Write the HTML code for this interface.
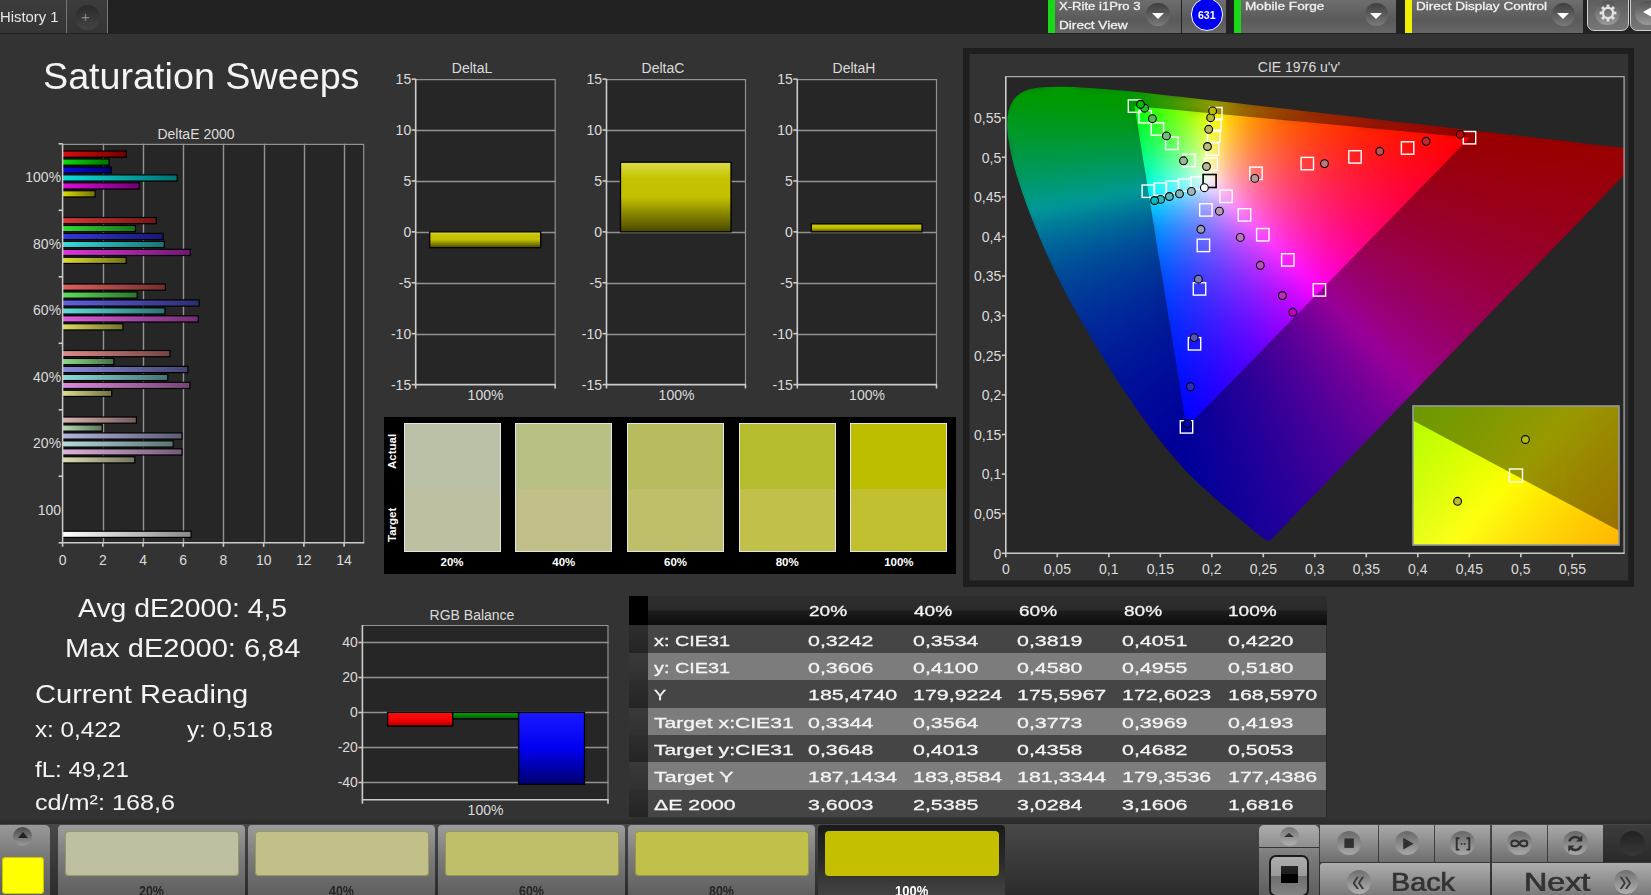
<!DOCTYPE html><html><head><meta charset="utf-8"><title>Saturation Sweeps</title><style>
html,body{margin:0;padding:0}
body{width:1651px;height:895px;overflow:hidden;position:relative;background:#333;font-family:"Liberation Sans",sans-serif;color:#eee}
.a{position:absolute}
svg text{font-family:"Liberation Sans",sans-serif}
.t{position:absolute;white-space:nowrap;line-height:1;transform-origin:0 0}
#topbar{left:0;top:0;width:1651px;height:34px;background:#222}
.tab{top:0;height:33px;background:linear-gradient(#3c3c3c,#353535);border-right:1px solid #777}
.dev{top:0;height:33px;background:linear-gradient(#6e6e6e,#5a5a5a 60%,#666)}
.dd{width:23.6px;height:23.6px;border-radius:50%;background:linear-gradient(#3e3e3e,#7a7a7a);top:2.7px}
.dd:after{content:"";position:absolute;left:5.8px;top:10.2px;border-left:6px solid transparent;border-right:6px solid transparent;border-top:6.4px solid #fff}
.sw{position:absolute;top:422.5px;width:95px;height:127.5px;border:1.2px solid #e4e4e4}
.sw i{position:absolute;left:0;top:0;width:100%;height:65px;display:block}
.swl{position:absolute;top:556px;width:97px;text-align:center;font-size:11.5px;font-weight:bold;color:#fff}
.row{position:absolute;left:648.1px;width:678.4px;height:27.5px}
.cell{position:absolute;font-size:14.5px;line-height:1;white-space:nowrap;transform:scaleX(1.475);transform-origin:0 0;color:#f4f4f4;-webkit-text-stroke:.3px #f4f4f4}
.card{position:absolute;top:824.5px;height:71px;width:187px;border-radius:4px 4px 0 0;background:linear-gradient(#9c9c9c,#7c7c7c 45%,#5e5e5e)}
.card b{position:absolute;left:6.5px;top:6.5px;width:174px;height:44.8px;border-radius:4px;display:block;box-shadow:inset 0 0 0 1px rgba(120,120,60,.55)}
.card span{position:absolute;left:0;width:100%;top:57px;text-align:center;font-size:13px;font-weight:bold;color:#262626}
.btn{position:absolute;top:824.5px;height:37.4px;width:55.3px;background:linear-gradient(#a9a9a9,#6e6e6e)}
.btn u{position:absolute;left:16.2px;top:6.6px;width:24.2px;height:24.2px;border-radius:50%;background:linear-gradient(#686868,#a8a8a8);display:block}
.nav{position:absolute;top:863.1px;height:32px;background:linear-gradient(#adadad,#7a7a7a)}
</style></head><body><svg class="a" style="left:0;top:0" width="1651" height="895"><defs><linearGradient id="g00"><stop offset="0" stop-color="rgb(221,12,12)"/><stop offset="1" stop-color="rgb(115,0,0)"/></linearGradient><linearGradient id="g01"><stop offset="0" stop-color="rgb(12,221,12)"/><stop offset="1" stop-color="rgb(0,115,0)"/></linearGradient><linearGradient id="g02"><stop offset="0" stop-color="rgb(12,12,221)"/><stop offset="1" stop-color="rgb(0,0,115)"/></linearGradient><linearGradient id="g03"><stop offset="0" stop-color="rgb(12,221,221)"/><stop offset="1" stop-color="rgb(0,115,115)"/></linearGradient><linearGradient id="g04"><stop offset="0" stop-color="rgb(221,12,221)"/><stop offset="1" stop-color="rgb(115,0,115)"/></linearGradient><linearGradient id="g05"><stop offset="0" stop-color="rgb(221,221,12)"/><stop offset="1" stop-color="rgb(115,115,0)"/></linearGradient><linearGradient id="g10"><stop offset="0" stop-color="rgb(221,54,54)"/><stop offset="1" stop-color="rgb(115,23,23)"/></linearGradient><linearGradient id="g11"><stop offset="0" stop-color="rgb(54,221,54)"/><stop offset="1" stop-color="rgb(23,115,23)"/></linearGradient><linearGradient id="g12"><stop offset="0" stop-color="rgb(54,54,221)"/><stop offset="1" stop-color="rgb(23,23,115)"/></linearGradient><linearGradient id="g13"><stop offset="0" stop-color="rgb(54,221,221)"/><stop offset="1" stop-color="rgb(23,115,115)"/></linearGradient><linearGradient id="g14"><stop offset="0" stop-color="rgb(221,54,221)"/><stop offset="1" stop-color="rgb(115,23,115)"/></linearGradient><linearGradient id="g15"><stop offset="0" stop-color="rgb(221,221,54)"/><stop offset="1" stop-color="rgb(115,115,23)"/></linearGradient><linearGradient id="g20"><stop offset="0" stop-color="rgb(221,96,96)"/><stop offset="1" stop-color="rgb(115,46,46)"/></linearGradient><linearGradient id="g21"><stop offset="0" stop-color="rgb(96,221,96)"/><stop offset="1" stop-color="rgb(46,115,46)"/></linearGradient><linearGradient id="g22"><stop offset="0" stop-color="rgb(96,96,221)"/><stop offset="1" stop-color="rgb(46,46,115)"/></linearGradient><linearGradient id="g23"><stop offset="0" stop-color="rgb(96,221,221)"/><stop offset="1" stop-color="rgb(46,115,115)"/></linearGradient><linearGradient id="g24"><stop offset="0" stop-color="rgb(221,96,221)"/><stop offset="1" stop-color="rgb(115,46,115)"/></linearGradient><linearGradient id="g25"><stop offset="0" stop-color="rgb(221,221,96)"/><stop offset="1" stop-color="rgb(115,115,46)"/></linearGradient><linearGradient id="g30"><stop offset="0" stop-color="rgb(221,138,138)"/><stop offset="1" stop-color="rgb(115,69,69)"/></linearGradient><linearGradient id="g31"><stop offset="0" stop-color="rgb(138,221,138)"/><stop offset="1" stop-color="rgb(69,115,69)"/></linearGradient><linearGradient id="g32"><stop offset="0" stop-color="rgb(138,138,221)"/><stop offset="1" stop-color="rgb(69,69,115)"/></linearGradient><linearGradient id="g33"><stop offset="0" stop-color="rgb(138,221,221)"/><stop offset="1" stop-color="rgb(69,115,115)"/></linearGradient><linearGradient id="g34"><stop offset="0" stop-color="rgb(221,138,221)"/><stop offset="1" stop-color="rgb(115,69,115)"/></linearGradient><linearGradient id="g35"><stop offset="0" stop-color="rgb(221,221,138)"/><stop offset="1" stop-color="rgb(115,115,69)"/></linearGradient><linearGradient id="g40"><stop offset="0" stop-color="rgb(221,180,180)"/><stop offset="1" stop-color="rgb(115,92,92)"/></linearGradient><linearGradient id="g41"><stop offset="0" stop-color="rgb(180,221,180)"/><stop offset="1" stop-color="rgb(92,115,92)"/></linearGradient><linearGradient id="g42"><stop offset="0" stop-color="rgb(180,180,221)"/><stop offset="1" stop-color="rgb(92,92,115)"/></linearGradient><linearGradient id="g43"><stop offset="0" stop-color="rgb(180,221,221)"/><stop offset="1" stop-color="rgb(92,115,115)"/></linearGradient><linearGradient id="g44"><stop offset="0" stop-color="rgb(221,180,221)"/><stop offset="1" stop-color="rgb(115,92,115)"/></linearGradient><linearGradient id="g45"><stop offset="0" stop-color="rgb(221,221,180)"/><stop offset="1" stop-color="rgb(115,115,92)"/></linearGradient><linearGradient id="gw"><stop offset="0" stop-color="#fff"/><stop offset="1" stop-color="#8a8a8a"/></linearGradient></defs><rect x="62.6" y="143.8" width="301.6" height="399" fill="#262626"/><path d="M103.5 143.8V542.8" stroke="#929292" stroke-width="1.4"/><path d="M143.5 143.8V542.8" stroke="#929292" stroke-width="1.4"/><path d="M183.5 143.8V542.8" stroke="#929292" stroke-width="1.4"/><path d="M223.5 143.8V542.8" stroke="#929292" stroke-width="1.4"/><path d="M264.5 143.8V542.8" stroke="#929292" stroke-width="1.4"/><path d="M304.5 143.8V542.8" stroke="#929292" stroke-width="1.4"/><path d="M344.5 143.8V542.8" stroke="#929292" stroke-width="1.4"/><path d="M62.6 144.3H363.7V542.8" stroke="#929292" fill="none" stroke-width="1.2"/><path d="M58.6 143.8H62.6" stroke="#cccccc" stroke-width="1.6"/><path d="M58.6 210.3H62.6" stroke="#cccccc" stroke-width="1.6"/><path d="M58.6 276.8H62.6" stroke="#cccccc" stroke-width="1.6"/><path d="M58.6 343.3H62.6" stroke="#cccccc" stroke-width="1.6"/><path d="M58.6 409.8H62.6" stroke="#cccccc" stroke-width="1.6"/><path d="M58.6 476.3H62.6" stroke="#cccccc" stroke-width="1.6"/><path d="M58.6 542.8H62.6" stroke="#cccccc" stroke-width="1.6"/><path d="M62.6 542.8V546.8" stroke="#cccccc" stroke-width="1.6"/><text x="62.6" y="564.8" font-size="14" text-anchor="middle" fill="#dcdcdc" font-weight="normal" >0</text><path d="M102.813 542.8V546.8" stroke="#cccccc" stroke-width="1.6"/><text x="102.813" y="564.8" font-size="14" text-anchor="middle" fill="#dcdcdc" font-weight="normal" >2</text><path d="M143.027 542.8V546.8" stroke="#cccccc" stroke-width="1.6"/><text x="143.027" y="564.8" font-size="14" text-anchor="middle" fill="#dcdcdc" font-weight="normal" >4</text><path d="M183.24 542.8V546.8" stroke="#cccccc" stroke-width="1.6"/><text x="183.24" y="564.8" font-size="14" text-anchor="middle" fill="#dcdcdc" font-weight="normal" >6</text><path d="M223.453 542.8V546.8" stroke="#cccccc" stroke-width="1.6"/><text x="223.453" y="564.8" font-size="14" text-anchor="middle" fill="#dcdcdc" font-weight="normal" >8</text><path d="M263.667 542.8V546.8" stroke="#cccccc" stroke-width="1.6"/><text x="263.667" y="564.8" font-size="14" text-anchor="middle" fill="#dcdcdc" font-weight="normal" >10</text><path d="M303.88 542.8V546.8" stroke="#cccccc" stroke-width="1.6"/><text x="303.88" y="564.8" font-size="14" text-anchor="middle" fill="#dcdcdc" font-weight="normal" >12</text><path d="M344.093 542.8V546.8" stroke="#cccccc" stroke-width="1.6"/><text x="344.093" y="564.8" font-size="14" text-anchor="middle" fill="#dcdcdc" font-weight="normal" >14</text><text x="61.1" y="182.25" font-size="14" text-anchor="end" fill="#dcdcdc" font-weight="normal" >100%</text><text x="61.1" y="248.75" font-size="14" text-anchor="end" fill="#dcdcdc" font-weight="normal" >80%</text><text x="61.1" y="315.25" font-size="14" text-anchor="end" fill="#dcdcdc" font-weight="normal" >60%</text><text x="61.1" y="381.75" font-size="14" text-anchor="end" fill="#dcdcdc" font-weight="normal" >40%</text><text x="61.1" y="448.25" font-size="14" text-anchor="end" fill="#dcdcdc" font-weight="normal" >20%</text><text x="61.1" y="514.75" font-size="14" text-anchor="end" fill="#dcdcdc" font-weight="normal" >100</text><text x="196" y="138.5" font-size="14" text-anchor="middle" fill="#dcdcdc" font-weight="normal" >DeltaE 2000</text><rect x="62.4" y="151" width="63.9371" height="6.2" fill="url(#g00)" stroke="#000" stroke-width="1.2"/><rect x="62.4" y="158.95" width="46.6453" height="6.2" fill="url(#g01)" stroke="#000" stroke-width="1.2"/><rect x="62.4" y="166.9" width="48.8571" height="6.2" fill="url(#g02)" stroke="#000" stroke-width="1.2"/><rect x="62.4" y="174.85" width="114.807" height="6.2" fill="url(#g03)" stroke="#000" stroke-width="1.2"/><rect x="62.4" y="182.8" width="76.8053" height="6.2" fill="url(#g04)" stroke="#000" stroke-width="1.2"/><rect x="62.4" y="190.75" width="32.7717" height="6.2" fill="url(#g05)" stroke="#000" stroke-width="1.2"/><rect x="62.4" y="217.5" width="93.896" height="6.2" fill="url(#g10)" stroke="#000" stroke-width="1.2"/><rect x="62.4" y="225.45" width="72.9851" height="6.2" fill="url(#g11)" stroke="#000" stroke-width="1.2"/><rect x="62.4" y="233.4" width="100.732" height="6.2" fill="url(#g12)" stroke="#000" stroke-width="1.2"/><rect x="62.4" y="241.35" width="101.939" height="6.2" fill="url(#g13)" stroke="#000" stroke-width="1.2"/><rect x="62.4" y="249.3" width="127.876" height="6.2" fill="url(#g14)" stroke="#000" stroke-width="1.2"/><rect x="62.4" y="257.25" width="63.736" height="6.2" fill="url(#g15)" stroke="#000" stroke-width="1.2"/><rect x="62.4" y="284" width="102.944" height="6.2" fill="url(#g20)" stroke="#000" stroke-width="1.2"/><rect x="62.4" y="291.95" width="74.7947" height="6.2" fill="url(#g21)" stroke="#000" stroke-width="1.2"/><rect x="62.4" y="299.9" width="136.723" height="6.2" fill="url(#g22)" stroke="#000" stroke-width="1.2"/><rect x="62.4" y="307.85" width="102.542" height="6.2" fill="url(#g23)" stroke="#000" stroke-width="1.2"/><rect x="62.4" y="315.8" width="135.919" height="6.2" fill="url(#g24)" stroke="#000" stroke-width="1.2"/><rect x="62.4" y="323.75" width="60.5189" height="6.2" fill="url(#g25)" stroke="#000" stroke-width="1.2"/><rect x="62.4" y="350.5" width="107.569" height="6.2" fill="url(#g30)" stroke="#000" stroke-width="1.2"/><rect x="62.4" y="358.45" width="51.4709" height="6.2" fill="url(#g31)" stroke="#000" stroke-width="1.2"/><rect x="62.4" y="366.4" width="125.463" height="6.2" fill="url(#g32)" stroke="#000" stroke-width="1.2"/><rect x="62.4" y="374.35" width="105.357" height="6.2" fill="url(#g33)" stroke="#000" stroke-width="1.2"/><rect x="62.4" y="382.3" width="127.474" height="6.2" fill="url(#g34)" stroke="#000" stroke-width="1.2"/><rect x="62.4" y="390.25" width="49.2592" height="6.2" fill="url(#g35)" stroke="#000" stroke-width="1.2"/><rect x="62.4" y="417" width="73.9904" height="6.2" fill="url(#g40)" stroke="#000" stroke-width="1.2"/><rect x="62.4" y="424.95" width="39.8091" height="6.2" fill="url(#g41)" stroke="#000" stroke-width="1.2"/><rect x="62.4" y="432.9" width="119.633" height="6.2" fill="url(#g42)" stroke="#000" stroke-width="1.2"/><rect x="62.4" y="440.85" width="110.786" height="6.2" fill="url(#g43)" stroke="#000" stroke-width="1.2"/><rect x="62.4" y="448.8" width="119.633" height="6.2" fill="url(#g44)" stroke="#000" stroke-width="1.2"/><rect x="62.4" y="456.75" width="72.3819" height="6.2" fill="url(#g45)" stroke="#000" stroke-width="1.2"/><rect x="62.4" y="531.2" width="128.681" height="6.2" fill="url(#gw)" stroke="#000" stroke-width="1.2"/><path d="M62.6 143.8V542.8H364.2" stroke="#cccccc" fill="none" stroke-width="1.5"/><defs><linearGradient id="gy" x1="0" y1="0" x2="0" y2="1"><stop offset="0" stop-color="#dcdc50"/><stop offset=".22" stop-color="#c6c400"/><stop offset=".5" stop-color="#c2c000"/><stop offset="1" stop-color="#4a4800"/></linearGradient></defs><rect x="415.7" y="79.1" width="140" height="305.5" fill="#262626"/><path d="M415.7 130.5H555.7" stroke="#929292" stroke-width="1.3"/><path d="M415.7 181.5H555.7" stroke="#929292" stroke-width="1.3"/><path d="M415.7 232.5H555.7" stroke="#929292" stroke-width="1.3"/><path d="M415.7 283.5H555.7" stroke="#929292" stroke-width="1.3"/><path d="M415.7 334.5H555.7" stroke="#929292" stroke-width="1.3"/><path d="M415.7 79.6H555.2V384.6" stroke="#929292" fill="none" stroke-width="1.2"/><path d="M415.7 79.1V384.6H555.7" stroke="#cccccc" fill="none" stroke-width="1.6"/><path d="M411.7 79.1H415.7" stroke="#cccccc" stroke-width="1.6"/><text x="411.2" y="84.3" font-size="14" text-anchor="end" fill="#dcdcdc" font-weight="normal" >15</text><path d="M411.7 130.017H415.7" stroke="#cccccc" stroke-width="1.6"/><text x="411.2" y="135.217" font-size="14" text-anchor="end" fill="#dcdcdc" font-weight="normal" >10</text><path d="M411.7 180.933H415.7" stroke="#cccccc" stroke-width="1.6"/><text x="411.2" y="186.133" font-size="14" text-anchor="end" fill="#dcdcdc" font-weight="normal" >5</text><path d="M411.7 231.85H415.7" stroke="#cccccc" stroke-width="1.6"/><text x="411.2" y="237.05" font-size="14" text-anchor="end" fill="#dcdcdc" font-weight="normal" >0</text><path d="M411.7 282.767H415.7" stroke="#cccccc" stroke-width="1.6"/><text x="411.2" y="287.967" font-size="14" text-anchor="end" fill="#dcdcdc" font-weight="normal" >-5</text><path d="M411.7 333.683H415.7" stroke="#cccccc" stroke-width="1.6"/><text x="411.2" y="338.883" font-size="14" text-anchor="end" fill="#dcdcdc" font-weight="normal" >-10</text><path d="M411.7 384.6H415.7" stroke="#cccccc" stroke-width="1.6"/><text x="411.2" y="389.8" font-size="14" text-anchor="end" fill="#dcdcdc" font-weight="normal" >-15</text><path d="M415.7 384.6V388.6M555.2 384.6V388.6" stroke="#cccccc" stroke-width="1.6"/><text x="472" y="73" font-size="14" text-anchor="middle" fill="#dcdcdc" font-weight="normal" >DeltaL</text><text x="485.5" y="400" font-size="14" text-anchor="middle" fill="#dcdcdc" font-weight="normal" >100%</text><rect x="429.7" y="231.85" width="111" height="15.7842" fill="url(#gy)" stroke="#000" stroke-width="1.3"/><rect x="606.5" y="79.1" width="139.5" height="305.5" fill="#262626"/><path d="M606.5 130.5H746" stroke="#929292" stroke-width="1.3"/><path d="M606.5 181.5H746" stroke="#929292" stroke-width="1.3"/><path d="M606.5 232.5H746" stroke="#929292" stroke-width="1.3"/><path d="M606.5 283.5H746" stroke="#929292" stroke-width="1.3"/><path d="M606.5 334.5H746" stroke="#929292" stroke-width="1.3"/><path d="M606.5 79.6H745.5V384.6" stroke="#929292" fill="none" stroke-width="1.2"/><path d="M606.5 79.1V384.6H746" stroke="#cccccc" fill="none" stroke-width="1.6"/><path d="M602.5 79.1H606.5" stroke="#cccccc" stroke-width="1.6"/><text x="602" y="84.3" font-size="14" text-anchor="end" fill="#dcdcdc" font-weight="normal" >15</text><path d="M602.5 130.017H606.5" stroke="#cccccc" stroke-width="1.6"/><text x="602" y="135.217" font-size="14" text-anchor="end" fill="#dcdcdc" font-weight="normal" >10</text><path d="M602.5 180.933H606.5" stroke="#cccccc" stroke-width="1.6"/><text x="602" y="186.133" font-size="14" text-anchor="end" fill="#dcdcdc" font-weight="normal" >5</text><path d="M602.5 231.85H606.5" stroke="#cccccc" stroke-width="1.6"/><text x="602" y="237.05" font-size="14" text-anchor="end" fill="#dcdcdc" font-weight="normal" >0</text><path d="M602.5 282.767H606.5" stroke="#cccccc" stroke-width="1.6"/><text x="602" y="287.967" font-size="14" text-anchor="end" fill="#dcdcdc" font-weight="normal" >-5</text><path d="M602.5 333.683H606.5" stroke="#cccccc" stroke-width="1.6"/><text x="602" y="338.883" font-size="14" text-anchor="end" fill="#dcdcdc" font-weight="normal" >-10</text><path d="M602.5 384.6H606.5" stroke="#cccccc" stroke-width="1.6"/><text x="602" y="389.8" font-size="14" text-anchor="end" fill="#dcdcdc" font-weight="normal" >-15</text><path d="M606.5 384.6V388.6M745.5 384.6V388.6" stroke="#cccccc" stroke-width="1.6"/><text x="663" y="73" font-size="14" text-anchor="middle" fill="#dcdcdc" font-weight="normal" >DeltaC</text><text x="676.5" y="400" font-size="14" text-anchor="middle" fill="#dcdcdc" font-weight="normal" >100%</text><rect x="620.5" y="162.196" width="110.5" height="69.654" fill="url(#gy)" stroke="#000" stroke-width="1.3"/><rect x="797.3" y="79.1" width="139.7" height="305.5" fill="#262626"/><path d="M797.3 130.5H937" stroke="#929292" stroke-width="1.3"/><path d="M797.3 181.5H937" stroke="#929292" stroke-width="1.3"/><path d="M797.3 232.5H937" stroke="#929292" stroke-width="1.3"/><path d="M797.3 283.5H937" stroke="#929292" stroke-width="1.3"/><path d="M797.3 334.5H937" stroke="#929292" stroke-width="1.3"/><path d="M797.3 79.6H936.5V384.6" stroke="#929292" fill="none" stroke-width="1.2"/><path d="M797.3 79.1V384.6H937" stroke="#cccccc" fill="none" stroke-width="1.6"/><path d="M793.3 79.1H797.3" stroke="#cccccc" stroke-width="1.6"/><text x="792.8" y="84.3" font-size="14" text-anchor="end" fill="#dcdcdc" font-weight="normal" >15</text><path d="M793.3 130.017H797.3" stroke="#cccccc" stroke-width="1.6"/><text x="792.8" y="135.217" font-size="14" text-anchor="end" fill="#dcdcdc" font-weight="normal" >10</text><path d="M793.3 180.933H797.3" stroke="#cccccc" stroke-width="1.6"/><text x="792.8" y="186.133" font-size="14" text-anchor="end" fill="#dcdcdc" font-weight="normal" >5</text><path d="M793.3 231.85H797.3" stroke="#cccccc" stroke-width="1.6"/><text x="792.8" y="237.05" font-size="14" text-anchor="end" fill="#dcdcdc" font-weight="normal" >0</text><path d="M793.3 282.767H797.3" stroke="#cccccc" stroke-width="1.6"/><text x="792.8" y="287.967" font-size="14" text-anchor="end" fill="#dcdcdc" font-weight="normal" >-5</text><path d="M793.3 333.683H797.3" stroke="#cccccc" stroke-width="1.6"/><text x="792.8" y="338.883" font-size="14" text-anchor="end" fill="#dcdcdc" font-weight="normal" >-10</text><path d="M793.3 384.6H797.3" stroke="#cccccc" stroke-width="1.6"/><text x="792.8" y="389.8" font-size="14" text-anchor="end" fill="#dcdcdc" font-weight="normal" >-15</text><path d="M797.3 384.6V388.6M936.5 384.6V388.6" stroke="#cccccc" stroke-width="1.6"/><text x="854" y="73" font-size="14" text-anchor="middle" fill="#dcdcdc" font-weight="normal" >DeltaH</text><text x="867" y="400" font-size="14" text-anchor="middle" fill="#dcdcdc" font-weight="normal" >100%</text><rect x="811.3" y="223.907" width="110.7" height="7.943" fill="url(#gy)" stroke="#000" stroke-width="1.3"/><rect x="362.4" y="625" width="246.1" height="174.8" fill="#262626"/><path d="M362.4 642.5H608.5" stroke="#929292" stroke-width="1.3"/><path d="M358.4 642.5H362.4" stroke="#cccccc" stroke-width="1.6"/><text x="357.9" y="647.3" font-size="14" text-anchor="end" fill="#dcdcdc" font-weight="normal" >40</text><path d="M362.4 677.5H608.5" stroke="#929292" stroke-width="1.3"/><path d="M358.4 677.5H362.4" stroke="#cccccc" stroke-width="1.6"/><text x="357.9" y="682.3" font-size="14" text-anchor="end" fill="#dcdcdc" font-weight="normal" >20</text><path d="M362.4 712.5H608.5" stroke="#929292" stroke-width="1.3"/><path d="M358.4 712.5H362.4" stroke="#cccccc" stroke-width="1.6"/><text x="357.9" y="717.3" font-size="14" text-anchor="end" fill="#dcdcdc" font-weight="normal" >0</text><path d="M362.4 747.5H608.5" stroke="#929292" stroke-width="1.3"/><path d="M358.4 747.5H362.4" stroke="#cccccc" stroke-width="1.6"/><text x="357.9" y="752.3" font-size="14" text-anchor="end" fill="#dcdcdc" font-weight="normal" >-20</text><path d="M362.4 782.5H608.5" stroke="#929292" stroke-width="1.3"/><path d="M358.4 782.5H362.4" stroke="#cccccc" stroke-width="1.6"/><text x="357.9" y="787.3" font-size="14" text-anchor="end" fill="#dcdcdc" font-weight="normal" >-40</text><path d="M362.4 625.5H608V799.8" stroke="#929292" fill="none" stroke-width="1.2"/><path d="M362.4 625V799.8H608.5" stroke="#cccccc" fill="none" stroke-width="1.6"/><path d="M362.4 799.8V803.8M608 799.8V803.8" stroke="#cccccc" stroke-width="1.6"/><text x="472" y="620" font-size="14" text-anchor="middle" fill="#dcdcdc" font-weight="normal" >RGB Balance</text><text x="485.5" y="815" font-size="14" text-anchor="middle" fill="#dcdcdc" font-weight="normal" >100%</text><defs><linearGradient id="br" x1="0" y1="0" x2="0" y2="1"><stop offset="0" stop-color="#ff1010"/><stop offset=".6" stop-color="#f00000"/><stop offset="1" stop-color="#a00000"/></linearGradient><linearGradient id="bg" x1="0" y1="0" x2="0" y2="1"><stop offset="0" stop-color="#10a010"/><stop offset="1" stop-color="#006000"/></linearGradient><linearGradient id="bb" x1="0" y1="0" x2="0" y2="1"><stop offset="0" stop-color="#1a1aff"/><stop offset=".5" stop-color="#0000f0"/><stop offset="1" stop-color="#000070"/></linearGradient></defs><rect x="387.6" y="712.4" width="65.1" height="13.7" fill="url(#br)" stroke="#000" stroke-width="1.3"/><rect x="452.7" y="712.4" width="65.9" height="6.4" fill="url(#bg)" stroke="#000" stroke-width="1.3"/><rect x="518.6" y="712.4" width="65.9" height="71.9" fill="url(#bb)" stroke="#000" stroke-width="1.3"/><rect x="963" y="48" width="671" height="539" fill="#1e1e1e"/><rect x="969.5" y="54" width="658.7" height="526.5" fill="#333"/><rect x="1005.8" y="76.2" width="618.8" height="477.1" fill="#262626"/><defs><filter id="bl" color-interpolation-filters="sRGB" x="-5%" y="-5%" width="110%" height="110%"><feGaussianBlur stdDeviation="5"/></filter><clipPath id="cpf"><rect x="1005.8" y="76.2" width="618.8" height="477.1"/></clipPath><clipPath id="cpl" clip-path="url(#cpf)"><path d="M1270.4 540.2L1270.3 540.2L1270.2 540.1L1270.1 540.2L1270.0 540.3L1269.9 540.3L1269.7 540.3L1269.5 540.3L1269.4 540.4L1269.3 540.5L1269.2 540.6L1269.1 540.7L1268.9 540.7L1268.6 540.7L1268.2 540.6L1267.9 540.6L1267.6 540.7L1267.3 540.6L1266.9 540.5L1266.3 540.3L1265.6 539.9L1264.6 539.3L1263.5 538.5L1262.3 537.7L1260.9 536.6L1259.3 535.3L1257.4 533.8L1255.3 532.1L1252.9 530.2L1250.4 528.0L1247.6 525.6L1244.5 523.0L1241.1 520.1L1237.3 517.0L1233.0 513.4L1228.4 509.6L1223.4 505.5L1218.0 501.0L1212.2 495.9L1205.9 490.3L1199.1 484.0L1191.9 477.1L1184.1 469.0L1175.3 459.2L1165.3 447.2L1154.2 433.3L1142.5 417.6L1130.3 400.2L1117.4 380.9L1104.3 360.0L1091.1 338.0L1078.0 315.4L1065.4 292.4L1053.9 269.4L1043.7 247.2L1034.8 226.0L1027.1 206.2L1020.7 188.1L1015.7 172.0L1011.9 157.8L1009.4 145.4L1007.8 134.7L1007.2 125.6L1007.5 117.7L1008.6 110.9L1010.6 105.0L1013.2 100.2L1016.6 96.2L1020.5 93.2L1024.8 90.9L1029.6 89.3L1034.7 88.2L1040.1 87.5L1045.7 87.1L1051.5 86.9L1057.4 86.8L1063.2 86.8L1069.1 86.9L1075.1 87.1L1081.2 87.4L1087.4 87.7L1093.9 88.2L1100.5 88.7L1107.4 89.2L1114.5 89.9L1121.9 90.6L1129.6 91.3L1137.5 92.1L1145.8 93.0L1154.5 93.9L1163.5 94.9L1172.9 96.0L1182.7 97.0L1192.8 98.2L1203.4 99.4L1214.5 100.7L1225.9 102.0L1237.8 103.3L1250.1 104.8L1262.9 106.2L1276.0 107.8L1289.6 109.3L1303.5 110.9L1317.8 112.6L1332.4 114.2L1347.2 116.0L1362.3 117.7L1377.4 119.5L1392.3 121.2L1406.9 122.9L1421.4 124.5L1435.8 126.2L1450.0 127.8L1463.6 129.4L1476.6 130.9L1489.0 132.3L1500.8 133.7L1512.0 135.0L1522.6 136.2L1532.4 137.3L1541.6 138.4L1550.2 139.4L1558.1 140.3L1565.6 141.1L1572.5 141.9L1579.0 142.7L1585.2 143.4L1591.0 144.1L1596.5 144.7L1601.6 145.3L1606.3 145.8L1610.7 146.3L1614.7 146.8L1618.3 147.2L1621.5 147.6L1624.3 147.9L1626.9 148.2L1629.3 148.5L1631.4 148.7L1633.3 148.9L1634.9 149.1L1636.3 149.3L1637.4 149.4L1638.5 149.5L1639.5 149.7L1640.4 149.8L1641.3 149.9L1642.0 150.0L1642.8 150.1L1643.6 150.1L1644.3 150.2L1645.1 150.3L1645.8 150.4L1646.3 150.5L1646.7 150.5L1647.0 150.5L1647.3 150.6L1647.5 150.6L1647.7 150.6L1647.8 150.6L1647.9 150.6Z"/></clipPath><clipPath id="cpt"><path d="M1470.0 137.6L1134.5 106.1L1186.5 427.8Z"/></clipPath></defs><g clip-path="url(#cpl)"><g filter="url(#bl)" stroke-width="8.6" fill="none"><g transform="translate(0,80.2)"><path d="M1045.5 0h32.6" stroke="#090"/></g><g transform="translate(0,88.2)"><path d="M1013.5 0h120.6" stroke="#090"/><path d="M1133.5 0h8.6" stroke="#099900"/><path d="M1141.5 0h8.6" stroke="#149900"/><path d="M1149.5 0h8.6" stroke="#209900"/><path d="M1157.5 0h8.6" stroke="#2d9900"/></g><g transform="translate(0,96.2)"><path d="M1005.5 0h8.6" stroke="#009902"/><path d="M1013.5 0h8.6" stroke="#009901"/><path d="M1021.5 0h112.6" stroke="#090"/><path d="M1133.5 0h8.6" stroke="#079900"/><path d="M1141.5 0h8.6" stroke="#139900"/><path d="M1149.5 0h8.6" stroke="#1f9900"/><path d="M1157.5 0h8.6" stroke="#2c9900"/><path d="M1165.5 0h8.6" stroke="#399900"/><path d="M1173.5 0h8.6" stroke="#479900"/><path d="M1181.5 0h8.6" stroke="#569900"/><path d="M1189.5 0h8.6" stroke="#690"/><path d="M1197.5 0h8.6" stroke="#769900"/><path d="M1205.5 0h8.6" stroke="#890"/><path d="M1213.5 0h8.6" stroke="#999800"/><path d="M1221.5 0h8.6" stroke="#998700"/><path d="M1229.5 0h8.6" stroke="#997900"/></g><g transform="translate(0,104.2)"><path d="M1005.5 0h8.6" stroke="#00990a"/><path d="M1013.5 0h16.6" stroke="#009909"/><path d="M1029.5 0h8.6" stroke="#009908"/><path d="M1037.5 0h16.6" stroke="#009907"/><path d="M1053.5 0h8.6" stroke="#009906"/><path d="M1061.5 0h8.6" stroke="#009905"/><path d="M1069.5 0h16.6" stroke="#009904"/><path d="M1085.5 0h8.6" stroke="#009903"/><path d="M1093.5 0h8.6" stroke="#009902"/><path d="M1101.5 0h8.6" stroke="#009901"/><path d="M1109.5 0h24.6" stroke="#090"/><path d="M1133.5 0h8.6" stroke="#059900"/><path d="M1141.5 0h8.6" stroke="#190"/><path d="M1149.5 0h8.6" stroke="#1e9900"/><path d="M1157.5 0h8.6" stroke="#2b9900"/><path d="M1165.5 0h8.6" stroke="#399900"/><path d="M1173.5 0h8.6" stroke="#479900"/><path d="M1181.5 0h8.6" stroke="#569900"/><path d="M1189.5 0h8.6" stroke="#690"/><path d="M1197.5 0h8.6" stroke="#790"/><path d="M1205.5 0h8.6" stroke="#899900"/><path d="M1213.5 0h8.6" stroke="#999700"/><path d="M1221.5 0h8.6" stroke="#998600"/><path d="M1229.5 0h8.6" stroke="#970"/><path d="M1237.5 0h8.6" stroke="#996b00"/><path d="M1245.5 0h8.6" stroke="#996100"/><path d="M1253.5 0h8.6" stroke="#995800"/><path d="M1261.5 0h8.6" stroke="#994f00"/><path d="M1269.5 0h8.6" stroke="#994800"/><path d="M1277.5 0h8.6" stroke="#994200"/><path d="M1285.5 0h8.6" stroke="#993c00"/><path d="M1293.5 0h8.6" stroke="#993700"/><path d="M1301.5 0h8.6" stroke="#930"/></g><g transform="translate(0,112.2)"><path d="M997.5 0h8.6" stroke="#009913"/><path d="M1005.5 0h16.6" stroke="#009912"/><path d="M1021.5 0h16.6" stroke="#091"/><path d="M1037.5 0h16.6" stroke="#009910"/><path d="M1053.5 0h8.6" stroke="#00990f"/><path d="M1061.5 0h16.6" stroke="#00990e"/><path d="M1077.5 0h8.6" stroke="#00990d"/><path d="M1085.5 0h16.6" stroke="#00990c"/><path d="M1101.5 0h8.6" stroke="#00990b"/><path d="M1109.5 0h16.6" stroke="#00990a"/><path d="M1125.5 0h8.6" stroke="#009909"/><path d="M1133.5 0h8.6" stroke="#039908"/><path d="M1141.5 0h8.6" stroke="#109907"/><path d="M1149.5 0h8.6" stroke="#1c9906"/><path d="M1157.5 0h8.6" stroke="#2a9905"/><path d="M1165.5 0h8.6" stroke="#389904"/><path d="M1173.5 0h8.6" stroke="#479903"/><path d="M1181.5 0h8.6" stroke="#569902"/><path d="M1189.5 0h8.6" stroke="#679901"/><path d="M1197.5 0h8.6" stroke="#789900"/><path d="M1205.5 0h8.6" stroke="#8a9900"/><path d="M1213.5 0h8.6" stroke="#999500"/><path d="M1221.5 0h8.6" stroke="#998400"/><path d="M1229.5 0h8.6" stroke="#997500"/><path d="M1237.5 0h8.6" stroke="#996900"/><path d="M1245.5 0h8.6" stroke="#995f00"/><path d="M1253.5 0h8.6" stroke="#995600"/><path d="M1261.5 0h8.6" stroke="#994e00"/><path d="M1269.5 0h8.6" stroke="#994700"/><path d="M1277.5 0h8.6" stroke="#994000"/><path d="M1285.5 0h8.6" stroke="#993b00"/><path d="M1293.5 0h8.6" stroke="#993600"/><path d="M1301.5 0h8.6" stroke="#993100"/><path d="M1309.5 0h8.6" stroke="#992d00"/><path d="M1317.5 0h8.6" stroke="#992900"/><path d="M1325.5 0h8.6" stroke="#992600"/><path d="M1333.5 0h8.6" stroke="#920"/><path d="M1341.5 0h8.6" stroke="#991f00"/><path d="M1349.5 0h8.6" stroke="#991d00"/><path d="M1357.5 0h8.6" stroke="#991a00"/><path d="M1365.5 0h8.6" stroke="#991800"/></g><g transform="translate(0,120.2)"><path d="M997.5 0h16.6" stroke="#00991b"/><path d="M1013.5 0h24.6" stroke="#00991a"/><path d="M1037.5 0h16.6" stroke="#009919"/><path d="M1053.5 0h24.6" stroke="#009918"/><path d="M1077.5 0h16.6" stroke="#009917"/><path d="M1093.5 0h16.6" stroke="#009916"/><path d="M1109.5 0h16.6" stroke="#009915"/><path d="M1125.5 0h8.6" stroke="#009914"/><path d="M1133.5 0h8.6" stroke="#019913"/><path d="M1205.5 0h8.6" stroke="#8c990c"/><path d="M1213.5 0h8.6" stroke="#99930b"/><path d="M1221.5 0h8.6" stroke="#998209"/><path d="M1229.5 0h8.6" stroke="#997307"/><path d="M1237.5 0h8.6" stroke="#996705"/><path d="M1245.5 0h8.6" stroke="#995d04"/><path d="M1253.5 0h8.6" stroke="#995403"/><path d="M1261.5 0h8.6" stroke="#994c02"/><path d="M1269.5 0h8.6" stroke="#994501"/><path d="M1277.5 0h8.6" stroke="#993f00"/><path d="M1285.5 0h8.6" stroke="#993900"/><path d="M1293.5 0h8.6" stroke="#993400"/><path d="M1301.5 0h8.6" stroke="#992f00"/><path d="M1309.5 0h8.6" stroke="#992b00"/><path d="M1317.5 0h8.6" stroke="#992700"/><path d="M1325.5 0h8.6" stroke="#992400"/><path d="M1333.5 0h8.6" stroke="#992100"/><path d="M1341.5 0h8.6" stroke="#991e00"/><path d="M1349.5 0h8.6" stroke="#991b00"/><path d="M1357.5 0h8.6" stroke="#991900"/><path d="M1365.5 0h8.6" stroke="#991600"/><path d="M1373.5 0h8.6" stroke="#991400"/><path d="M1381.5 0h8.6" stroke="#991200"/><path d="M1389.5 0h8.6" stroke="#991000"/><path d="M1397.5 0h8.6" stroke="#990e00"/><path d="M1405.5 0h8.6" stroke="#990c00"/><path d="M1413.5 0h8.6" stroke="#990b00"/><path d="M1421.5 0h8.6" stroke="#990900"/><path d="M1429.5 0h8.6" stroke="#990800"/><path d="M1437.5 0h8.6" stroke="#990700"/></g><g transform="translate(0,128.2)"><path d="M997.5 0h8.6" stroke="#009924"/><path d="M1005.5 0h40.6" stroke="#009923"/><path d="M1045.5 0h32.6" stroke="#092"/><path d="M1077.5 0h32.6" stroke="#009921"/><path d="M1109.5 0h24.6" stroke="#009920"/><path d="M1133.5 0h8.6" stroke="#00991f"/><path d="M1293.5 0h8.6" stroke="#993206"/><path d="M1301.5 0h8.6" stroke="#992e05"/><path d="M1309.5 0h8.6" stroke="#992a04"/><path d="M1317.5 0h8.6" stroke="#992603"/><path d="M1325.5 0h8.6" stroke="#992203"/><path d="M1333.5 0h8.6" stroke="#991f02"/><path d="M1341.5 0h8.6" stroke="#991c02"/><path d="M1349.5 0h8.6" stroke="#991a01"/><path d="M1357.5 0h8.6" stroke="#991700"/><path d="M1365.5 0h8.6" stroke="#991500"/><path d="M1373.5 0h8.6" stroke="#991300"/><path d="M1381.5 0h8.6" stroke="#910"/><path d="M1389.5 0h8.6" stroke="#990f00"/><path d="M1397.5 0h8.6" stroke="#990d00"/><path d="M1405.5 0h8.6" stroke="#990b00"/><path d="M1413.5 0h8.6" stroke="#990a00"/><path d="M1421.5 0h8.6" stroke="#990800"/><path d="M1429.5 0h8.6" stroke="#990700"/><path d="M1437.5 0h8.6" stroke="#990500"/><path d="M1445.5 0h8.6" stroke="#990400"/><path d="M1453.5 0h8.6" stroke="#990300"/><path d="M1461.5 0h8.6" stroke="#990200"/><path d="M1469.5 0h8.6" stroke="#990100"/><path d="M1477.5 0h40.6" stroke="#900"/></g><g transform="translate(0,136.2)"><path d="M997.5 0h24.6" stroke="#00992d"/><path d="M1021.5 0h120.6" stroke="#00992c"/><path d="M1141.5 0h8.6" stroke="#0a992c"/><path d="M1381.5 0h8.6" stroke="#990f04"/><path d="M1389.5 0h8.6" stroke="#990d03"/><path d="M1397.5 0h8.6" stroke="#990c03"/><path d="M1405.5 0h8.6" stroke="#990a02"/><path d="M1413.5 0h8.6" stroke="#990902"/><path d="M1421.5 0h8.6" stroke="#990701"/><path d="M1429.5 0h8.6" stroke="#990601"/><path d="M1437.5 0h8.6" stroke="#990401"/><path d="M1445.5 0h8.6" stroke="#990300"/><path d="M1453.5 0h8.6" stroke="#990200"/><path d="M1461.5 0h8.6" stroke="#990100"/><path d="M1469.5 0h112.6" stroke="#900"/></g><g transform="translate(0,144.2)"><path d="M1005.5 0h32.6" stroke="#009936"/><path d="M1037.5 0h48.6" stroke="#009937"/><path d="M1085.5 0h32.6" stroke="#009938"/><path d="M1117.5 0h24.6" stroke="#009939"/><path d="M1141.5 0h8.6" stroke="#099939"/><path d="M1453.5 0h8.6" stroke="#990103"/><path d="M1461.5 0h16.6" stroke="#990003"/><path d="M1477.5 0h24.6" stroke="#990002"/><path d="M1501.5 0h24.6" stroke="#990001"/><path d="M1525.5 0h112.6" stroke="#900"/></g><g transform="translate(0,152.2)"><path d="M1005.5 0h24.6" stroke="#009940"/><path d="M1029.5 0h24.6" stroke="#009941"/><path d="M1053.5 0h16.6" stroke="#009942"/><path d="M1069.5 0h16.6" stroke="#009943"/><path d="M1085.5 0h16.6" stroke="#094"/><path d="M1101.5 0h16.6" stroke="#009945"/><path d="M1117.5 0h16.6" stroke="#009946"/><path d="M1133.5 0h8.6" stroke="#009947"/><path d="M1141.5 0h8.6" stroke="#079947"/><path d="M1445.5 0h8.6" stroke="#990108"/><path d="M1453.5 0h16.6" stroke="#990007"/><path d="M1469.5 0h16.6" stroke="#990006"/><path d="M1485.5 0h16.6" stroke="#990005"/><path d="M1501.5 0h24.6" stroke="#990004"/><path d="M1525.5 0h24.6" stroke="#990003"/><path d="M1549.5 0h24.6" stroke="#990002"/><path d="M1573.5 0h32.6" stroke="#990001"/><path d="M1605.5 0h32.6" stroke="#900"/></g><g transform="translate(0,160.2)"><path d="M1005.5 0h16.6" stroke="#00994a"/><path d="M1021.5 0h16.6" stroke="#00994b"/><path d="M1037.5 0h8.6" stroke="#00994c"/><path d="M1045.5 0h16.6" stroke="#00994d"/><path d="M1061.5 0h8.6" stroke="#00994e"/><path d="M1069.5 0h16.6" stroke="#00994f"/><path d="M1085.5 0h8.6" stroke="#009950"/><path d="M1093.5 0h8.6" stroke="#009951"/><path d="M1101.5 0h8.6" stroke="#009952"/><path d="M1109.5 0h16.6" stroke="#009953"/><path d="M1125.5 0h8.6" stroke="#009954"/><path d="M1133.5 0h8.6" stroke="#095"/><path d="M1141.5 0h8.6" stroke="#049956"/><path d="M1437.5 0h8.6" stroke="#99010c"/><path d="M1445.5 0h16.6" stroke="#99000b"/><path d="M1461.5 0h16.6" stroke="#99000a"/><path d="M1477.5 0h8.6" stroke="#990009"/><path d="M1485.5 0h24.6" stroke="#990008"/><path d="M1509.5 0h16.6" stroke="#990007"/><path d="M1525.5 0h16.6" stroke="#990006"/><path d="M1541.5 0h24.6" stroke="#990005"/><path d="M1565.5 0h24.6" stroke="#990004"/><path d="M1589.5 0h32.6" stroke="#990003"/><path d="M1621.5 0h16.6" stroke="#990002"/></g><g transform="translate(0,168.2)"><path d="M1005.5 0h8.6" stroke="#009954"/><path d="M1013.5 0h8.6" stroke="#095"/><path d="M1021.5 0h8.6" stroke="#009956"/><path d="M1029.5 0h16.6" stroke="#009957"/><path d="M1045.5 0h8.6" stroke="#009958"/><path d="M1053.5 0h8.6" stroke="#009959"/><path d="M1061.5 0h8.6" stroke="#00995a"/><path d="M1069.5 0h8.6" stroke="#00995b"/><path d="M1077.5 0h8.6" stroke="#00995c"/><path d="M1085.5 0h8.6" stroke="#00995d"/><path d="M1093.5 0h8.6" stroke="#00995e"/><path d="M1101.5 0h8.6" stroke="#00995f"/><path d="M1109.5 0h8.6" stroke="#009961"/><path d="M1117.5 0h8.6" stroke="#009962"/><path d="M1125.5 0h8.6" stroke="#009963"/><path d="M1133.5 0h8.6" stroke="#009965"/><path d="M1141.5 0h8.6" stroke="#029966"/><path d="M1429.5 0h8.6" stroke="#990111"/><path d="M1437.5 0h8.6" stroke="#990010"/><path d="M1445.5 0h8.6" stroke="#99000f"/><path d="M1453.5 0h16.6" stroke="#99000e"/><path d="M1469.5 0h8.6" stroke="#99000d"/><path d="M1477.5 0h16.6" stroke="#99000c"/><path d="M1493.5 0h16.6" stroke="#99000b"/><path d="M1509.5 0h16.6" stroke="#99000a"/><path d="M1525.5 0h16.6" stroke="#990009"/><path d="M1541.5 0h16.6" stroke="#990008"/><path d="M1557.5 0h24.6" stroke="#990007"/><path d="M1581.5 0h24.6" stroke="#990006"/><path d="M1605.5 0h24.6" stroke="#990005"/><path d="M1629.5 0h8.6" stroke="#990004"/></g><g transform="translate(0,176.2)"><path d="M1005.5 0h8.6" stroke="#00995f"/><path d="M1013.5 0h8.6" stroke="#009960"/><path d="M1021.5 0h8.6" stroke="#009961"/><path d="M1029.5 0h8.6" stroke="#009962"/><path d="M1037.5 0h8.6" stroke="#009963"/><path d="M1045.5 0h8.6" stroke="#009964"/><path d="M1053.5 0h8.6" stroke="#096"/><path d="M1061.5 0h8.6" stroke="#009967"/><path d="M1069.5 0h8.6" stroke="#009968"/><path d="M1077.5 0h8.6" stroke="#009969"/><path d="M1085.5 0h8.6" stroke="#00996b"/><path d="M1093.5 0h8.6" stroke="#00996c"/><path d="M1101.5 0h8.6" stroke="#00996e"/><path d="M1109.5 0h8.6" stroke="#00996f"/><path d="M1117.5 0h8.6" stroke="#009971"/><path d="M1125.5 0h8.6" stroke="#009973"/><path d="M1133.5 0h8.6" stroke="#009975"/><path d="M1141.5 0h8.6" stroke="#097"/><path d="M1421.5 0h8.6" stroke="#990116"/><path d="M1429.5 0h8.6" stroke="#990015"/><path d="M1437.5 0h8.6" stroke="#990014"/><path d="M1445.5 0h8.6" stroke="#990013"/><path d="M1453.5 0h8.6" stroke="#990012"/><path d="M1461.5 0h16.6" stroke="#901"/><path d="M1477.5 0h8.6" stroke="#990010"/><path d="M1485.5 0h16.6" stroke="#99000f"/><path d="M1501.5 0h8.6" stroke="#99000e"/><path d="M1509.5 0h16.6" stroke="#99000d"/><path d="M1525.5 0h16.6" stroke="#99000c"/><path d="M1541.5 0h16.6" stroke="#99000b"/><path d="M1557.5 0h16.6" stroke="#99000a"/><path d="M1573.5 0h24.6" stroke="#990009"/><path d="M1597.5 0h16.6" stroke="#990008"/><path d="M1613.5 0h16.6" stroke="#990007"/></g><g transform="translate(0,184.2)"><path d="M1013.5 0h8.6" stroke="#00996c"/><path d="M1021.5 0h8.6" stroke="#00996d"/><path d="M1029.5 0h8.6" stroke="#00996e"/><path d="M1037.5 0h8.6" stroke="#009970"/><path d="M1045.5 0h8.6" stroke="#009971"/><path d="M1053.5 0h8.6" stroke="#009972"/><path d="M1061.5 0h8.6" stroke="#009974"/><path d="M1069.5 0h8.6" stroke="#009976"/><path d="M1077.5 0h8.6" stroke="#097"/><path d="M1085.5 0h8.6" stroke="#009979"/><path d="M1093.5 0h8.6" stroke="#00997b"/><path d="M1101.5 0h8.6" stroke="#00997d"/><path d="M1109.5 0h8.6" stroke="#00997f"/><path d="M1117.5 0h8.6" stroke="#009981"/><path d="M1125.5 0h8.6" stroke="#009983"/><path d="M1133.5 0h8.6" stroke="#009985"/><path d="M1141.5 0h8.6" stroke="#098"/><path d="M1149.5 0h8.6" stroke="#0d998b"/><path d="M1413.5 0h8.6" stroke="#99011b"/><path d="M1421.5 0h8.6" stroke="#99001a"/><path d="M1429.5 0h8.6" stroke="#990019"/><path d="M1437.5 0h8.6" stroke="#990018"/><path d="M1445.5 0h8.6" stroke="#990017"/><path d="M1453.5 0h8.6" stroke="#990016"/><path d="M1461.5 0h8.6" stroke="#990015"/><path d="M1469.5 0h8.6" stroke="#990014"/><path d="M1477.5 0h16.6" stroke="#990013"/><path d="M1493.5 0h8.6" stroke="#990012"/><path d="M1501.5 0h8.6" stroke="#901"/><path d="M1509.5 0h16.6" stroke="#990010"/><path d="M1525.5 0h16.6" stroke="#99000f"/><path d="M1541.5 0h16.6" stroke="#99000e"/><path d="M1557.5 0h16.6" stroke="#99000d"/><path d="M1573.5 0h16.6" stroke="#99000c"/><path d="M1589.5 0h16.6" stroke="#99000b"/><path d="M1605.5 0h16.6" stroke="#99000a"/></g><g transform="translate(0,192.2)"><path d="M1013.5 0h8.6" stroke="#009978"/><path d="M1021.5 0h8.6" stroke="#009979"/><path d="M1029.5 0h8.6" stroke="#00997b"/><path d="M1037.5 0h8.6" stroke="#00997c"/><path d="M1045.5 0h8.6" stroke="#00997e"/><path d="M1053.5 0h8.6" stroke="#009980"/><path d="M1061.5 0h8.6" stroke="#009982"/><path d="M1069.5 0h8.6" stroke="#009984"/><path d="M1077.5 0h8.6" stroke="#009986"/><path d="M1085.5 0h8.6" stroke="#098"/><path d="M1093.5 0h8.6" stroke="#00998a"/><path d="M1101.5 0h8.6" stroke="#00998d"/><path d="M1109.5 0h8.6" stroke="#00998f"/><path d="M1117.5 0h8.6" stroke="#009992"/><path d="M1125.5 0h8.6" stroke="#009994"/><path d="M1133.5 0h8.6" stroke="#009997"/><path d="M1141.5 0h8.6" stroke="#009899"/><path d="M1149.5 0h8.6" stroke="#0a9499"/><path d="M1405.5 0h8.6" stroke="#990121"/><path d="M1413.5 0h8.6" stroke="#99001f"/><path d="M1421.5 0h8.6" stroke="#99001e"/><path d="M1429.5 0h8.6" stroke="#99001d"/><path d="M1437.5 0h8.6" stroke="#99001c"/><path d="M1445.5 0h8.6" stroke="#99001b"/><path d="M1453.5 0h8.6" stroke="#99001a"/><path d="M1461.5 0h8.6" stroke="#990019"/><path d="M1469.5 0h8.6" stroke="#990018"/><path d="M1477.5 0h8.6" stroke="#990017"/><path d="M1485.5 0h8.6" stroke="#990016"/><path d="M1493.5 0h8.6" stroke="#990015"/><path d="M1501.5 0h16.6" stroke="#990014"/><path d="M1517.5 0h8.6" stroke="#990013"/><path d="M1525.5 0h16.6" stroke="#990012"/><path d="M1541.5 0h8.6" stroke="#901"/><path d="M1549.5 0h16.6" stroke="#990010"/><path d="M1565.5 0h16.6" stroke="#99000f"/><path d="M1581.5 0h16.6" stroke="#99000e"/><path d="M1597.5 0h16.6" stroke="#99000d"/></g><g transform="translate(0,200.2)"><path d="M1013.5 0h8.6" stroke="#009984"/><path d="M1021.5 0h8.6" stroke="#009986"/><path d="M1029.5 0h8.6" stroke="#098"/><path d="M1037.5 0h8.6" stroke="#00998a"/><path d="M1045.5 0h8.6" stroke="#00998c"/><path d="M1053.5 0h8.6" stroke="#00998e"/><path d="M1061.5 0h8.6" stroke="#009990"/><path d="M1069.5 0h8.6" stroke="#009993"/><path d="M1077.5 0h8.6" stroke="#009995"/><path d="M1085.5 0h8.6" stroke="#009998"/><path d="M1093.5 0h8.6" stroke="#009899"/><path d="M1101.5 0h8.6" stroke="#009599"/><path d="M1109.5 0h8.6" stroke="#009299"/><path d="M1117.5 0h8.6" stroke="#008f99"/><path d="M1125.5 0h8.6" stroke="#008c99"/><path d="M1133.5 0h8.6" stroke="#008a99"/><path d="M1141.5 0h8.6" stroke="#008799"/><path d="M1149.5 0h8.6" stroke="#078499"/><path d="M1397.5 0h8.6" stroke="#990127"/><path d="M1405.5 0h8.6" stroke="#990025"/><path d="M1413.5 0h8.6" stroke="#990024"/><path d="M1421.5 0h8.6" stroke="#902"/><path d="M1429.5 0h8.6" stroke="#990021"/><path d="M1437.5 0h8.6" stroke="#990020"/><path d="M1445.5 0h8.6" stroke="#99001f"/><path d="M1453.5 0h8.6" stroke="#99001d"/><path d="M1461.5 0h8.6" stroke="#99001c"/><path d="M1469.5 0h8.6" stroke="#99001b"/><path d="M1477.5 0h8.6" stroke="#99001a"/><path d="M1485.5 0h8.6" stroke="#990019"/><path d="M1493.5 0h16.6" stroke="#990018"/><path d="M1509.5 0h8.6" stroke="#990017"/><path d="M1517.5 0h8.6" stroke="#990016"/><path d="M1525.5 0h16.6" stroke="#990015"/><path d="M1541.5 0h8.6" stroke="#990014"/><path d="M1549.5 0h16.6" stroke="#990013"/><path d="M1565.5 0h8.6" stroke="#990012"/><path d="M1573.5 0h16.6" stroke="#901"/><path d="M1589.5 0h16.6" stroke="#990010"/></g><g transform="translate(0,208.2)"><path d="M1021.5 0h8.6" stroke="#009993"/><path d="M1029.5 0h8.6" stroke="#009995"/><path d="M1037.5 0h8.6" stroke="#009998"/><path d="M1045.5 0h8.6" stroke="#009899"/><path d="M1053.5 0h8.6" stroke="#009599"/><path d="M1061.5 0h8.6" stroke="#009399"/><path d="M1069.5 0h8.6" stroke="#009099"/><path d="M1077.5 0h8.6" stroke="#008e99"/><path d="M1085.5 0h8.6" stroke="#008b99"/><path d="M1093.5 0h8.6" stroke="#008999"/><path d="M1101.5 0h8.6" stroke="#008699"/><path d="M1109.5 0h8.6" stroke="#008399"/><path d="M1117.5 0h8.6" stroke="#008199"/><path d="M1125.5 0h8.6" stroke="#007e99"/><path d="M1133.5 0h8.6" stroke="#007b99"/><path d="M1141.5 0h8.6" stroke="#007899"/><path d="M1149.5 0h8.6" stroke="#057599"/><path d="M1389.5 0h8.6" stroke="#99012d"/><path d="M1397.5 0h8.6" stroke="#99002c"/><path d="M1405.5 0h8.6" stroke="#99002a"/><path d="M1413.5 0h8.6" stroke="#990028"/><path d="M1421.5 0h8.6" stroke="#990027"/><path d="M1429.5 0h8.6" stroke="#990025"/><path d="M1437.5 0h8.6" stroke="#990024"/><path d="M1445.5 0h8.6" stroke="#902"/><path d="M1453.5 0h8.6" stroke="#990021"/><path d="M1461.5 0h8.6" stroke="#990020"/><path d="M1469.5 0h8.6" stroke="#99001f"/><path d="M1477.5 0h8.6" stroke="#99001e"/><path d="M1485.5 0h8.6" stroke="#99001d"/><path d="M1493.5 0h8.6" stroke="#99001c"/><path d="M1501.5 0h8.6" stroke="#99001b"/><path d="M1509.5 0h8.6" stroke="#99001a"/><path d="M1517.5 0h8.6" stroke="#990019"/><path d="M1525.5 0h16.6" stroke="#990018"/><path d="M1541.5 0h8.6" stroke="#990017"/><path d="M1549.5 0h8.6" stroke="#990016"/><path d="M1557.5 0h16.6" stroke="#990015"/><path d="M1573.5 0h16.6" stroke="#990014"/><path d="M1589.5 0h8.6" stroke="#990013"/><path d="M1597.5 0h8.6" stroke="#990012"/></g><g transform="translate(0,216.2)"><path d="M1021.5 0h8.6" stroke="#009199"/><path d="M1029.5 0h8.6" stroke="#008f99"/><path d="M1037.5 0h8.6" stroke="#008d99"/><path d="M1045.5 0h8.6" stroke="#008a99"/><path d="M1053.5 0h8.6" stroke="#089"/><path d="M1061.5 0h8.6" stroke="#008699"/><path d="M1069.5 0h8.6" stroke="#008399"/><path d="M1077.5 0h8.6" stroke="#008199"/><path d="M1085.5 0h8.6" stroke="#007e99"/><path d="M1093.5 0h8.6" stroke="#007c99"/><path d="M1101.5 0h8.6" stroke="#007999"/><path d="M1109.5 0h8.6" stroke="#079"/><path d="M1117.5 0h8.6" stroke="#007499"/><path d="M1125.5 0h8.6" stroke="#007199"/><path d="M1133.5 0h8.6" stroke="#006f99"/><path d="M1141.5 0h8.6" stroke="#006c99"/><path d="M1149.5 0h8.6" stroke="#026999"/><path d="M1381.5 0h8.6" stroke="#990135"/><path d="M1389.5 0h8.6" stroke="#990032"/><path d="M1397.5 0h8.6" stroke="#990030"/><path d="M1405.5 0h8.6" stroke="#99002e"/><path d="M1413.5 0h8.6" stroke="#99002d"/><path d="M1421.5 0h8.6" stroke="#99002b"/><path d="M1429.5 0h8.6" stroke="#990029"/><path d="M1437.5 0h8.6" stroke="#990028"/><path d="M1445.5 0h8.6" stroke="#990026"/><path d="M1453.5 0h8.6" stroke="#990025"/><path d="M1461.5 0h8.6" stroke="#990024"/><path d="M1469.5 0h8.6" stroke="#990023"/><path d="M1477.5 0h8.6" stroke="#990021"/><path d="M1485.5 0h8.6" stroke="#990020"/><path d="M1493.5 0h8.6" stroke="#99001f"/><path d="M1501.5 0h8.6" stroke="#99001e"/><path d="M1509.5 0h8.6" stroke="#99001d"/><path d="M1517.5 0h8.6" stroke="#99001c"/><path d="M1525.5 0h16.6" stroke="#99001b"/><path d="M1541.5 0h8.6" stroke="#99001a"/><path d="M1549.5 0h8.6" stroke="#990019"/><path d="M1557.5 0h16.6" stroke="#990018"/><path d="M1573.5 0h8.6" stroke="#990017"/><path d="M1581.5 0h16.6" stroke="#990016"/></g><g transform="translate(0,224.2)"><path d="M1029.5 0h8.6" stroke="#008399"/><path d="M1037.5 0h8.6" stroke="#008199"/><path d="M1045.5 0h8.6" stroke="#007f99"/><path d="M1053.5 0h8.6" stroke="#007c99"/><path d="M1061.5 0h8.6" stroke="#007a99"/><path d="M1069.5 0h8.6" stroke="#007899"/><path d="M1077.5 0h8.6" stroke="#007599"/><path d="M1085.5 0h8.6" stroke="#007399"/><path d="M1093.5 0h8.6" stroke="#007199"/><path d="M1101.5 0h8.6" stroke="#006e99"/><path d="M1109.5 0h8.6" stroke="#006c99"/><path d="M1117.5 0h8.6" stroke="#006999"/><path d="M1125.5 0h8.6" stroke="#006799"/><path d="M1133.5 0h8.6" stroke="#006499"/><path d="M1141.5 0h8.6" stroke="#006199"/><path d="M1149.5 0h8.6" stroke="#005f99"/><path d="M1373.5 0h8.6" stroke="#99013c"/><path d="M1381.5 0h8.6" stroke="#99003a"/><path d="M1389.5 0h8.6" stroke="#990037"/><path d="M1397.5 0h8.6" stroke="#990035"/><path d="M1405.5 0h8.6" stroke="#903"/><path d="M1413.5 0h8.6" stroke="#990031"/><path d="M1421.5 0h8.6" stroke="#99002f"/><path d="M1429.5 0h8.6" stroke="#99002e"/><path d="M1437.5 0h8.6" stroke="#99002c"/><path d="M1445.5 0h8.6" stroke="#99002a"/><path d="M1453.5 0h8.6" stroke="#990029"/><path d="M1461.5 0h8.6" stroke="#990028"/><path d="M1469.5 0h8.6" stroke="#990026"/><path d="M1477.5 0h8.6" stroke="#990025"/><path d="M1485.5 0h8.6" stroke="#990024"/><path d="M1493.5 0h8.6" stroke="#990023"/><path d="M1501.5 0h8.6" stroke="#902"/><path d="M1509.5 0h8.6" stroke="#990021"/><path d="M1517.5 0h8.6" stroke="#990020"/><path d="M1525.5 0h8.6" stroke="#99001f"/><path d="M1533.5 0h8.6" stroke="#99001e"/><path d="M1541.5 0h8.6" stroke="#99001d"/><path d="M1549.5 0h8.6" stroke="#99001c"/><path d="M1557.5 0h8.6" stroke="#99001b"/><path d="M1565.5 0h16.6" stroke="#99001a"/><path d="M1581.5 0h8.6" stroke="#990019"/></g><g transform="translate(0,232.2)"><path d="M1029.5 0h8.6" stroke="#007999"/><path d="M1037.5 0h8.6" stroke="#079"/><path d="M1045.5 0h8.6" stroke="#007499"/><path d="M1053.5 0h8.6" stroke="#007299"/><path d="M1061.5 0h8.6" stroke="#007099"/><path d="M1069.5 0h8.6" stroke="#006e99"/><path d="M1077.5 0h8.6" stroke="#006b99"/><path d="M1085.5 0h8.6" stroke="#006999"/><path d="M1093.5 0h8.6" stroke="#006799"/><path d="M1101.5 0h8.6" stroke="#006499"/><path d="M1109.5 0h8.6" stroke="#006299"/><path d="M1117.5 0h8.6" stroke="#006099"/><path d="M1125.5 0h8.6" stroke="#005d99"/><path d="M1133.5 0h8.6" stroke="#005b99"/><path d="M1141.5 0h8.6" stroke="#005899"/><path d="M1149.5 0h8.6" stroke="#005699"/><path d="M1157.5 0h8.6" stroke="#095399"/><path d="M1365.5 0h8.6" stroke="#990245"/><path d="M1373.5 0h8.6" stroke="#990042"/><path d="M1381.5 0h8.6" stroke="#99003f"/><path d="M1389.5 0h8.6" stroke="#99003c"/><path d="M1397.5 0h8.6" stroke="#99003a"/><path d="M1405.5 0h8.6" stroke="#990038"/><path d="M1413.5 0h8.6" stroke="#990036"/><path d="M1421.5 0h8.6" stroke="#990034"/><path d="M1429.5 0h8.6" stroke="#990032"/><path d="M1437.5 0h8.6" stroke="#990030"/><path d="M1445.5 0h8.6" stroke="#99002e"/><path d="M1453.5 0h8.6" stroke="#99002d"/><path d="M1461.5 0h8.6" stroke="#99002b"/><path d="M1469.5 0h8.6" stroke="#99002a"/><path d="M1477.5 0h8.6" stroke="#990029"/><path d="M1485.5 0h8.6" stroke="#990027"/><path d="M1493.5 0h8.6" stroke="#990026"/><path d="M1501.5 0h8.6" stroke="#990025"/><path d="M1509.5 0h8.6" stroke="#990024"/><path d="M1517.5 0h8.6" stroke="#990023"/><path d="M1525.5 0h8.6" stroke="#902"/><path d="M1533.5 0h8.6" stroke="#990021"/><path d="M1541.5 0h8.6" stroke="#990020"/><path d="M1549.5 0h8.6" stroke="#99001f"/><path d="M1557.5 0h8.6" stroke="#99001e"/><path d="M1565.5 0h8.6" stroke="#99001d"/><path d="M1573.5 0h8.6" stroke="#99001c"/></g><g transform="translate(0,240.2)"><path d="M1029.5 0h8.6" stroke="#006f99"/><path d="M1037.5 0h8.6" stroke="#006d99"/><path d="M1045.5 0h8.6" stroke="#006b99"/><path d="M1053.5 0h8.6" stroke="#006999"/><path d="M1061.5 0h8.6" stroke="#006799"/><path d="M1069.5 0h8.6" stroke="#006599"/><path d="M1077.5 0h8.6" stroke="#006399"/><path d="M1085.5 0h8.6" stroke="#006099"/><path d="M1093.5 0h8.6" stroke="#005e99"/><path d="M1101.5 0h8.6" stroke="#005c99"/><path d="M1109.5 0h8.6" stroke="#005a99"/><path d="M1117.5 0h8.6" stroke="#005799"/><path d="M1125.5 0h8.6" stroke="#059"/><path d="M1133.5 0h8.6" stroke="#005399"/><path d="M1141.5 0h8.6" stroke="#005099"/><path d="M1149.5 0h8.6" stroke="#004e99"/><path d="M1157.5 0h8.6" stroke="#074b99"/><path d="M1357.5 0h8.6" stroke="#99024e"/><path d="M1365.5 0h8.6" stroke="#99004a"/><path d="M1373.5 0h8.6" stroke="#990047"/><path d="M1381.5 0h8.6" stroke="#904"/><path d="M1389.5 0h8.6" stroke="#990042"/><path d="M1397.5 0h8.6" stroke="#99003f"/><path d="M1405.5 0h8.6" stroke="#99003d"/><path d="M1413.5 0h8.6" stroke="#99003a"/><path d="M1421.5 0h8.6" stroke="#990038"/><path d="M1429.5 0h8.6" stroke="#990036"/><path d="M1437.5 0h8.6" stroke="#990034"/><path d="M1445.5 0h8.6" stroke="#903"/><path d="M1453.5 0h8.6" stroke="#990031"/><path d="M1461.5 0h8.6" stroke="#99002f"/><path d="M1469.5 0h8.6" stroke="#99002e"/><path d="M1477.5 0h8.6" stroke="#99002c"/><path d="M1485.5 0h8.6" stroke="#99002b"/><path d="M1493.5 0h8.6" stroke="#99002a"/><path d="M1501.5 0h8.6" stroke="#990028"/><path d="M1509.5 0h8.6" stroke="#990027"/><path d="M1517.5 0h8.6" stroke="#990026"/><path d="M1525.5 0h8.6" stroke="#990025"/><path d="M1533.5 0h8.6" stroke="#990024"/><path d="M1541.5 0h8.6" stroke="#990023"/><path d="M1549.5 0h8.6" stroke="#902"/><path d="M1557.5 0h8.6" stroke="#990021"/><path d="M1565.5 0h8.6" stroke="#990020"/></g><g transform="translate(0,248.2)"><path d="M1037.5 0h8.6" stroke="#006599"/><path d="M1045.5 0h8.6" stroke="#006399"/><path d="M1053.5 0h8.6" stroke="#006199"/><path d="M1061.5 0h8.6" stroke="#005f99"/><path d="M1069.5 0h8.6" stroke="#005d99"/><path d="M1077.5 0h8.6" stroke="#005b99"/><path d="M1085.5 0h8.6" stroke="#005999"/><path d="M1093.5 0h8.6" stroke="#005699"/><path d="M1101.5 0h8.6" stroke="#005499"/><path d="M1109.5 0h8.6" stroke="#005299"/><path d="M1117.5 0h8.6" stroke="#005099"/><path d="M1125.5 0h8.6" stroke="#004d99"/><path d="M1133.5 0h8.6" stroke="#004b99"/><path d="M1141.5 0h8.6" stroke="#004999"/><path d="M1149.5 0h8.6" stroke="#004799"/><path d="M1157.5 0h8.6" stroke="#054499"/><path d="M1349.5 0h8.6" stroke="#990258"/><path d="M1357.5 0h8.6" stroke="#990054"/><path d="M1365.5 0h8.6" stroke="#990050"/><path d="M1373.5 0h8.6" stroke="#99004d"/><path d="M1381.5 0h8.6" stroke="#99004a"/><path d="M1389.5 0h8.6" stroke="#990047"/><path d="M1397.5 0h8.6" stroke="#904"/><path d="M1405.5 0h8.6" stroke="#990041"/><path d="M1413.5 0h8.6" stroke="#99003f"/><path d="M1421.5 0h8.6" stroke="#99003d"/><path d="M1429.5 0h8.6" stroke="#99003b"/><path d="M1437.5 0h8.6" stroke="#990039"/><path d="M1445.5 0h8.6" stroke="#990037"/><path d="M1453.5 0h8.6" stroke="#990035"/><path d="M1461.5 0h8.6" stroke="#903"/><path d="M1469.5 0h8.6" stroke="#990031"/><path d="M1477.5 0h8.6" stroke="#990030"/><path d="M1485.5 0h8.6" stroke="#99002e"/><path d="M1493.5 0h8.6" stroke="#99002d"/><path d="M1501.5 0h8.6" stroke="#99002c"/><path d="M1509.5 0h8.6" stroke="#99002a"/><path d="M1517.5 0h8.6" stroke="#990029"/><path d="M1525.5 0h8.6" stroke="#990028"/><path d="M1533.5 0h8.6" stroke="#990027"/><path d="M1541.5 0h8.6" stroke="#990026"/><path d="M1549.5 0h8.6" stroke="#990025"/><path d="M1557.5 0h8.6" stroke="#990024"/></g><g transform="translate(0,256.2)"><path d="M1037.5 0h8.6" stroke="#005e99"/><path d="M1045.5 0h8.6" stroke="#005c99"/><path d="M1053.5 0h8.6" stroke="#005a99"/><path d="M1061.5 0h8.6" stroke="#005899"/><path d="M1069.5 0h8.6" stroke="#005699"/><path d="M1077.5 0h8.6" stroke="#005499"/><path d="M1085.5 0h8.6" stroke="#005299"/><path d="M1093.5 0h8.6" stroke="#004f99"/><path d="M1101.5 0h8.6" stroke="#004d99"/><path d="M1109.5 0h8.6" stroke="#004b99"/><path d="M1117.5 0h8.6" stroke="#004999"/><path d="M1125.5 0h8.6" stroke="#004799"/><path d="M1133.5 0h8.6" stroke="#004599"/><path d="M1141.5 0h8.6" stroke="#004399"/><path d="M1149.5 0h8.6" stroke="#004099"/><path d="M1157.5 0h8.6" stroke="#033e99"/><path d="M1341.5 0h8.6" stroke="#990263"/><path d="M1349.5 0h8.6" stroke="#99005e"/><path d="M1357.5 0h8.6" stroke="#99005a"/><path d="M1365.5 0h8.6" stroke="#990056"/><path d="M1373.5 0h8.6" stroke="#990052"/><path d="M1381.5 0h8.6" stroke="#99004f"/><path d="M1389.5 0h8.6" stroke="#99004c"/><path d="M1397.5 0h8.6" stroke="#990049"/><path d="M1405.5 0h8.6" stroke="#990046"/><path d="M1413.5 0h8.6" stroke="#904"/><path d="M1421.5 0h8.6" stroke="#990041"/><path d="M1429.5 0h8.6" stroke="#99003f"/><path d="M1437.5 0h8.6" stroke="#99003d"/><path d="M1445.5 0h8.6" stroke="#99003b"/><path d="M1453.5 0h8.6" stroke="#990039"/><path d="M1461.5 0h8.6" stroke="#990037"/><path d="M1469.5 0h8.6" stroke="#990035"/><path d="M1477.5 0h8.6" stroke="#990034"/><path d="M1485.5 0h8.6" stroke="#990032"/><path d="M1493.5 0h8.6" stroke="#990031"/><path d="M1501.5 0h8.6" stroke="#99002f"/><path d="M1509.5 0h8.6" stroke="#99002e"/><path d="M1517.5 0h8.6" stroke="#99002c"/><path d="M1525.5 0h8.6" stroke="#99002b"/><path d="M1533.5 0h8.6" stroke="#99002a"/><path d="M1541.5 0h8.6" stroke="#990029"/><path d="M1549.5 0h8.6" stroke="#990028"/></g><g transform="translate(0,264.2)"><path d="M1045.5 0h8.6" stroke="#059"/><path d="M1053.5 0h8.6" stroke="#005399"/><path d="M1061.5 0h8.6" stroke="#005199"/><path d="M1069.5 0h8.6" stroke="#004f99"/><path d="M1077.5 0h8.6" stroke="#004d99"/><path d="M1085.5 0h8.6" stroke="#004b99"/><path d="M1093.5 0h8.6" stroke="#004999"/><path d="M1101.5 0h8.6" stroke="#004799"/><path d="M1109.5 0h8.6" stroke="#004599"/><path d="M1117.5 0h8.6" stroke="#004399"/><path d="M1125.5 0h8.6" stroke="#004199"/><path d="M1133.5 0h8.6" stroke="#003f99"/><path d="M1141.5 0h8.6" stroke="#003d99"/><path d="M1149.5 0h8.6" stroke="#003b99"/><path d="M1157.5 0h8.6" stroke="#023899"/><path d="M1333.5 0h8.6" stroke="#99026f"/><path d="M1341.5 0h8.6" stroke="#99006a"/><path d="M1349.5 0h8.6" stroke="#990065"/><path d="M1357.5 0h8.6" stroke="#990060"/><path d="M1365.5 0h8.6" stroke="#99005c"/><path d="M1373.5 0h8.6" stroke="#990058"/><path d="M1381.5 0h8.6" stroke="#905"/><path d="M1389.5 0h8.6" stroke="#990051"/><path d="M1397.5 0h8.6" stroke="#99004e"/><path d="M1405.5 0h8.6" stroke="#99004b"/><path d="M1413.5 0h8.6" stroke="#990048"/><path d="M1421.5 0h8.6" stroke="#990046"/><path d="M1429.5 0h8.6" stroke="#990043"/><path d="M1437.5 0h8.6" stroke="#990041"/><path d="M1445.5 0h8.6" stroke="#99003f"/><path d="M1453.5 0h8.6" stroke="#99003d"/><path d="M1461.5 0h8.6" stroke="#99003b"/><path d="M1469.5 0h8.6" stroke="#990039"/><path d="M1477.5 0h8.6" stroke="#990037"/><path d="M1485.5 0h8.6" stroke="#990036"/><path d="M1493.5 0h8.6" stroke="#990034"/><path d="M1501.5 0h8.6" stroke="#903"/><path d="M1509.5 0h8.6" stroke="#990031"/><path d="M1517.5 0h8.6" stroke="#990030"/><path d="M1525.5 0h8.6" stroke="#99002e"/><path d="M1533.5 0h8.6" stroke="#99002d"/><path d="M1541.5 0h8.6" stroke="#99002c"/></g><g transform="translate(0,272.2)"><path d="M1045.5 0h8.6" stroke="#004f99"/><path d="M1053.5 0h8.6" stroke="#004d99"/><path d="M1061.5 0h8.6" stroke="#004b99"/><path d="M1069.5 0h8.6" stroke="#004999"/><path d="M1077.5 0h8.6" stroke="#004799"/><path d="M1085.5 0h8.6" stroke="#004599"/><path d="M1093.5 0h8.6" stroke="#049"/><path d="M1101.5 0h8.6" stroke="#004299"/><path d="M1109.5 0h8.6" stroke="#004099"/><path d="M1117.5 0h8.6" stroke="#003e99"/><path d="M1125.5 0h8.6" stroke="#003c99"/><path d="M1133.5 0h8.6" stroke="#003a99"/><path d="M1141.5 0h8.6" stroke="#003899"/><path d="M1149.5 0h8.6" stroke="#003599"/><path d="M1157.5 0h8.6" stroke="#039"/><path d="M1325.5 0h8.6" stroke="#99027d"/><path d="M1333.5 0h8.6" stroke="#990076"/><path d="M1341.5 0h8.6" stroke="#990071"/><path d="M1349.5 0h8.6" stroke="#99006b"/><path d="M1357.5 0h8.6" stroke="#990067"/><path d="M1365.5 0h8.6" stroke="#990062"/><path d="M1373.5 0h8.6" stroke="#99005e"/><path d="M1381.5 0h8.6" stroke="#99005a"/><path d="M1389.5 0h8.6" stroke="#990057"/><path d="M1397.5 0h8.6" stroke="#990053"/><path d="M1405.5 0h8.6" stroke="#990050"/><path d="M1413.5 0h8.6" stroke="#99004d"/><path d="M1421.5 0h8.6" stroke="#99004b"/><path d="M1429.5 0h8.6" stroke="#990048"/><path d="M1437.5 0h8.6" stroke="#990045"/><path d="M1445.5 0h8.6" stroke="#990043"/><path d="M1453.5 0h8.6" stroke="#990041"/><path d="M1461.5 0h8.6" stroke="#99003f"/><path d="M1469.5 0h8.6" stroke="#99003d"/><path d="M1477.5 0h8.6" stroke="#99003b"/><path d="M1485.5 0h8.6" stroke="#990039"/><path d="M1493.5 0h8.6" stroke="#990038"/><path d="M1501.5 0h8.6" stroke="#990036"/><path d="M1509.5 0h8.6" stroke="#990035"/><path d="M1517.5 0h8.6" stroke="#903"/><path d="M1525.5 0h8.6" stroke="#990032"/><path d="M1533.5 0h8.6" stroke="#990030"/></g><g transform="translate(0,280.2)"><path d="M1053.5 0h8.6" stroke="#004899"/><path d="M1061.5 0h8.6" stroke="#004699"/><path d="M1069.5 0h8.6" stroke="#049"/><path d="M1077.5 0h8.6" stroke="#004299"/><path d="M1085.5 0h8.6" stroke="#004099"/><path d="M1093.5 0h8.6" stroke="#003e99"/><path d="M1101.5 0h8.6" stroke="#003d99"/><path d="M1109.5 0h8.6" stroke="#003b99"/><path d="M1117.5 0h8.6" stroke="#003999"/><path d="M1125.5 0h8.6" stroke="#003799"/><path d="M1133.5 0h8.6" stroke="#003599"/><path d="M1141.5 0h8.6" stroke="#039"/><path d="M1149.5 0h8.6" stroke="#003199"/><path d="M1157.5 0h8.6" stroke="#002f99"/><path d="M1317.5 0h8.6" stroke="#99028c"/><path d="M1325.5 0h8.6" stroke="#990084"/><path d="M1333.5 0h8.6" stroke="#99007e"/><path d="M1341.5 0h8.6" stroke="#990078"/><path d="M1349.5 0h8.6" stroke="#990072"/><path d="M1357.5 0h8.6" stroke="#99006d"/><path d="M1365.5 0h8.6" stroke="#990068"/><path d="M1373.5 0h8.6" stroke="#990064"/><path d="M1381.5 0h8.6" stroke="#990060"/><path d="M1389.5 0h8.6" stroke="#99005c"/><path d="M1397.5 0h8.6" stroke="#990058"/><path d="M1405.5 0h8.6" stroke="#905"/><path d="M1413.5 0h8.6" stroke="#990052"/><path d="M1421.5 0h8.6" stroke="#99004f"/><path d="M1429.5 0h8.6" stroke="#99004c"/><path d="M1437.5 0h8.6" stroke="#99004a"/><path d="M1445.5 0h8.6" stroke="#990047"/><path d="M1453.5 0h8.6" stroke="#990045"/><path d="M1461.5 0h8.6" stroke="#990043"/><path d="M1469.5 0h8.6" stroke="#990041"/><path d="M1477.5 0h8.6" stroke="#99003f"/><path d="M1485.5 0h8.6" stroke="#99003d"/><path d="M1493.5 0h8.6" stroke="#99003b"/><path d="M1501.5 0h8.6" stroke="#99003a"/><path d="M1509.5 0h8.6" stroke="#990038"/><path d="M1517.5 0h8.6" stroke="#990036"/><path d="M1525.5 0h8.6" stroke="#990035"/></g><g transform="translate(0,288.2)"><path d="M1053.5 0h8.6" stroke="#004399"/><path d="M1061.5 0h8.6" stroke="#004199"/><path d="M1069.5 0h8.6" stroke="#003f99"/><path d="M1077.5 0h8.6" stroke="#003d99"/><path d="M1085.5 0h8.6" stroke="#003c99"/><path d="M1093.5 0h8.6" stroke="#003a99"/><path d="M1101.5 0h8.6" stroke="#003899"/><path d="M1109.5 0h8.6" stroke="#003699"/><path d="M1117.5 0h8.6" stroke="#003499"/><path d="M1125.5 0h8.6" stroke="#003299"/><path d="M1133.5 0h8.6" stroke="#003099"/><path d="M1141.5 0h8.6" stroke="#002f99"/><path d="M1149.5 0h8.6" stroke="#002d99"/><path d="M1157.5 0h8.6" stroke="#002b99"/><path d="M1165.5 0h8.6" stroke="#052999"/><path d="M1309.5 0h8.6" stroke="#950399"/><path d="M1317.5 0h8.6" stroke="#990094"/><path d="M1325.5 0h8.6" stroke="#99008c"/><path d="M1333.5 0h8.6" stroke="#990085"/><path d="M1341.5 0h8.6" stroke="#99007f"/><path d="M1349.5 0h8.6" stroke="#990079"/><path d="M1357.5 0h8.6" stroke="#990073"/><path d="M1365.5 0h8.6" stroke="#99006e"/><path d="M1373.5 0h8.6" stroke="#99006a"/><path d="M1381.5 0h8.6" stroke="#990065"/><path d="M1389.5 0h8.6" stroke="#990061"/><path d="M1397.5 0h8.6" stroke="#99005e"/><path d="M1405.5 0h8.6" stroke="#99005a"/><path d="M1413.5 0h8.6" stroke="#990057"/><path d="M1421.5 0h8.6" stroke="#990054"/><path d="M1429.5 0h8.6" stroke="#990051"/><path d="M1437.5 0h8.6" stroke="#99004e"/><path d="M1445.5 0h8.6" stroke="#99004c"/><path d="M1453.5 0h8.6" stroke="#990049"/><path d="M1461.5 0h8.6" stroke="#990047"/><path d="M1469.5 0h8.6" stroke="#990045"/><path d="M1477.5 0h8.6" stroke="#990043"/><path d="M1485.5 0h8.6" stroke="#990041"/><path d="M1493.5 0h8.6" stroke="#99003f"/><path d="M1501.5 0h8.6" stroke="#99003d"/><path d="M1509.5 0h8.6" stroke="#99003b"/><path d="M1517.5 0h8.6" stroke="#99003a"/></g><g transform="translate(0,296.2)"><path d="M1061.5 0h8.6" stroke="#003c99"/><path d="M1069.5 0h8.6" stroke="#003b99"/><path d="M1077.5 0h8.6" stroke="#003999"/><path d="M1085.5 0h8.6" stroke="#003799"/><path d="M1093.5 0h8.6" stroke="#003599"/><path d="M1101.5 0h8.6" stroke="#003499"/><path d="M1109.5 0h8.6" stroke="#003299"/><path d="M1117.5 0h8.6" stroke="#003099"/><path d="M1125.5 0h8.6" stroke="#002e99"/><path d="M1133.5 0h8.6" stroke="#002c99"/><path d="M1141.5 0h8.6" stroke="#002b99"/><path d="M1149.5 0h8.6" stroke="#002999"/><path d="M1157.5 0h8.6" stroke="#002799"/><path d="M1165.5 0h8.6" stroke="#042599"/><path d="M1301.5 0h8.6" stroke="#850399"/><path d="M1309.5 0h8.6" stroke="#8d0099"/><path d="M1317.5 0h8.6" stroke="#960099"/><path d="M1325.5 0h8.6" stroke="#990094"/><path d="M1333.5 0h8.6" stroke="#99008d"/><path d="M1341.5 0h8.6" stroke="#990086"/><path d="M1349.5 0h8.6" stroke="#990080"/><path d="M1357.5 0h8.6" stroke="#99007a"/><path d="M1365.5 0h8.6" stroke="#990075"/><path d="M1373.5 0h8.6" stroke="#990070"/><path d="M1381.5 0h8.6" stroke="#99006b"/><path d="M1389.5 0h8.6" stroke="#990067"/><path d="M1397.5 0h8.6" stroke="#990063"/><path d="M1405.5 0h8.6" stroke="#99005f"/><path d="M1413.5 0h8.6" stroke="#99005c"/><path d="M1421.5 0h8.6" stroke="#990059"/><path d="M1429.5 0h8.6" stroke="#990056"/><path d="M1437.5 0h8.6" stroke="#990053"/><path d="M1445.5 0h8.6" stroke="#990050"/><path d="M1453.5 0h8.6" stroke="#99004e"/><path d="M1461.5 0h8.6" stroke="#99004b"/><path d="M1469.5 0h8.6" stroke="#990049"/><path d="M1477.5 0h8.6" stroke="#990047"/><path d="M1485.5 0h8.6" stroke="#990045"/><path d="M1493.5 0h8.6" stroke="#990043"/><path d="M1501.5 0h8.6" stroke="#990041"/><path d="M1509.5 0h8.6" stroke="#99003f"/></g><g transform="translate(0,304.2)"><path d="M1061.5 0h8.6" stroke="#003899"/><path d="M1069.5 0h8.6" stroke="#003799"/><path d="M1077.5 0h8.6" stroke="#003599"/><path d="M1085.5 0h8.6" stroke="#039"/><path d="M1093.5 0h8.6" stroke="#003199"/><path d="M1101.5 0h8.6" stroke="#003099"/><path d="M1109.5 0h8.6" stroke="#002e99"/><path d="M1117.5 0h8.6" stroke="#002c99"/><path d="M1125.5 0h8.6" stroke="#002b99"/><path d="M1133.5 0h8.6" stroke="#002999"/><path d="M1141.5 0h8.6" stroke="#002799"/><path d="M1149.5 0h8.6" stroke="#002599"/><path d="M1157.5 0h8.6" stroke="#002399"/><path d="M1165.5 0h8.6" stroke="#032299"/><path d="M1293.5 0h8.6" stroke="#760299"/><path d="M1301.5 0h8.6" stroke="#7e0099"/><path d="M1309.5 0h8.6" stroke="#860099"/><path d="M1317.5 0h8.6" stroke="#8e0099"/><path d="M1325.5 0h8.6" stroke="#960099"/><path d="M1333.5 0h8.6" stroke="#990094"/><path d="M1341.5 0h8.6" stroke="#99008d"/><path d="M1349.5 0h8.6" stroke="#990087"/><path d="M1357.5 0h8.6" stroke="#990081"/><path d="M1365.5 0h8.6" stroke="#99007b"/><path d="M1373.5 0h8.6" stroke="#990076"/><path d="M1381.5 0h8.6" stroke="#990071"/><path d="M1389.5 0h8.6" stroke="#99006d"/><path d="M1397.5 0h8.6" stroke="#990068"/><path d="M1405.5 0h8.6" stroke="#990065"/><path d="M1413.5 0h8.6" stroke="#990061"/><path d="M1421.5 0h8.6" stroke="#99005e"/><path d="M1429.5 0h8.6" stroke="#99005a"/><path d="M1437.5 0h8.6" stroke="#990057"/><path d="M1445.5 0h8.6" stroke="#990054"/><path d="M1453.5 0h8.6" stroke="#990052"/><path d="M1461.5 0h8.6" stroke="#99004f"/><path d="M1469.5 0h8.6" stroke="#99004d"/><path d="M1477.5 0h8.6" stroke="#99004b"/><path d="M1485.5 0h8.6" stroke="#990048"/><path d="M1493.5 0h8.6" stroke="#990046"/><path d="M1501.5 0h8.6" stroke="#904"/></g><g transform="translate(0,312.2)"><path d="M1069.5 0h8.6" stroke="#039"/><path d="M1077.5 0h8.6" stroke="#003199"/><path d="M1085.5 0h8.6" stroke="#002f99"/><path d="M1093.5 0h8.6" stroke="#002e99"/><path d="M1101.5 0h8.6" stroke="#002c99"/><path d="M1109.5 0h8.6" stroke="#002a99"/><path d="M1117.5 0h8.6" stroke="#002999"/><path d="M1125.5 0h8.6" stroke="#002799"/><path d="M1133.5 0h8.6" stroke="#002599"/><path d="M1141.5 0h8.6" stroke="#002499"/><path d="M1149.5 0h8.6" stroke="#029"/><path d="M1157.5 0h8.6" stroke="#002099"/><path d="M1165.5 0h8.6" stroke="#021e99"/><path d="M1285.5 0h8.6" stroke="#690299"/><path d="M1293.5 0h8.6" stroke="#700099"/><path d="M1301.5 0h8.6" stroke="#780099"/><path d="M1309.5 0h8.6" stroke="#7f0099"/><path d="M1317.5 0h8.6" stroke="#870099"/><path d="M1325.5 0h8.6" stroke="#8e0099"/><path d="M1333.5 0h8.6" stroke="#960099"/><path d="M1341.5 0h8.6" stroke="#990095"/><path d="M1349.5 0h8.6" stroke="#99008e"/><path d="M1357.5 0h8.6" stroke="#990087"/><path d="M1365.5 0h8.6" stroke="#990081"/><path d="M1373.5 0h8.6" stroke="#99007c"/><path d="M1381.5 0h8.6" stroke="#907"/><path d="M1389.5 0h8.6" stroke="#990072"/><path d="M1397.5 0h8.6" stroke="#99006e"/><path d="M1405.5 0h8.6" stroke="#99006a"/><path d="M1413.5 0h8.6" stroke="#906"/><path d="M1421.5 0h8.6" stroke="#990062"/><path d="M1429.5 0h8.6" stroke="#99005f"/><path d="M1437.5 0h8.6" stroke="#99005c"/><path d="M1445.5 0h8.6" stroke="#990059"/><path d="M1453.5 0h8.6" stroke="#990056"/><path d="M1461.5 0h8.6" stroke="#990053"/><path d="M1469.5 0h8.6" stroke="#990051"/><path d="M1477.5 0h8.6" stroke="#99004e"/><path d="M1485.5 0h8.6" stroke="#99004c"/><path d="M1493.5 0h8.6" stroke="#99004a"/></g><g transform="translate(0,320.2)"><path d="M1069.5 0h8.6" stroke="#002f99"/><path d="M1077.5 0h8.6" stroke="#002e99"/><path d="M1085.5 0h8.6" stroke="#002c99"/><path d="M1093.5 0h8.6" stroke="#002a99"/><path d="M1101.5 0h8.6" stroke="#002999"/><path d="M1109.5 0h8.6" stroke="#002799"/><path d="M1117.5 0h8.6" stroke="#002699"/><path d="M1125.5 0h8.6" stroke="#002499"/><path d="M1133.5 0h8.6" stroke="#029"/><path d="M1141.5 0h8.6" stroke="#002199"/><path d="M1149.5 0h8.6" stroke="#001f99"/><path d="M1157.5 0h8.6" stroke="#001d99"/><path d="M1165.5 0h8.6" stroke="#011b99"/><path d="M1285.5 0h8.6" stroke="#640099"/><path d="M1293.5 0h8.6" stroke="#6b0099"/><path d="M1301.5 0h8.6" stroke="#720099"/><path d="M1309.5 0h8.6" stroke="#790099"/><path d="M1317.5 0h8.6" stroke="#800099"/><path d="M1325.5 0h8.6" stroke="#870099"/><path d="M1333.5 0h8.6" stroke="#8f0099"/><path d="M1341.5 0h8.6" stroke="#960099"/><path d="M1349.5 0h8.6" stroke="#990095"/><path d="M1357.5 0h8.6" stroke="#99008e"/><path d="M1365.5 0h8.6" stroke="#908"/><path d="M1373.5 0h8.6" stroke="#990082"/><path d="M1381.5 0h8.6" stroke="#99007d"/><path d="M1389.5 0h8.6" stroke="#990078"/><path d="M1397.5 0h8.6" stroke="#990073"/><path d="M1405.5 0h8.6" stroke="#99006f"/><path d="M1413.5 0h8.6" stroke="#99006b"/><path d="M1421.5 0h8.6" stroke="#990067"/><path d="M1429.5 0h8.6" stroke="#990064"/><path d="M1437.5 0h8.6" stroke="#990060"/><path d="M1445.5 0h8.6" stroke="#99005d"/><path d="M1453.5 0h8.6" stroke="#99005a"/><path d="M1461.5 0h8.6" stroke="#990058"/><path d="M1469.5 0h8.6" stroke="#905"/><path d="M1477.5 0h8.6" stroke="#990052"/><path d="M1485.5 0h8.6" stroke="#990050"/></g><g transform="translate(0,328.2)"><path d="M1077.5 0h8.6" stroke="#002a99"/><path d="M1085.5 0h8.6" stroke="#002999"/><path d="M1093.5 0h8.6" stroke="#002799"/><path d="M1101.5 0h8.6" stroke="#002699"/><path d="M1109.5 0h8.6" stroke="#002499"/><path d="M1117.5 0h8.6" stroke="#002399"/><path d="M1125.5 0h8.6" stroke="#002199"/><path d="M1133.5 0h8.6" stroke="#001f99"/><path d="M1141.5 0h8.6" stroke="#001e99"/><path d="M1149.5 0h8.6" stroke="#001c99"/><path d="M1157.5 0h8.6" stroke="#001a99"/><path d="M1165.5 0h8.6" stroke="#001999"/><path d="M1277.5 0h8.6" stroke="#580099"/><path d="M1285.5 0h8.6" stroke="#5f0099"/><path d="M1293.5 0h8.6" stroke="#609"/><path d="M1301.5 0h8.6" stroke="#6c0099"/><path d="M1309.5 0h8.6" stroke="#730099"/><path d="M1317.5 0h8.6" stroke="#7a0099"/><path d="M1325.5 0h8.6" stroke="#810099"/><path d="M1333.5 0h8.6" stroke="#809"/><path d="M1341.5 0h8.6" stroke="#8f0099"/><path d="M1349.5 0h8.6" stroke="#960099"/><path d="M1357.5 0h8.6" stroke="#990095"/><path d="M1365.5 0h8.6" stroke="#99008e"/><path d="M1373.5 0h8.6" stroke="#908"/><path d="M1381.5 0h8.6" stroke="#990083"/><path d="M1389.5 0h8.6" stroke="#99007e"/><path d="M1397.5 0h8.6" stroke="#990079"/><path d="M1405.5 0h8.6" stroke="#990074"/><path d="M1413.5 0h8.6" stroke="#990070"/><path d="M1421.5 0h8.6" stroke="#99006c"/><path d="M1429.5 0h8.6" stroke="#990069"/><path d="M1437.5 0h8.6" stroke="#990065"/><path d="M1445.5 0h8.6" stroke="#990062"/><path d="M1453.5 0h8.6" stroke="#99005f"/><path d="M1461.5 0h8.6" stroke="#99005c"/><path d="M1469.5 0h8.6" stroke="#990059"/><path d="M1477.5 0h8.6" stroke="#990056"/></g><g transform="translate(0,336.2)"><path d="M1085.5 0h8.6" stroke="#002699"/><path d="M1093.5 0h8.6" stroke="#002499"/><path d="M1101.5 0h8.6" stroke="#002399"/><path d="M1109.5 0h8.6" stroke="#002199"/><path d="M1117.5 0h8.6" stroke="#002099"/><path d="M1125.5 0h8.6" stroke="#001e99"/><path d="M1133.5 0h8.6" stroke="#001d99"/><path d="M1141.5 0h8.6" stroke="#001b99"/><path d="M1149.5 0h8.6" stroke="#001999"/><path d="M1157.5 0h8.6" stroke="#001899"/><path d="M1165.5 0h8.6" stroke="#001699"/><path d="M1173.5 0h8.6" stroke="#041599"/><path d="M1269.5 0h8.6" stroke="#4e0099"/><path d="M1277.5 0h8.6" stroke="#540099"/><path d="M1285.5 0h8.6" stroke="#5a0099"/><path d="M1293.5 0h8.6" stroke="#610099"/><path d="M1301.5 0h8.6" stroke="#670099"/><path d="M1309.5 0h8.6" stroke="#6e0099"/><path d="M1317.5 0h8.6" stroke="#740099"/><path d="M1325.5 0h8.6" stroke="#7b0099"/><path d="M1333.5 0h8.6" stroke="#820099"/><path d="M1341.5 0h8.6" stroke="#890099"/><path d="M1349.5 0h8.6" stroke="#8f0099"/><path d="M1357.5 0h8.6" stroke="#960099"/><path d="M1365.5 0h8.6" stroke="#990095"/><path d="M1373.5 0h8.6" stroke="#99008f"/><path d="M1381.5 0h8.6" stroke="#990089"/><path d="M1389.5 0h8.6" stroke="#990084"/><path d="M1397.5 0h8.6" stroke="#99007f"/><path d="M1405.5 0h8.6" stroke="#99007a"/><path d="M1413.5 0h8.6" stroke="#990075"/><path d="M1421.5 0h8.6" stroke="#990071"/><path d="M1429.5 0h8.6" stroke="#99006d"/><path d="M1437.5 0h8.6" stroke="#99006a"/><path d="M1445.5 0h8.6" stroke="#906"/><path d="M1453.5 0h8.6" stroke="#990063"/><path d="M1461.5 0h8.6" stroke="#990060"/><path d="M1469.5 0h8.6" stroke="#99005d"/></g><g transform="translate(0,344.2)"><path d="M1085.5 0h8.6" stroke="#002399"/><path d="M1093.5 0h8.6" stroke="#029"/><path d="M1101.5 0h8.6" stroke="#002099"/><path d="M1109.5 0h8.6" stroke="#001f99"/><path d="M1117.5 0h8.6" stroke="#001d99"/><path d="M1125.5 0h8.6" stroke="#001c99"/><path d="M1133.5 0h8.6" stroke="#001a99"/><path d="M1141.5 0h8.6" stroke="#001999"/><path d="M1149.5 0h8.6" stroke="#001799"/><path d="M1157.5 0h8.6" stroke="#001599"/><path d="M1165.5 0h8.6" stroke="#001499"/><path d="M1173.5 0h8.6" stroke="#031299"/><path d="M1261.5 0h8.6" stroke="#409"/><path d="M1269.5 0h8.6" stroke="#4a0099"/><path d="M1277.5 0h8.6" stroke="#500099"/><path d="M1285.5 0h8.6" stroke="#560099"/><path d="M1293.5 0h8.6" stroke="#5c0099"/><path d="M1301.5 0h8.6" stroke="#630099"/><path d="M1309.5 0h8.6" stroke="#690099"/><path d="M1317.5 0h8.6" stroke="#6f0099"/><path d="M1325.5 0h8.6" stroke="#760099"/><path d="M1333.5 0h8.6" stroke="#7c0099"/><path d="M1341.5 0h8.6" stroke="#830099"/><path d="M1349.5 0h8.6" stroke="#890099"/><path d="M1357.5 0h8.6" stroke="#900099"/><path d="M1365.5 0h8.6" stroke="#960099"/><path d="M1373.5 0h8.6" stroke="#990095"/><path d="M1381.5 0h8.6" stroke="#99008f"/><path d="M1389.5 0h8.6" stroke="#990089"/><path d="M1397.5 0h8.6" stroke="#990084"/><path d="M1405.5 0h8.6" stroke="#99007f"/><path d="M1413.5 0h8.6" stroke="#99007b"/><path d="M1421.5 0h8.6" stroke="#990076"/><path d="M1429.5 0h8.6" stroke="#990072"/><path d="M1437.5 0h8.6" stroke="#99006f"/><path d="M1445.5 0h8.6" stroke="#99006b"/><path d="M1453.5 0h8.6" stroke="#990068"/><path d="M1461.5 0h8.6" stroke="#990064"/></g><g transform="translate(0,352.2)"><path d="M1093.5 0h8.6" stroke="#001f99"/><path d="M1101.5 0h8.6" stroke="#001e99"/><path d="M1109.5 0h8.6" stroke="#001c99"/><path d="M1117.5 0h8.6" stroke="#001b99"/><path d="M1125.5 0h8.6" stroke="#001999"/><path d="M1133.5 0h8.6" stroke="#001899"/><path d="M1141.5 0h8.6" stroke="#001699"/><path d="M1149.5 0h8.6" stroke="#001599"/><path d="M1157.5 0h8.6" stroke="#001399"/><path d="M1165.5 0h8.6" stroke="#001299"/><path d="M1173.5 0h8.6" stroke="#021099"/><path d="M1253.5 0h8.6" stroke="#3b0199"/><path d="M1261.5 0h8.6" stroke="#410099"/><path d="M1269.5 0h8.6" stroke="#460099"/><path d="M1277.5 0h8.6" stroke="#4c0099"/><path d="M1285.5 0h8.6" stroke="#520099"/><path d="M1293.5 0h8.6" stroke="#580099"/><path d="M1301.5 0h8.6" stroke="#5e0099"/><path d="M1309.5 0h8.6" stroke="#640099"/><path d="M1317.5 0h8.6" stroke="#6a0099"/><path d="M1325.5 0h8.6" stroke="#710099"/><path d="M1333.5 0h8.6" stroke="#709"/><path d="M1341.5 0h8.6" stroke="#7d0099"/><path d="M1349.5 0h8.6" stroke="#830099"/><path d="M1357.5 0h8.6" stroke="#8a0099"/><path d="M1365.5 0h8.6" stroke="#900099"/><path d="M1373.5 0h8.6" stroke="#960099"/><path d="M1381.5 0h8.6" stroke="#990095"/><path d="M1389.5 0h8.6" stroke="#99008f"/><path d="M1397.5 0h8.6" stroke="#99008a"/><path d="M1405.5 0h8.6" stroke="#990085"/><path d="M1413.5 0h8.6" stroke="#990080"/><path d="M1421.5 0h8.6" stroke="#99007b"/><path d="M1429.5 0h8.6" stroke="#907"/><path d="M1437.5 0h8.6" stroke="#990073"/><path d="M1445.5 0h8.6" stroke="#990070"/><path d="M1453.5 0h8.6" stroke="#99006c"/></g><g transform="translate(0,360.2)"><path d="M1093.5 0h8.6" stroke="#001d99"/><path d="M1101.5 0h8.6" stroke="#001b99"/><path d="M1109.5 0h8.6" stroke="#001a99"/><path d="M1117.5 0h8.6" stroke="#001899"/><path d="M1125.5 0h8.6" stroke="#001799"/><path d="M1133.5 0h8.6" stroke="#001699"/><path d="M1141.5 0h8.6" stroke="#001499"/><path d="M1149.5 0h8.6" stroke="#001399"/><path d="M1157.5 0h8.6" stroke="#019"/><path d="M1165.5 0h8.6" stroke="#001099"/><path d="M1173.5 0h8.6" stroke="#010e99"/><path d="M1245.5 0h8.6" stroke="#320199"/><path d="M1253.5 0h8.6" stroke="#380099"/><path d="M1261.5 0h8.6" stroke="#3e0099"/><path d="M1269.5 0h8.6" stroke="#430099"/><path d="M1277.5 0h8.6" stroke="#490099"/><path d="M1285.5 0h8.6" stroke="#4f0099"/><path d="M1293.5 0h8.6" stroke="#540099"/><path d="M1301.5 0h8.6" stroke="#5a0099"/><path d="M1309.5 0h8.6" stroke="#600099"/><path d="M1317.5 0h8.6" stroke="#609"/><path d="M1325.5 0h8.6" stroke="#6c0099"/><path d="M1333.5 0h8.6" stroke="#720099"/><path d="M1341.5 0h8.6" stroke="#780099"/><path d="M1349.5 0h8.6" stroke="#7e0099"/><path d="M1357.5 0h8.6" stroke="#840099"/><path d="M1365.5 0h8.6" stroke="#8a0099"/><path d="M1373.5 0h8.6" stroke="#900099"/><path d="M1381.5 0h8.6" stroke="#960099"/><path d="M1389.5 0h8.6" stroke="#990095"/><path d="M1397.5 0h8.6" stroke="#990090"/><path d="M1405.5 0h8.6" stroke="#99008a"/><path d="M1413.5 0h8.6" stroke="#990085"/><path d="M1421.5 0h8.6" stroke="#990081"/><path d="M1429.5 0h8.6" stroke="#99007c"/><path d="M1437.5 0h8.6" stroke="#990078"/><path d="M1445.5 0h8.6" stroke="#990074"/></g><g transform="translate(0,368.2)"><path d="M1101.5 0h8.6" stroke="#001999"/><path d="M1109.5 0h8.6" stroke="#001899"/><path d="M1117.5 0h8.6" stroke="#001699"/><path d="M1125.5 0h8.6" stroke="#001599"/><path d="M1133.5 0h8.6" stroke="#001399"/><path d="M1141.5 0h8.6" stroke="#001299"/><path d="M1149.5 0h8.6" stroke="#019"/><path d="M1157.5 0h8.6" stroke="#000f99"/><path d="M1165.5 0h8.6" stroke="#000e99"/><path d="M1173.5 0h8.6" stroke="#010c99"/><path d="M1237.5 0h8.6" stroke="#2a0199"/><path d="M1245.5 0h8.6" stroke="#300099"/><path d="M1253.5 0h8.6" stroke="#350099"/><path d="M1261.5 0h8.6" stroke="#3b0099"/><path d="M1269.5 0h8.6" stroke="#400099"/><path d="M1277.5 0h8.6" stroke="#460099"/><path d="M1285.5 0h8.6" stroke="#4b0099"/><path d="M1293.5 0h8.6" stroke="#510099"/><path d="M1301.5 0h8.6" stroke="#560099"/><path d="M1309.5 0h8.6" stroke="#5c0099"/><path d="M1317.5 0h8.6" stroke="#620099"/><path d="M1325.5 0h8.6" stroke="#670099"/><path d="M1333.5 0h8.6" stroke="#6d0099"/><path d="M1341.5 0h8.6" stroke="#730099"/><path d="M1349.5 0h8.6" stroke="#790099"/><path d="M1357.5 0h8.6" stroke="#7f0099"/><path d="M1365.5 0h8.6" stroke="#850099"/><path d="M1373.5 0h8.6" stroke="#8a0099"/><path d="M1381.5 0h8.6" stroke="#900099"/><path d="M1389.5 0h8.6" stroke="#960099"/><path d="M1397.5 0h8.6" stroke="#990096"/><path d="M1405.5 0h8.6" stroke="#990090"/><path d="M1413.5 0h8.6" stroke="#99008b"/><path d="M1421.5 0h8.6" stroke="#990086"/><path d="M1429.5 0h8.6" stroke="#990081"/><path d="M1437.5 0h8.6" stroke="#99007d"/></g><g transform="translate(0,376.2)"><path d="M1109.5 0h8.6" stroke="#001699"/><path d="M1117.5 0h8.6" stroke="#001499"/><path d="M1125.5 0h8.6" stroke="#001399"/><path d="M1133.5 0h8.6" stroke="#019"/><path d="M1141.5 0h8.6" stroke="#001099"/><path d="M1149.5 0h8.6" stroke="#000f99"/><path d="M1157.5 0h8.6" stroke="#000d99"/><path d="M1165.5 0h8.6" stroke="#000c99"/><path d="M1173.5 0h8.6" stroke="#000b99"/><path d="M1229.5 0h8.6" stroke="#230199"/><path d="M1237.5 0h8.6" stroke="#280099"/><path d="M1245.5 0h8.6" stroke="#2e0099"/><path d="M1253.5 0h8.6" stroke="#309"/><path d="M1261.5 0h8.6" stroke="#380099"/><path d="M1269.5 0h8.6" stroke="#3d0099"/><path d="M1277.5 0h8.6" stroke="#430099"/><path d="M1285.5 0h8.6" stroke="#480099"/><path d="M1293.5 0h8.6" stroke="#4d0099"/><path d="M1301.5 0h8.6" stroke="#530099"/><path d="M1309.5 0h8.6" stroke="#580099"/><path d="M1317.5 0h8.6" stroke="#5e0099"/><path d="M1325.5 0h8.6" stroke="#630099"/><path d="M1333.5 0h8.6" stroke="#690099"/><path d="M1341.5 0h8.6" stroke="#6e0099"/><path d="M1349.5 0h8.6" stroke="#740099"/><path d="M1357.5 0h8.6" stroke="#7a0099"/><path d="M1365.5 0h8.6" stroke="#7f0099"/><path d="M1373.5 0h8.6" stroke="#850099"/><path d="M1381.5 0h8.6" stroke="#8b0099"/><path d="M1389.5 0h8.6" stroke="#910099"/><path d="M1397.5 0h8.6" stroke="#960099"/><path d="M1405.5 0h8.6" stroke="#990096"/><path d="M1413.5 0h8.6" stroke="#990090"/><path d="M1421.5 0h8.6" stroke="#99008b"/><path d="M1429.5 0h8.6" stroke="#990086"/></g><g transform="translate(0,384.2)"><path d="M1109.5 0h8.6" stroke="#001499"/><path d="M1117.5 0h8.6" stroke="#001299"/><path d="M1125.5 0h8.6" stroke="#019"/><path d="M1133.5 0h8.6" stroke="#001099"/><path d="M1141.5 0h8.6" stroke="#000e99"/><path d="M1149.5 0h8.6" stroke="#000d99"/><path d="M1157.5 0h8.6" stroke="#000c99"/><path d="M1165.5 0h8.6" stroke="#000a99"/><path d="M1173.5 0h8.6" stroke="#000999"/><path d="M1181.5 0h8.6" stroke="#040899"/><path d="M1221.5 0h8.6" stroke="#1c0199"/><path d="M1229.5 0h8.6" stroke="#210099"/><path d="M1237.5 0h8.6" stroke="#260099"/><path d="M1245.5 0h8.6" stroke="#2b0099"/><path d="M1253.5 0h8.6" stroke="#300099"/><path d="M1261.5 0h8.6" stroke="#360099"/><path d="M1269.5 0h8.6" stroke="#3b0099"/><path d="M1277.5 0h8.6" stroke="#400099"/><path d="M1285.5 0h8.6" stroke="#450099"/><path d="M1293.5 0h8.6" stroke="#4a0099"/><path d="M1301.5 0h8.6" stroke="#4f0099"/><path d="M1309.5 0h8.6" stroke="#509"/><path d="M1317.5 0h8.6" stroke="#5a0099"/><path d="M1325.5 0h8.6" stroke="#5f0099"/><path d="M1333.5 0h8.6" stroke="#650099"/><path d="M1341.5 0h8.6" stroke="#6a0099"/><path d="M1349.5 0h8.6" stroke="#700099"/><path d="M1357.5 0h8.6" stroke="#750099"/><path d="M1365.5 0h8.6" stroke="#7b0099"/><path d="M1373.5 0h8.6" stroke="#800099"/><path d="M1381.5 0h8.6" stroke="#860099"/><path d="M1389.5 0h8.6" stroke="#8b0099"/><path d="M1397.5 0h8.6" stroke="#910099"/><path d="M1405.5 0h8.6" stroke="#970099"/><path d="M1413.5 0h8.6" stroke="#990096"/><path d="M1421.5 0h8.6" stroke="#990091"/></g><g transform="translate(0,392.2)"><path d="M1117.5 0h8.6" stroke="#001099"/><path d="M1125.5 0h8.6" stroke="#000f99"/><path d="M1133.5 0h8.6" stroke="#000e99"/><path d="M1141.5 0h8.6" stroke="#000d99"/><path d="M1149.5 0h8.6" stroke="#000b99"/><path d="M1157.5 0h8.6" stroke="#000a99"/><path d="M1165.5 0h8.6" stroke="#000999"/><path d="M1173.5 0h8.6" stroke="#000799"/><path d="M1181.5 0h8.6" stroke="#030699"/><path d="M1213.5 0h8.6" stroke="#160199"/><path d="M1221.5 0h8.6" stroke="#1b0099"/><path d="M1229.5 0h8.6" stroke="#200099"/><path d="M1237.5 0h8.6" stroke="#240099"/><path d="M1245.5 0h8.6" stroke="#290099"/><path d="M1253.5 0h8.6" stroke="#2e0099"/><path d="M1261.5 0h8.6" stroke="#309"/><path d="M1269.5 0h8.6" stroke="#380099"/><path d="M1277.5 0h8.6" stroke="#3d0099"/><path d="M1285.5 0h8.6" stroke="#420099"/><path d="M1293.5 0h8.6" stroke="#470099"/><path d="M1301.5 0h8.6" stroke="#4c0099"/><path d="M1309.5 0h8.6" stroke="#510099"/><path d="M1317.5 0h8.6" stroke="#570099"/><path d="M1325.5 0h8.6" stroke="#5c0099"/><path d="M1333.5 0h8.6" stroke="#610099"/><path d="M1341.5 0h8.6" stroke="#609"/><path d="M1349.5 0h8.6" stroke="#6b0099"/><path d="M1357.5 0h8.6" stroke="#710099"/><path d="M1365.5 0h8.6" stroke="#760099"/><path d="M1373.5 0h8.6" stroke="#7b0099"/><path d="M1381.5 0h8.6" stroke="#810099"/><path d="M1389.5 0h8.6" stroke="#860099"/><path d="M1397.5 0h8.6" stroke="#8c0099"/><path d="M1405.5 0h8.6" stroke="#910099"/><path d="M1413.5 0h8.6" stroke="#970099"/></g><g transform="translate(0,400.2)"><path d="M1125.5 0h8.6" stroke="#000e99"/><path d="M1133.5 0h8.6" stroke="#000c99"/><path d="M1141.5 0h8.6" stroke="#000b99"/><path d="M1149.5 0h8.6" stroke="#000a99"/><path d="M1157.5 0h8.6" stroke="#000899"/><path d="M1165.5 0h8.6" stroke="#000799"/><path d="M1173.5 0h8.6" stroke="#000699"/><path d="M1181.5 0h8.6" stroke="#020599"/><path d="M1205.5 0h8.6" stroke="#100199"/><path d="M1213.5 0h8.6" stroke="#150099"/><path d="M1221.5 0h8.6" stroke="#190099"/><path d="M1229.5 0h8.6" stroke="#1e0099"/><path d="M1237.5 0h8.6" stroke="#230099"/><path d="M1245.5 0h8.6" stroke="#270099"/><path d="M1253.5 0h8.6" stroke="#2c0099"/><path d="M1261.5 0h8.6" stroke="#310099"/><path d="M1269.5 0h8.6" stroke="#360099"/><path d="M1277.5 0h8.6" stroke="#3b0099"/><path d="M1285.5 0h8.6" stroke="#400099"/><path d="M1293.5 0h8.6" stroke="#409"/><path d="M1301.5 0h8.6" stroke="#490099"/><path d="M1309.5 0h8.6" stroke="#4e0099"/><path d="M1317.5 0h8.6" stroke="#530099"/><path d="M1325.5 0h8.6" stroke="#580099"/><path d="M1333.5 0h8.6" stroke="#5d0099"/><path d="M1341.5 0h8.6" stroke="#620099"/><path d="M1349.5 0h8.6" stroke="#680099"/><path d="M1357.5 0h8.6" stroke="#6d0099"/><path d="M1365.5 0h8.6" stroke="#720099"/><path d="M1373.5 0h8.6" stroke="#709"/><path d="M1381.5 0h8.6" stroke="#7c0099"/><path d="M1389.5 0h8.6" stroke="#810099"/><path d="M1397.5 0h8.6" stroke="#870099"/><path d="M1405.5 0h8.6" stroke="#8c0099"/></g><g transform="translate(0,408.2)"><path d="M1125.5 0h8.6" stroke="#000c99"/><path d="M1133.5 0h8.6" stroke="#000b99"/><path d="M1141.5 0h8.6" stroke="#000999"/><path d="M1149.5 0h8.6" stroke="#000899"/><path d="M1157.5 0h8.6" stroke="#000799"/><path d="M1165.5 0h8.6" stroke="#000699"/><path d="M1173.5 0h8.6" stroke="#000499"/><path d="M1181.5 0h8.6" stroke="#010399"/><path d="M1197.5 0h8.6" stroke="#0a0199"/><path d="M1205.5 0h8.6" stroke="#0f0099"/><path d="M1213.5 0h8.6" stroke="#130099"/><path d="M1221.5 0h8.6" stroke="#180099"/><path d="M1229.5 0h8.6" stroke="#1c0099"/><path d="M1237.5 0h8.6" stroke="#210099"/><path d="M1245.5 0h8.6" stroke="#260099"/><path d="M1253.5 0h8.6" stroke="#2a0099"/><path d="M1261.5 0h8.6" stroke="#2f0099"/><path d="M1269.5 0h8.6" stroke="#340099"/><path d="M1277.5 0h8.6" stroke="#380099"/><path d="M1285.5 0h8.6" stroke="#3d0099"/><path d="M1293.5 0h8.6" stroke="#420099"/><path d="M1301.5 0h8.6" stroke="#470099"/><path d="M1309.5 0h8.6" stroke="#4b0099"/><path d="M1317.5 0h8.6" stroke="#500099"/><path d="M1325.5 0h8.6" stroke="#509"/><path d="M1333.5 0h8.6" stroke="#5a0099"/><path d="M1341.5 0h8.6" stroke="#5f0099"/><path d="M1349.5 0h8.6" stroke="#640099"/><path d="M1357.5 0h8.6" stroke="#690099"/><path d="M1365.5 0h8.6" stroke="#6e0099"/><path d="M1373.5 0h8.6" stroke="#730099"/><path d="M1381.5 0h8.6" stroke="#780099"/><path d="M1389.5 0h8.6" stroke="#7d0099"/><path d="M1397.5 0h8.6" stroke="#820099"/></g><g transform="translate(0,416.2)"><path d="M1133.5 0h8.6" stroke="#000999"/><path d="M1141.5 0h8.6" stroke="#000899"/><path d="M1149.5 0h8.6" stroke="#000799"/><path d="M1157.5 0h8.6" stroke="#000699"/><path d="M1165.5 0h8.6" stroke="#000499"/><path d="M1173.5 0h8.6" stroke="#000399"/><path d="M1181.5 0h8.6" stroke="#010299"/><path d="M1189.5 0h8.6" stroke="#050199"/><path d="M1197.5 0h8.6" stroke="#090099"/><path d="M1205.5 0h8.6" stroke="#0e0099"/><path d="M1213.5 0h8.6" stroke="#120099"/><path d="M1221.5 0h8.6" stroke="#170099"/><path d="M1229.5 0h8.6" stroke="#1b0099"/><path d="M1237.5 0h8.6" stroke="#1f0099"/><path d="M1245.5 0h8.6" stroke="#240099"/><path d="M1253.5 0h8.6" stroke="#280099"/><path d="M1261.5 0h8.6" stroke="#2d0099"/><path d="M1269.5 0h8.6" stroke="#310099"/><path d="M1277.5 0h8.6" stroke="#360099"/><path d="M1285.5 0h8.6" stroke="#3b0099"/><path d="M1293.5 0h8.6" stroke="#3f0099"/><path d="M1301.5 0h8.6" stroke="#409"/><path d="M1309.5 0h8.6" stroke="#490099"/><path d="M1317.5 0h8.6" stroke="#4d0099"/><path d="M1325.5 0h8.6" stroke="#520099"/><path d="M1333.5 0h8.6" stroke="#570099"/><path d="M1341.5 0h8.6" stroke="#5c0099"/><path d="M1349.5 0h8.6" stroke="#600099"/><path d="M1357.5 0h8.6" stroke="#650099"/><path d="M1365.5 0h8.6" stroke="#6a0099"/><path d="M1373.5 0h8.6" stroke="#6f0099"/><path d="M1381.5 0h8.6" stroke="#740099"/><path d="M1389.5 0h8.6" stroke="#790099"/></g><g transform="translate(0,424.2)"><path d="M1141.5 0h8.6" stroke="#000799"/><path d="M1149.5 0h8.6" stroke="#000599"/><path d="M1157.5 0h8.6" stroke="#000499"/><path d="M1165.5 0h8.6" stroke="#000399"/><path d="M1173.5 0h8.6" stroke="#000299"/><path d="M1181.5 0h8.6" stroke="#000199"/><path d="M1189.5 0h8.6" stroke="#040099"/><path d="M1197.5 0h8.6" stroke="#080099"/><path d="M1205.5 0h8.6" stroke="#0d0099"/><path d="M1213.5 0h8.6" stroke="#109"/><path d="M1221.5 0h8.6" stroke="#150099"/><path d="M1229.5 0h8.6" stroke="#1a0099"/><path d="M1237.5 0h8.6" stroke="#1e0099"/><path d="M1245.5 0h8.6" stroke="#209"/><path d="M1253.5 0h8.6" stroke="#270099"/><path d="M1261.5 0h8.6" stroke="#2b0099"/><path d="M1269.5 0h8.6" stroke="#2f0099"/><path d="M1277.5 0h8.6" stroke="#340099"/><path d="M1285.5 0h8.6" stroke="#380099"/><path d="M1293.5 0h8.6" stroke="#3d0099"/><path d="M1301.5 0h8.6" stroke="#410099"/><path d="M1309.5 0h8.6" stroke="#460099"/><path d="M1317.5 0h8.6" stroke="#4b0099"/><path d="M1325.5 0h8.6" stroke="#4f0099"/><path d="M1333.5 0h8.6" stroke="#540099"/><path d="M1341.5 0h8.6" stroke="#580099"/><path d="M1349.5 0h8.6" stroke="#5d0099"/><path d="M1357.5 0h8.6" stroke="#620099"/><path d="M1365.5 0h8.6" stroke="#609"/><path d="M1373.5 0h8.6" stroke="#6b0099"/><path d="M1381.5 0h8.6" stroke="#700099"/></g><g transform="translate(0,432.2)"><path d="M1141.5 0h8.6" stroke="#000599"/><path d="M1149.5 0h8.6" stroke="#000499"/><path d="M1157.5 0h8.6" stroke="#000399"/><path d="M1165.5 0h8.6" stroke="#000299"/><path d="M1173.5 0h8.6" stroke="#000199"/><path d="M1181.5 0h8.6" stroke="#009"/><path d="M1189.5 0h8.6" stroke="#030099"/><path d="M1197.5 0h8.6" stroke="#080099"/><path d="M1205.5 0h8.6" stroke="#0c0099"/><path d="M1213.5 0h8.6" stroke="#100099"/><path d="M1221.5 0h8.6" stroke="#140099"/><path d="M1229.5 0h8.6" stroke="#180099"/><path d="M1237.5 0h8.6" stroke="#1c0099"/><path d="M1245.5 0h8.6" stroke="#210099"/><path d="M1253.5 0h8.6" stroke="#250099"/><path d="M1261.5 0h8.6" stroke="#290099"/><path d="M1269.5 0h8.6" stroke="#2e0099"/><path d="M1277.5 0h8.6" stroke="#320099"/><path d="M1285.5 0h8.6" stroke="#360099"/><path d="M1293.5 0h8.6" stroke="#3b0099"/><path d="M1301.5 0h8.6" stroke="#3f0099"/><path d="M1309.5 0h8.6" stroke="#430099"/><path d="M1317.5 0h8.6" stroke="#480099"/><path d="M1325.5 0h8.6" stroke="#4c0099"/><path d="M1333.5 0h8.6" stroke="#510099"/><path d="M1341.5 0h8.6" stroke="#509"/><path d="M1349.5 0h8.6" stroke="#5a0099"/><path d="M1357.5 0h8.6" stroke="#5e0099"/><path d="M1365.5 0h8.6" stroke="#630099"/><path d="M1373.5 0h8.6" stroke="#680099"/></g><g transform="translate(0,440.2)"><path d="M1149.5 0h8.6" stroke="#000399"/><path d="M1157.5 0h8.6" stroke="#000299"/><path d="M1165.5 0h8.6" stroke="#000199"/><path d="M1173.5 0h16.6" stroke="#009"/><path d="M1189.5 0h8.6" stroke="#030099"/><path d="M1197.5 0h8.6" stroke="#070099"/><path d="M1205.5 0h8.6" stroke="#0b0099"/><path d="M1213.5 0h8.6" stroke="#0f0099"/><path d="M1221.5 0h8.6" stroke="#130099"/><path d="M1229.5 0h8.6" stroke="#170099"/><path d="M1237.5 0h8.6" stroke="#1b0099"/><path d="M1245.5 0h8.6" stroke="#1f0099"/><path d="M1253.5 0h8.6" stroke="#230099"/><path d="M1261.5 0h8.6" stroke="#280099"/><path d="M1269.5 0h8.6" stroke="#2c0099"/><path d="M1277.5 0h8.6" stroke="#300099"/><path d="M1285.5 0h8.6" stroke="#340099"/><path d="M1293.5 0h8.6" stroke="#390099"/><path d="M1301.5 0h8.6" stroke="#3d0099"/><path d="M1309.5 0h8.6" stroke="#410099"/><path d="M1317.5 0h8.6" stroke="#450099"/><path d="M1325.5 0h8.6" stroke="#4a0099"/><path d="M1333.5 0h8.6" stroke="#4e0099"/><path d="M1341.5 0h8.6" stroke="#530099"/><path d="M1349.5 0h8.6" stroke="#570099"/><path d="M1357.5 0h8.6" stroke="#5b0099"/><path d="M1365.5 0h8.6" stroke="#600099"/></g><g transform="translate(0,448.2)"><path d="M1157.5 0h8.6" stroke="#000199"/><path d="M1165.5 0h24.6" stroke="#009"/><path d="M1189.5 0h8.6" stroke="#020099"/><path d="M1197.5 0h8.6" stroke="#060099"/><path d="M1205.5 0h8.6" stroke="#0a0099"/><path d="M1213.5 0h8.6" stroke="#0e0099"/><path d="M1221.5 0h8.6" stroke="#120099"/><path d="M1229.5 0h8.6" stroke="#160099"/><path d="M1237.5 0h8.6" stroke="#1a0099"/><path d="M1245.5 0h8.6" stroke="#1e0099"/><path d="M1253.5 0h8.6" stroke="#209"/><path d="M1261.5 0h8.6" stroke="#260099"/><path d="M1269.5 0h8.6" stroke="#2a0099"/><path d="M1277.5 0h8.6" stroke="#2e0099"/><path d="M1285.5 0h8.6" stroke="#320099"/><path d="M1293.5 0h8.6" stroke="#360099"/><path d="M1301.5 0h8.6" stroke="#3b0099"/><path d="M1309.5 0h8.6" stroke="#3f0099"/><path d="M1317.5 0h8.6" stroke="#430099"/><path d="M1325.5 0h8.6" stroke="#470099"/><path d="M1333.5 0h8.6" stroke="#4c0099"/><path d="M1341.5 0h8.6" stroke="#500099"/><path d="M1349.5 0h8.6" stroke="#540099"/><path d="M1357.5 0h8.6" stroke="#580099"/></g><g transform="translate(0,456.2)"><path d="M1165.5 0h24.6" stroke="#009"/><path d="M1189.5 0h8.6" stroke="#010099"/><path d="M1197.5 0h8.6" stroke="#050099"/><path d="M1205.5 0h8.6" stroke="#090099"/><path d="M1213.5 0h8.6" stroke="#0d0099"/><path d="M1221.5 0h8.6" stroke="#109"/><path d="M1229.5 0h8.6" stroke="#150099"/><path d="M1237.5 0h8.6" stroke="#190099"/><path d="M1245.5 0h8.6" stroke="#1d0099"/><path d="M1253.5 0h8.6" stroke="#200099"/><path d="M1261.5 0h8.6" stroke="#240099"/><path d="M1269.5 0h8.6" stroke="#280099"/><path d="M1277.5 0h8.6" stroke="#2c0099"/><path d="M1285.5 0h8.6" stroke="#310099"/><path d="M1293.5 0h8.6" stroke="#350099"/><path d="M1301.5 0h8.6" stroke="#390099"/><path d="M1309.5 0h8.6" stroke="#3d0099"/><path d="M1317.5 0h8.6" stroke="#410099"/><path d="M1325.5 0h8.6" stroke="#450099"/><path d="M1333.5 0h8.6" stroke="#490099"/><path d="M1341.5 0h8.6" stroke="#4d0099"/><path d="M1349.5 0h8.6" stroke="#510099"/></g><g transform="translate(0,464.2)"><path d="M1173.5 0h16.6" stroke="#009"/><path d="M1189.5 0h8.6" stroke="#010099"/><path d="M1197.5 0h8.6" stroke="#040099"/><path d="M1205.5 0h8.6" stroke="#080099"/><path d="M1213.5 0h8.6" stroke="#0c0099"/><path d="M1221.5 0h8.6" stroke="#100099"/><path d="M1229.5 0h8.6" stroke="#140099"/><path d="M1237.5 0h8.6" stroke="#170099"/><path d="M1245.5 0h8.6" stroke="#1b0099"/><path d="M1253.5 0h8.6" stroke="#1f0099"/><path d="M1261.5 0h8.6" stroke="#230099"/><path d="M1269.5 0h8.6" stroke="#270099"/><path d="M1277.5 0h8.6" stroke="#2b0099"/><path d="M1285.5 0h8.6" stroke="#2f0099"/><path d="M1293.5 0h8.6" stroke="#309"/><path d="M1301.5 0h8.6" stroke="#370099"/><path d="M1309.5 0h8.6" stroke="#3b0099"/><path d="M1317.5 0h8.6" stroke="#3f0099"/><path d="M1325.5 0h8.6" stroke="#430099"/><path d="M1333.5 0h8.6" stroke="#470099"/><path d="M1341.5 0h8.6" stroke="#4b0099"/></g><g transform="translate(0,472.2)"><path d="M1173.5 0h24.6" stroke="#009"/><path d="M1197.5 0h8.6" stroke="#040099"/><path d="M1205.5 0h8.6" stroke="#070099"/><path d="M1213.5 0h8.6" stroke="#0b0099"/><path d="M1221.5 0h8.6" stroke="#0f0099"/><path d="M1229.5 0h8.6" stroke="#130099"/><path d="M1237.5 0h8.6" stroke="#160099"/><path d="M1245.5 0h8.6" stroke="#1a0099"/><path d="M1253.5 0h8.6" stroke="#1e0099"/><path d="M1261.5 0h8.6" stroke="#209"/><path d="M1269.5 0h8.6" stroke="#250099"/><path d="M1277.5 0h8.6" stroke="#290099"/><path d="M1285.5 0h8.6" stroke="#2d0099"/><path d="M1293.5 0h8.6" stroke="#310099"/><path d="M1301.5 0h8.6" stroke="#350099"/><path d="M1309.5 0h8.6" stroke="#390099"/><path d="M1317.5 0h8.6" stroke="#3d0099"/><path d="M1325.5 0h8.6" stroke="#410099"/><path d="M1333.5 0h8.6" stroke="#409"/><path d="M1341.5 0h8.6" stroke="#480099"/></g><g transform="translate(0,480.2)"><path d="M1181.5 0h16.6" stroke="#009"/><path d="M1197.5 0h8.6" stroke="#030099"/><path d="M1205.5 0h8.6" stroke="#070099"/><path d="M1213.5 0h8.6" stroke="#0a0099"/><path d="M1221.5 0h8.6" stroke="#0e0099"/><path d="M1229.5 0h8.6" stroke="#120099"/><path d="M1237.5 0h8.6" stroke="#150099"/><path d="M1245.5 0h8.6" stroke="#190099"/><path d="M1253.5 0h8.6" stroke="#1d0099"/><path d="M1261.5 0h8.6" stroke="#200099"/><path d="M1269.5 0h8.6" stroke="#240099"/><path d="M1277.5 0h8.6" stroke="#280099"/><path d="M1285.5 0h8.6" stroke="#2b0099"/><path d="M1293.5 0h8.6" stroke="#2f0099"/><path d="M1301.5 0h8.6" stroke="#309"/><path d="M1309.5 0h8.6" stroke="#370099"/><path d="M1317.5 0h8.6" stroke="#3b0099"/><path d="M1325.5 0h8.6" stroke="#3e0099"/><path d="M1333.5 0h8.6" stroke="#420099"/></g><g transform="translate(0,488.2)"><path d="M1189.5 0h8.6" stroke="#009"/><path d="M1197.5 0h8.6" stroke="#020099"/><path d="M1205.5 0h8.6" stroke="#060099"/><path d="M1213.5 0h8.6" stroke="#090099"/><path d="M1221.5 0h8.6" stroke="#0d0099"/><path d="M1229.5 0h8.6" stroke="#109"/><path d="M1237.5 0h8.6" stroke="#140099"/><path d="M1245.5 0h8.6" stroke="#180099"/><path d="M1253.5 0h8.6" stroke="#1b0099"/><path d="M1261.5 0h8.6" stroke="#1f0099"/><path d="M1269.5 0h8.6" stroke="#230099"/><path d="M1277.5 0h8.6" stroke="#260099"/><path d="M1285.5 0h8.6" stroke="#2a0099"/><path d="M1293.5 0h8.6" stroke="#2e0099"/><path d="M1301.5 0h8.6" stroke="#310099"/><path d="M1309.5 0h8.6" stroke="#350099"/><path d="M1317.5 0h8.6" stroke="#390099"/><path d="M1325.5 0h8.6" stroke="#3d0099"/></g><g transform="translate(0,496.2)"><path d="M1205.5 0h8.6" stroke="#050099"/><path d="M1213.5 0h8.6" stroke="#090099"/><path d="M1221.5 0h8.6" stroke="#0c0099"/><path d="M1229.5 0h8.6" stroke="#100099"/><path d="M1237.5 0h8.6" stroke="#130099"/><path d="M1245.5 0h8.6" stroke="#170099"/><path d="M1253.5 0h8.6" stroke="#1a0099"/><path d="M1261.5 0h8.6" stroke="#1e0099"/><path d="M1269.5 0h8.6" stroke="#210099"/><path d="M1277.5 0h8.6" stroke="#250099"/><path d="M1285.5 0h8.6" stroke="#290099"/><path d="M1293.5 0h8.6" stroke="#2c0099"/><path d="M1301.5 0h8.6" stroke="#300099"/><path d="M1309.5 0h8.6" stroke="#309"/><path d="M1317.5 0h8.6" stroke="#370099"/></g><g transform="translate(0,504.2)"><path d="M1213.5 0h8.6" stroke="#080099"/><path d="M1221.5 0h8.6" stroke="#0b0099"/><path d="M1229.5 0h8.6" stroke="#0f0099"/><path d="M1237.5 0h8.6" stroke="#120099"/><path d="M1245.5 0h8.6" stroke="#160099"/><path d="M1253.5 0h8.6" stroke="#190099"/><path d="M1261.5 0h8.6" stroke="#1d0099"/><path d="M1269.5 0h8.6" stroke="#200099"/><path d="M1277.5 0h8.6" stroke="#240099"/><path d="M1285.5 0h8.6" stroke="#270099"/><path d="M1293.5 0h8.6" stroke="#2b0099"/><path d="M1301.5 0h8.6" stroke="#2e0099"/><path d="M1309.5 0h8.6" stroke="#320099"/></g><g transform="translate(0,512.2)"><path d="M1221.5 0h8.6" stroke="#0b0099"/><path d="M1229.5 0h8.6" stroke="#0e0099"/><path d="M1237.5 0h8.6" stroke="#109"/><path d="M1245.5 0h8.6" stroke="#150099"/><path d="M1253.5 0h8.6" stroke="#180099"/><path d="M1261.5 0h8.6" stroke="#1b0099"/><path d="M1269.5 0h8.6" stroke="#1f0099"/><path d="M1277.5 0h8.6" stroke="#209"/><path d="M1285.5 0h8.6" stroke="#260099"/><path d="M1293.5 0h8.6" stroke="#290099"/><path d="M1301.5 0h8.6" stroke="#2d0099"/></g><g transform="translate(0,520.2)"><path d="M1229.5 0h8.6" stroke="#0d0099"/><path d="M1237.5 0h8.6" stroke="#100099"/><path d="M1245.5 0h8.6" stroke="#140099"/><path d="M1253.5 0h8.6" stroke="#170099"/><path d="M1261.5 0h8.6" stroke="#1a0099"/><path d="M1269.5 0h8.6" stroke="#1e0099"/><path d="M1277.5 0h8.6" stroke="#210099"/><path d="M1285.5 0h8.6" stroke="#240099"/><path d="M1293.5 0h8.6" stroke="#280099"/></g><g transform="translate(0,528.2)"><path d="M1237.5 0h8.6" stroke="#100099"/><path d="M1245.5 0h8.6" stroke="#130099"/><path d="M1253.5 0h8.6" stroke="#160099"/><path d="M1261.5 0h8.6" stroke="#190099"/><path d="M1269.5 0h8.6" stroke="#1d0099"/><path d="M1277.5 0h8.6" stroke="#200099"/><path d="M1285.5 0h8.6" stroke="#230099"/></g><g transform="translate(0,536.2)"><path d="M1245.5 0h8.6" stroke="#120099"/><path d="M1253.5 0h8.6" stroke="#150099"/><path d="M1261.5 0h8.6" stroke="#180099"/><path d="M1269.5 0h8.6" stroke="#1c0099"/><path d="M1277.5 0h8.6" stroke="#1f0099"/></g><g transform="translate(0,544.2)"><path d="M1261.5 0h8.6" stroke="#170099"/><path d="M1269.5 0h8.6" stroke="#1b0099"/></g></g></g><g clip-path="url(#cpt)"><g filter="url(#bl)" stroke-width="8.6" fill="none"><g transform="translate(0,104.2)"><path d="M1125.5 0h8.6" stroke="#0f0"/><path d="M1133.5 0h8.6" stroke="#09ff00"/><path d="M1141.5 0h8.6" stroke="#1dff00"/><path d="M1149.5 0h8.6" stroke="#32ff00"/><path d="M1157.5 0h8.6" stroke="#47ff00"/><path d="M1165.5 0h8.6" stroke="#5eff00"/><path d="M1173.5 0h8.6" stroke="#76ff00"/><path d="M1181.5 0h8.6" stroke="#90ff00"/></g><g transform="translate(0,112.2)"><path d="M1125.5 0h8.6" stroke="#00ff0f"/><path d="M1133.5 0h8.6" stroke="#06ff0d"/><path d="M1141.5 0h8.6" stroke="#1aff0c"/><path d="M1149.5 0h8.6" stroke="#2fff0a"/><path d="M1157.5 0h8.6" stroke="#46ff09"/><path d="M1165.5 0h8.6" stroke="#5dff07"/><path d="M1173.5 0h8.6" stroke="#76ff05"/><path d="M1181.5 0h8.6" stroke="#90ff03"/><path d="M1189.5 0h8.6" stroke="#abff01"/><path d="M1197.5 0h8.6" stroke="#c8ff00"/><path d="M1205.5 0h8.6" stroke="#e6ff00"/><path d="M1213.5 0h8.6" stroke="#fff800"/><path d="M1221.5 0h8.6" stroke="#ffdb00"/><path d="M1229.5 0h8.6" stroke="#ffc300"/><path d="M1237.5 0h8.6" stroke="#ffaf00"/><path d="M1245.5 0h8.6" stroke="#ff9e00"/><path d="M1253.5 0h8.6" stroke="#ff8f00"/><path d="M1261.5 0h8.6" stroke="#ff8100"/><path d="M1269.5 0h8.6" stroke="#ff7600"/></g><g transform="translate(0,120.2)"><path d="M1125.5 0h8.6" stroke="#00ff21"/><path d="M1133.5 0h8.6" stroke="#02ff20"/><path d="M1141.5 0h8.6" stroke="#17ff1f"/><path d="M1149.5 0h8.6" stroke="#2dff1e"/><path d="M1157.5 0h8.6" stroke="#44ff1d"/><path d="M1165.5 0h8.6" stroke="#5cff1c"/><path d="M1173.5 0h8.6" stroke="#75ff1b"/><path d="M1181.5 0h8.6" stroke="#90ff19"/><path d="M1189.5 0h8.6" stroke="#acff18"/><path d="M1197.5 0h8.6" stroke="#c9ff16"/><path d="M1205.5 0h8.6" stroke="#e9ff15"/><path d="M1213.5 0h8.6" stroke="#fff512"/><path d="M1221.5 0h8.6" stroke="#ffd80f"/><path d="M1229.5 0h8.6" stroke="#ffc00c"/><path d="M1237.5 0h8.6" stroke="#ffac09"/><path d="M1245.5 0h8.6" stroke="#ff9b07"/><path d="M1253.5 0h8.6" stroke="#ff8b05"/><path d="M1261.5 0h8.6" stroke="#ff7e03"/><path d="M1269.5 0h8.6" stroke="#ff7302"/><path d="M1277.5 0h8.6" stroke="#ff6800"/><path d="M1285.5 0h8.6" stroke="#ff5f00"/><path d="M1293.5 0h8.6" stroke="#ff5700"/><path d="M1301.5 0h8.6" stroke="#ff4f00"/><path d="M1309.5 0h8.6" stroke="#ff4800"/><path d="M1317.5 0h8.6" stroke="#ff4200"/><path d="M1325.5 0h8.6" stroke="#ff3c00"/><path d="M1333.5 0h8.6" stroke="#ff3700"/><path d="M1341.5 0h8.6" stroke="#ff3200"/><path d="M1349.5 0h8.6" stroke="#ff2d00"/></g><g transform="translate(0,128.2)"><path d="M1133.5 0h8.6" stroke="#00ff34"/><path d="M1141.5 0h8.6" stroke="#14ff34"/><path d="M1149.5 0h8.6" stroke="#2bff33"/><path d="M1157.5 0h8.6" stroke="#42ff32"/><path d="M1165.5 0h8.6" stroke="#5aff32"/><path d="M1173.5 0h8.6" stroke="#74ff31"/><path d="M1181.5 0h8.6" stroke="#90ff30"/><path d="M1189.5 0h8.6" stroke="#acff2f"/><path d="M1197.5 0h8.6" stroke="#cbff2f"/><path d="M1205.5 0h8.6" stroke="#ebff2e"/><path d="M1213.5 0h8.6" stroke="#fff12a"/><path d="M1221.5 0h8.6" stroke="#ffd524"/><path d="M1229.5 0h8.6" stroke="#ffbd20"/><path d="M1237.5 0h8.6" stroke="#ffa91b"/><path d="M1245.5 0h8.6" stroke="#ff9718"/><path d="M1253.5 0h8.6" stroke="#ff8815"/><path d="M1261.5 0h8.6" stroke="#ff7b12"/><path d="M1269.5 0h8.6" stroke="#ff6f10"/><path d="M1277.5 0h8.6" stroke="#ff650e"/><path d="M1285.5 0h8.6" stroke="#ff5c0c"/><path d="M1293.5 0h8.6" stroke="#ff540a"/><path d="M1301.5 0h8.6" stroke="#ff4c08"/><path d="M1309.5 0h8.6" stroke="#ff4507"/><path d="M1317.5 0h8.6" stroke="#ff3f06"/><path d="M1325.5 0h8.6" stroke="#ff3905"/><path d="M1333.5 0h8.6" stroke="#ff3404"/><path d="M1341.5 0h8.6" stroke="#ff2f03"/><path d="M1349.5 0h8.6" stroke="#ff2b02"/><path d="M1357.5 0h8.6" stroke="#ff2701"/><path d="M1365.5 0h8.6" stroke="#ff2300"/><path d="M1373.5 0h8.6" stroke="#ff1f00"/><path d="M1381.5 0h8.6" stroke="#ff1c00"/><path d="M1389.5 0h8.6" stroke="#ff1900"/><path d="M1397.5 0h8.6" stroke="#ff1600"/><path d="M1405.5 0h8.6" stroke="#ff1300"/><path d="M1413.5 0h8.6" stroke="#ff1000"/><path d="M1421.5 0h8.6" stroke="#ff0e00"/><path d="M1429.5 0h8.6" stroke="#ff0b00"/><path d="M1437.5 0h8.6" stroke="#ff0900"/></g><g transform="translate(0,136.2)"><path d="M1133.5 0h8.6" stroke="#00ff49"/><path d="M1141.5 0h8.6" stroke="#11ff49"/><path d="M1149.5 0h8.6" stroke="#28ff49"/><path d="M1157.5 0h8.6" stroke="#40ff49"/><path d="M1165.5 0h8.6" stroke="#59ff49"/><path d="M1173.5 0h8.6" stroke="#74ff49"/><path d="M1181.5 0h8.6" stroke="#90ff49"/><path d="M1189.5 0h8.6" stroke="#adff48"/><path d="M1197.5 0h8.6" stroke="#ccff48"/><path d="M1205.5 0h8.6" stroke="#eeff48"/><path d="M1213.5 0h8.6" stroke="#ffee43"/><path d="M1221.5 0h8.6" stroke="#ffd13b"/><path d="M1229.5 0h8.6" stroke="#ffb934"/><path d="M1237.5 0h8.6" stroke="#ffa52e"/><path d="M1245.5 0h8.6" stroke="#ff9429"/><path d="M1253.5 0h8.6" stroke="#ff8525"/><path d="M1261.5 0h8.6" stroke="#ff7821"/><path d="M1269.5 0h8.6" stroke="#ff6c1e"/><path d="M1277.5 0h8.6" stroke="#ff621b"/><path d="M1285.5 0h8.6" stroke="#ff5918"/><path d="M1293.5 0h8.6" stroke="#ff5116"/><path d="M1301.5 0h8.6" stroke="#ff4914"/><path d="M1309.5 0h8.6" stroke="#ff4312"/><path d="M1317.5 0h8.6" stroke="#ff3c10"/><path d="M1325.5 0h8.6" stroke="#ff370f"/><path d="M1333.5 0h8.6" stroke="#ff320d"/><path d="M1341.5 0h8.6" stroke="#ff2d0c"/><path d="M1349.5 0h8.6" stroke="#ff280a"/><path d="M1357.5 0h8.6" stroke="#ff2409"/><path d="M1365.5 0h8.6" stroke="#ff2008"/><path d="M1373.5 0h8.6" stroke="#ff1d07"/><path d="M1381.5 0h8.6" stroke="#ff1a06"/><path d="M1389.5 0h8.6" stroke="#ff1605"/><path d="M1397.5 0h8.6" stroke="#ff1405"/><path d="M1405.5 0h8.6" stroke="#ff1104"/><path d="M1413.5 0h8.6" stroke="#ff0e03"/><path d="M1421.5 0h8.6" stroke="#ff0c02"/><path d="M1429.5 0h8.6" stroke="#ff0902"/><path d="M1437.5 0h8.6" stroke="#ff0701"/><path d="M1445.5 0h8.6" stroke="#ff0500"/><path d="M1453.5 0h8.6" stroke="#ff0300"/><path d="M1461.5 0h8.6" stroke="#ff0100"/><path d="M1469.5 0h8.6" stroke="#f00"/></g><g transform="translate(0,144.2)"><path d="M1133.5 0h8.6" stroke="#00ff5f"/><path d="M1141.5 0h8.6" stroke="#0eff60"/><path d="M1149.5 0h8.6" stroke="#25ff60"/><path d="M1157.5 0h8.6" stroke="#3eff61"/><path d="M1165.5 0h8.6" stroke="#58ff61"/><path d="M1173.5 0h8.6" stroke="#73ff62"/><path d="M1181.5 0h8.6" stroke="#8fff62"/><path d="M1189.5 0h8.6" stroke="#aeff63"/><path d="M1197.5 0h8.6" stroke="#ceff64"/><path d="M1205.5 0h8.6" stroke="#f1ff64"/><path d="M1213.5 0h8.6" stroke="#ffeb5d"/><path d="M1221.5 0h8.6" stroke="#ffce52"/><path d="M1229.5 0h8.6" stroke="#ffb649"/><path d="M1237.5 0h8.6" stroke="#ffa142"/><path d="M1245.5 0h8.6" stroke="#ff903b"/><path d="M1253.5 0h8.6" stroke="#ff8136"/><path d="M1261.5 0h8.6" stroke="#ff7431"/><path d="M1269.5 0h8.6" stroke="#ff692c"/><path d="M1277.5 0h8.6" stroke="#ff5f29"/><path d="M1285.5 0h8.6" stroke="#ff5625"/><path d="M1293.5 0h8.6" stroke="#ff4e22"/><path d="M1301.5 0h8.6" stroke="#ff4620"/><path d="M1309.5 0h8.6" stroke="#ff401d"/><path d="M1317.5 0h8.6" stroke="#ff3a1b"/><path d="M1325.5 0h8.6" stroke="#ff3419"/><path d="M1333.5 0h8.6" stroke="#ff2f17"/><path d="M1341.5 0h8.6" stroke="#ff2a15"/><path d="M1349.5 0h8.6" stroke="#ff2613"/><path d="M1357.5 0h8.6" stroke="#ff2212"/><path d="M1365.5 0h8.6" stroke="#ff1e11"/><path d="M1373.5 0h8.6" stroke="#ff1b0f"/><path d="M1381.5 0h8.6" stroke="#ff170e"/><path d="M1389.5 0h8.6" stroke="#ff140d"/><path d="M1397.5 0h8.6" stroke="#ff110c"/><path d="M1405.5 0h8.6" stroke="#ff0f0b"/><path d="M1413.5 0h8.6" stroke="#ff0c0a"/><path d="M1421.5 0h8.6" stroke="#ff0a09"/><path d="M1429.5 0h8.6" stroke="#ff0708"/><path d="M1437.5 0h8.6" stroke="#ff0507"/><path d="M1445.5 0h8.6" stroke="#ff0307"/><path d="M1453.5 0h8.6" stroke="#ff0106"/><path d="M1461.5 0h8.6" stroke="#ff0005"/></g><g transform="translate(0,152.2)"><path d="M1133.5 0h8.6" stroke="#00ff76"/><path d="M1141.5 0h8.6" stroke="#0bff77"/><path d="M1149.5 0h8.6" stroke="#23ff78"/><path d="M1157.5 0h8.6" stroke="#3cff79"/><path d="M1165.5 0h8.6" stroke="#56ff7b"/><path d="M1173.5 0h8.6" stroke="#72ff7c"/><path d="M1181.5 0h8.6" stroke="#8fff7d"/><path d="M1189.5 0h8.6" stroke="#afff7f"/><path d="M1197.5 0h8.6" stroke="#d0ff80"/><path d="M1205.5 0h8.6" stroke="#f4ff82"/><path d="M1213.5 0h8.6" stroke="#ffe777"/><path d="M1221.5 0h8.6" stroke="#ffca6a"/><path d="M1229.5 0h8.6" stroke="#ffb25f"/><path d="M1237.5 0h8.6" stroke="#ff9e55"/><path d="M1245.5 0h8.6" stroke="#ff8d4d"/><path d="M1253.5 0h8.6" stroke="#ff7e47"/><path d="M1261.5 0h8.6" stroke="#ff7141"/><path d="M1269.5 0h8.6" stroke="#ff663b"/><path d="M1277.5 0h8.6" stroke="#ff5c37"/><path d="M1285.5 0h8.6" stroke="#ff5332"/><path d="M1293.5 0h8.6" stroke="#ff4b2f"/><path d="M1301.5 0h8.6" stroke="#ff432b"/><path d="M1309.5 0h8.6" stroke="#ff3d28"/><path d="M1317.5 0h8.6" stroke="#ff3726"/><path d="M1325.5 0h8.6" stroke="#ff3123"/><path d="M1333.5 0h8.6" stroke="#ff2c21"/><path d="M1341.5 0h8.6" stroke="#ff281e"/><path d="M1349.5 0h8.6" stroke="#ff231c"/><path d="M1357.5 0h8.6" stroke="#ff1f1b"/><path d="M1365.5 0h8.6" stroke="#ff1c19"/><path d="M1373.5 0h8.6" stroke="#ff1817"/><path d="M1381.5 0h8.6" stroke="#ff1516"/><path d="M1389.5 0h8.6" stroke="#ff1214"/><path d="M1397.5 0h8.6" stroke="#ff0f13"/><path d="M1405.5 0h8.6" stroke="#ff0d12"/><path d="M1413.5 0h8.6" stroke="#ff0a11"/><path d="M1421.5 0h8.6" stroke="#ff0810"/><path d="M1429.5 0h8.6" stroke="#ff060f"/><path d="M1437.5 0h8.6" stroke="#ff030e"/><path d="M1445.5 0h8.6" stroke="#ff010d"/><path d="M1453.5 0h8.6" stroke="#ff000c"/></g><g transform="translate(0,160.2)"><path d="M1133.5 0h8.6" stroke="#00ff8e"/><path d="M1141.5 0h8.6" stroke="#07ff90"/><path d="M1149.5 0h8.6" stroke="#20ff92"/><path d="M1157.5 0h8.6" stroke="#39ff94"/><path d="M1165.5 0h8.6" stroke="#54ff96"/><path d="M1173.5 0h8.6" stroke="#71ff98"/><path d="M1181.5 0h8.6" stroke="#8fff9a"/><path d="M1189.5 0h8.6" stroke="#b0ff9d"/><path d="M1197.5 0h8.6" stroke="#d2ff9f"/><path d="M1205.5 0h8.6" stroke="#f7ffa2"/><path d="M1213.5 0h8.6" stroke="#ffe393"/><path d="M1221.5 0h8.6" stroke="#ffc683"/><path d="M1229.5 0h8.6" stroke="#ffae75"/><path d="M1237.5 0h8.6" stroke="#ff9a6a"/><path d="M1245.5 0h8.6" stroke="#ff8960"/><path d="M1253.5 0h8.6" stroke="#ff7a58"/><path d="M1261.5 0h8.6" stroke="#ff6d51"/><path d="M1269.5 0h8.6" stroke="#ff624a"/><path d="M1277.5 0h8.6" stroke="#ff5845"/><path d="M1285.5 0h8.6" stroke="#ff4f40"/><path d="M1293.5 0h8.6" stroke="#ff483b"/><path d="M1301.5 0h8.6" stroke="#ff4037"/><path d="M1309.5 0h8.6" stroke="#ff3a34"/><path d="M1317.5 0h8.6" stroke="#ff3430"/><path d="M1325.5 0h8.6" stroke="#ff2f2d"/><path d="M1333.5 0h8.6" stroke="#ff2a2b"/><path d="M1341.5 0h8.6" stroke="#ff2528"/><path d="M1349.5 0h8.6" stroke="#ff2126"/><path d="M1357.5 0h8.6" stroke="#ff1d23"/><path d="M1365.5 0h8.6" stroke="#ff1921"/><path d="M1373.5 0h8.6" stroke="#ff1620"/><path d="M1381.5 0h8.6" stroke="#ff131e"/><path d="M1389.5 0h8.6" stroke="#ff101c"/><path d="M1397.5 0h8.6" stroke="#ff0d1b"/><path d="M1405.5 0h8.6" stroke="#ff0b19"/><path d="M1413.5 0h8.6" stroke="#ff0818"/><path d="M1421.5 0h8.6" stroke="#ff0616"/><path d="M1429.5 0h8.6" stroke="#ff0415"/><path d="M1437.5 0h8.6" stroke="#ff0214"/><path d="M1445.5 0h8.6" stroke="#ff0013"/></g><g transform="translate(0,168.2)"><path d="M1133.5 0h8.6" stroke="#00ffa8"/><path d="M1141.5 0h8.6" stroke="#04ffaa"/><path d="M1149.5 0h8.6" stroke="#1cffad"/><path d="M1157.5 0h8.6" stroke="#37ffaf"/><path d="M1165.5 0h8.6" stroke="#52ffb2"/><path d="M1173.5 0h8.6" stroke="#70ffb5"/><path d="M1181.5 0h8.6" stroke="#8fffb9"/><path d="M1189.5 0h8.6" stroke="#b1ffbc"/><path d="M1197.5 0h8.6" stroke="#d4ffc0"/><path d="M1205.5 0h8.6" stroke="#faffc4"/><path d="M1213.5 0h8.6" stroke="#ffdfaf"/><path d="M1221.5 0h8.6" stroke="#ffc29c"/><path d="M1229.5 0h8.6" stroke="#ffaa8c"/><path d="M1237.5 0h8.6" stroke="#ff967f"/><path d="M1245.5 0h8.6" stroke="#ff8573"/><path d="M1253.5 0h8.6" stroke="#ff776a"/><path d="M1261.5 0h8.6" stroke="#ff6a61"/><path d="M1269.5 0h8.6" stroke="#ff5f5a"/><path d="M1277.5 0h8.6" stroke="#ff5553"/><path d="M1285.5 0h8.6" stroke="#ff4c4d"/><path d="M1293.5 0h8.6" stroke="#ff4448"/><path d="M1301.5 0h8.6" stroke="#ff3d44"/><path d="M1309.5 0h8.6" stroke="#ff373f"/><path d="M1317.5 0h8.6" stroke="#ff313b"/><path d="M1325.5 0h8.6" stroke="#ff2c38"/><path d="M1333.5 0h8.6" stroke="#ff2735"/><path d="M1341.5 0h8.6" stroke="#ff2232"/><path d="M1349.5 0h8.6" stroke="#ff1e2f"/><path d="M1357.5 0h8.6" stroke="#ff1b2c"/><path d="M1365.5 0h8.6" stroke="#ff172a"/><path d="M1373.5 0h8.6" stroke="#ff1428"/><path d="M1381.5 0h8.6" stroke="#ff1126"/><path d="M1389.5 0h8.6" stroke="#ff0e24"/><path d="M1397.5 0h8.6" stroke="#ff0b22"/><path d="M1405.5 0h8.6" stroke="#ff0820"/><path d="M1413.5 0h8.6" stroke="#ff061f"/><path d="M1421.5 0h8.6" stroke="#ff041d"/><path d="M1429.5 0h8.6" stroke="#ff021c"/><path d="M1437.5 0h8.6" stroke="#ff001a"/><path d="M1445.5 0h8.6" stroke="#ff0019"/></g><g transform="translate(0,176.2)"><path d="M1141.5 0h8.6" stroke="#00ffc6"/><path d="M1149.5 0h8.6" stroke="#19ffc9"/><path d="M1157.5 0h8.6" stroke="#34ffcd"/><path d="M1165.5 0h8.6" stroke="#51ffd1"/><path d="M1173.5 0h8.6" stroke="#6fffd5"/><path d="M1181.5 0h8.6" stroke="#8fffd9"/><path d="M1189.5 0h8.6" stroke="#b2ffde"/><path d="M1197.5 0h8.6" stroke="#d6ffe3"/><path d="M1205.5 0h8.6" stroke="#feffe8"/><path d="M1213.5 0h8.6" stroke="#ffdbcd"/><path d="M1221.5 0h8.6" stroke="#ffbeb6"/><path d="M1229.5 0h8.6" stroke="#ffa6a4"/><path d="M1237.5 0h8.6" stroke="#ff9294"/><path d="M1245.5 0h8.6" stroke="#ff8187"/><path d="M1253.5 0h8.6" stroke="#ff737c"/><path d="M1261.5 0h8.6" stroke="#ff6672"/><path d="M1269.5 0h8.6" stroke="#ff5b69"/><path d="M1277.5 0h8.6" stroke="#ff5162"/><path d="M1285.5 0h8.6" stroke="#ff495b"/><path d="M1293.5 0h8.6" stroke="#ff4155"/><path d="M1301.5 0h8.6" stroke="#ff3a50"/><path d="M1309.5 0h8.6" stroke="#ff344b"/><path d="M1317.5 0h8.6" stroke="#ff2e47"/><path d="M1325.5 0h8.6" stroke="#ff2943"/><path d="M1333.5 0h8.6" stroke="#ff243f"/><path d="M1341.5 0h8.6" stroke="#ff203b"/><path d="M1349.5 0h8.6" stroke="#ff1c38"/><path d="M1357.5 0h8.6" stroke="#ff1835"/><path d="M1365.5 0h8.6" stroke="#ff1533"/><path d="M1373.5 0h8.6" stroke="#ff1130"/><path d="M1381.5 0h8.6" stroke="#ff0e2e"/><path d="M1389.5 0h8.6" stroke="#ff0b2c"/><path d="M1397.5 0h8.6" stroke="#ff092a"/><path d="M1405.5 0h8.6" stroke="#ff0628"/><path d="M1413.5 0h8.6" stroke="#ff0426"/><path d="M1421.5 0h8.6" stroke="#ff0224"/><path d="M1429.5 0h8.6" stroke="#ff0023"/><path d="M1437.5 0h8.6" stroke="#ff0021"/></g><g transform="translate(0,184.2)"><path d="M1141.5 0h8.6" stroke="#00ffe3"/><path d="M1149.5 0h8.6" stroke="#16ffe7"/><path d="M1157.5 0h8.6" stroke="#31ffec"/><path d="M1165.5 0h8.6" stroke="#4ffff1"/><path d="M1173.5 0h8.6" stroke="#6efff6"/><path d="M1181.5 0h8.6" stroke="#8ffffc"/><path d="M1189.5 0h8.6" stroke="#b1fcff"/><path d="M1197.5 0h8.6" stroke="#d1f6ff"/><path d="M1205.5 0h8.6" stroke="#f2f0ff"/><path d="M1213.5 0h8.6" stroke="#ffd7eb"/><path d="M1221.5 0h8.6" stroke="#ffbad1"/><path d="M1229.5 0h8.6" stroke="#ffa2bc"/><path d="M1237.5 0h8.6" stroke="#ff8eaa"/><path d="M1245.5 0h8.6" stroke="#ff7d9b"/><path d="M1253.5 0h8.6" stroke="#ff6f8e"/><path d="M1261.5 0h8.6" stroke="#ff6283"/><path d="M1269.5 0h8.6" stroke="#ff5879"/><path d="M1277.5 0h8.6" stroke="#ff4e71"/><path d="M1285.5 0h8.6" stroke="#ff4569"/><path d="M1293.5 0h8.6" stroke="#ff3e63"/><path d="M1301.5 0h8.6" stroke="#ff375d"/><path d="M1309.5 0h8.6" stroke="#ff3157"/><path d="M1317.5 0h8.6" stroke="#ff2b52"/><path d="M1325.5 0h8.6" stroke="#ff264d"/><path d="M1333.5 0h8.6" stroke="#ff2149"/><path d="M1341.5 0h8.6" stroke="#ff1d45"/><path d="M1349.5 0h8.6" stroke="#ff1942"/><path d="M1357.5 0h8.6" stroke="#ff153f"/><path d="M1365.5 0h8.6" stroke="#ff123c"/><path d="M1373.5 0h8.6" stroke="#ff0f39"/><path d="M1381.5 0h8.6" stroke="#ff0c36"/><path d="M1389.5 0h8.6" stroke="#ff0934"/><path d="M1397.5 0h8.6" stroke="#ff0731"/><path d="M1405.5 0h8.6" stroke="#ff042f"/><path d="M1413.5 0h8.6" stroke="#ff022d"/><path d="M1421.5 0h8.6" stroke="#ff002b"/><path d="M1429.5 0h8.6" stroke="#ff0029"/></g><g transform="translate(0,192.2)"><path d="M1141.5 0h8.6" stroke="#00fdff"/><path d="M1149.5 0h8.6" stroke="#11f7ff"/><path d="M1157.5 0h8.6" stroke="#2cf2ff"/><path d="M1165.5 0h8.6" stroke="#47edff"/><path d="M1173.5 0h8.6" stroke="#62e7ff"/><path d="M1181.5 0h8.6" stroke="#7ee1ff"/><path d="M1189.5 0h8.6" stroke="#9bdbff"/><path d="M1197.5 0h8.6" stroke="#b8d6ff"/><path d="M1205.5 0h8.6" stroke="#d5d0ff"/><path d="M1213.5 0h8.6" stroke="#f3c9ff"/><path d="M1221.5 0h8.6" stroke="#ffb6ed"/><path d="M1229.5 0h8.6" stroke="#ff9ed5"/><path d="M1237.5 0h8.6" stroke="#ff8ac1"/><path d="M1245.5 0h8.6" stroke="#ff79b0"/><path d="M1253.5 0h8.6" stroke="#ff6ba1"/><path d="M1261.5 0h8.6" stroke="#ff5f95"/><path d="M1269.5 0h8.6" stroke="#ff548a"/><path d="M1277.5 0h8.6" stroke="#ff4a80"/><path d="M1285.5 0h8.6" stroke="#ff4278"/><path d="M1293.5 0h8.6" stroke="#ff3b70"/><path d="M1301.5 0h8.6" stroke="#ff3469"/><path d="M1309.5 0h8.6" stroke="#ff2e63"/><path d="M1317.5 0h8.6" stroke="#ff285e"/><path d="M1325.5 0h8.6" stroke="#ff2358"/><path d="M1333.5 0h8.6" stroke="#ff1f54"/><path d="M1341.5 0h8.6" stroke="#ff1a4f"/><path d="M1349.5 0h8.6" stroke="#ff174b"/><path d="M1357.5 0h8.6" stroke="#ff1348"/><path d="M1365.5 0h8.6" stroke="#ff1044"/><path d="M1373.5 0h8.6" stroke="#ff0c41"/><path d="M1381.5 0h8.6" stroke="#ff0a3e"/><path d="M1389.5 0h8.6" stroke="#ff073c"/><path d="M1397.5 0h8.6" stroke="#ff0439"/><path d="M1405.5 0h8.6" stroke="#ff0237"/><path d="M1413.5 0h8.6" stroke="#ff0034"/><path d="M1421.5 0h8.6" stroke="#ff0032"/></g><g transform="translate(0,200.2)"><path d="M1141.5 0h8.6" stroke="#00e0ff"/><path d="M1149.5 0h8.6" stroke="#0cdbff"/><path d="M1157.5 0h8.6" stroke="#24d6ff"/><path d="M1165.5 0h8.6" stroke="#3dd1ff"/><path d="M1173.5 0h8.6" stroke="#56ccff"/><path d="M1181.5 0h8.6" stroke="#6fc6ff"/><path d="M1189.5 0h8.6" stroke="#89c1ff"/><path d="M1197.5 0h8.6" stroke="#a3bbff"/><path d="M1205.5 0h8.6" stroke="#beb5ff"/><path d="M1213.5 0h8.6" stroke="#d9b0ff"/><path d="M1221.5 0h8.6" stroke="#f4aaff"/><path d="M1229.5 0h8.6" stroke="#ff99ef"/><path d="M1237.5 0h8.6" stroke="#ff86d8"/><path d="M1245.5 0h8.6" stroke="#ff75c5"/><path d="M1253.5 0h8.6" stroke="#ff67b5"/><path d="M1261.5 0h8.6" stroke="#ff5ba7"/><path d="M1269.5 0h8.6" stroke="#ff509b"/><path d="M1277.5 0h8.6" stroke="#ff4790"/><path d="M1285.5 0h8.6" stroke="#ff3f86"/><path d="M1293.5 0h8.6" stroke="#ff377e"/><path d="M1301.5 0h8.6" stroke="#ff3176"/><path d="M1309.5 0h8.6" stroke="#ff2b6f"/><path d="M1317.5 0h8.6" stroke="#ff2569"/><path d="M1325.5 0h8.6" stroke="#ff2064"/><path d="M1333.5 0h8.6" stroke="#ff1c5e"/><path d="M1341.5 0h8.6" stroke="#ff185a"/><path d="M1349.5 0h8.6" stroke="#ff1455"/><path d="M1357.5 0h8.6" stroke="#ff1051"/><path d="M1365.5 0h8.6" stroke="#ff0d4d"/><path d="M1373.5 0h8.6" stroke="#ff0a4a"/><path d="M1381.5 0h8.6" stroke="#ff0747"/><path d="M1389.5 0h8.6" stroke="#ff0544"/><path d="M1397.5 0h8.6" stroke="#ff0241"/><path d="M1405.5 0h8.6" stroke="#ff003e"/><path d="M1413.5 0h8.6" stroke="#ff003c"/></g><g transform="translate(0,208.2)"><path d="M1141.5 0h8.6" stroke="#00c8ff"/><path d="M1149.5 0h8.6" stroke="#08c4ff"/><path d="M1157.5 0h8.6" stroke="#1ebfff"/><path d="M1165.5 0h8.6" stroke="#34baff"/><path d="M1173.5 0h8.6" stroke="#4bb5ff"/><path d="M1181.5 0h8.6" stroke="#62afff"/><path d="M1189.5 0h8.6" stroke="#7aaaff"/><path d="M1197.5 0h8.6" stroke="#92a5ff"/><path d="M1205.5 0h8.6" stroke="#aaa0ff"/><path d="M1213.5 0h8.6" stroke="#c39aff"/><path d="M1221.5 0h8.6" stroke="#dc95ff"/><path d="M1229.5 0h8.6" stroke="#f58fff"/><path d="M1237.5 0h8.6" stroke="#ff81f0"/><path d="M1245.5 0h8.6" stroke="#ff71db"/><path d="M1253.5 0h8.6" stroke="#ff63c9"/><path d="M1261.5 0h8.6" stroke="#ff57b9"/><path d="M1269.5 0h8.6" stroke="#ff4cac"/><path d="M1277.5 0h8.6" stroke="#ff43a0"/><path d="M1285.5 0h8.6" stroke="#ff3b95"/><path d="M1293.5 0h8.6" stroke="#ff348c"/><path d="M1301.5 0h8.6" stroke="#ff2d84"/><path d="M1309.5 0h8.6" stroke="#ff277c"/><path d="M1317.5 0h8.6" stroke="#ff2275"/><path d="M1325.5 0h8.6" stroke="#ff1d6f"/><path d="M1333.5 0h8.6" stroke="#ff1969"/><path d="M1341.5 0h8.6" stroke="#ff1564"/><path d="M1349.5 0h8.6" stroke="#ff115f"/><path d="M1357.5 0h8.6" stroke="#ff0e5b"/><path d="M1365.5 0h8.6" stroke="#ff0b57"/><path d="M1373.5 0h8.6" stroke="#ff0853"/><path d="M1381.5 0h8.6" stroke="#ff054f"/><path d="M1389.5 0h8.6" stroke="#ff024c"/><path d="M1397.5 0h8.6" stroke="#ff0049"/><path d="M1405.5 0h8.6" stroke="#ff0046"/></g><g transform="translate(0,216.2)"><path d="M1141.5 0h8.6" stroke="#00b4ff"/><path d="M1149.5 0h8.6" stroke="#04afff"/><path d="M1157.5 0h8.6" stroke="#18abff"/><path d="M1165.5 0h8.6" stroke="#2da6ff"/><path d="M1173.5 0h8.6" stroke="#42a1ff"/><path d="M1181.5 0h8.6" stroke="#579cff"/><path d="M1189.5 0h8.6" stroke="#6d97ff"/><path d="M1197.5 0h8.6" stroke="#8392ff"/><path d="M1205.5 0h8.6" stroke="#998dff"/><path d="M1213.5 0h8.6" stroke="#b088ff"/><path d="M1221.5 0h8.6" stroke="#c783ff"/><path d="M1229.5 0h8.6" stroke="#de7dff"/><path d="M1237.5 0h8.6" stroke="#f678ff"/><path d="M1245.5 0h8.6" stroke="#ff6cf1"/><path d="M1253.5 0h8.6" stroke="#ff5edd"/><path d="M1261.5 0h8.6" stroke="#ff53cc"/><path d="M1269.5 0h8.6" stroke="#ff48bd"/><path d="M1277.5 0h8.6" stroke="#ff3fb0"/><path d="M1285.5 0h8.6" stroke="#ff37a4"/><path d="M1293.5 0h8.6" stroke="#ff309a"/><path d="M1301.5 0h8.6" stroke="#ff2a91"/><path d="M1309.5 0h8.6" stroke="#ff2489"/><path d="M1317.5 0h8.6" stroke="#ff1f81"/><path d="M1325.5 0h8.6" stroke="#ff1a7a"/><path d="M1333.5 0h8.6" stroke="#ff1674"/><path d="M1341.5 0h8.6" stroke="#ff126e"/><path d="M1349.5 0h8.6" stroke="#ff0e69"/><path d="M1357.5 0h8.6" stroke="#ff0b64"/><path d="M1365.5 0h8.6" stroke="#ff0860"/><path d="M1373.5 0h8.6" stroke="#ff055c"/><path d="M1381.5 0h8.6" stroke="#ff0258"/><path d="M1389.5 0h8.6" stroke="#ff0054"/><path d="M1397.5 0h8.6" stroke="#ff0051"/></g><g transform="translate(0,224.2)"><path d="M1149.5 0h8.6" stroke="#009eff"/><path d="M1157.5 0h8.6" stroke="#1399ff"/><path d="M1165.5 0h8.6" stroke="#2795ff"/><path d="M1173.5 0h8.6" stroke="#3a90ff"/><path d="M1181.5 0h8.6" stroke="#4e8cff"/><path d="M1189.5 0h8.6" stroke="#6287ff"/><path d="M1197.5 0h8.6" stroke="#7682ff"/><path d="M1205.5 0h8.6" stroke="#8b7dff"/><path d="M1213.5 0h8.6" stroke="#a079ff"/><path d="M1221.5 0h8.6" stroke="#b574ff"/><path d="M1229.5 0h8.6" stroke="#cb6fff"/><path d="M1237.5 0h8.6" stroke="#e069ff"/><path d="M1245.5 0h8.6" stroke="#f664ff"/><path d="M1253.5 0h8.6" stroke="#ff5af2"/><path d="M1261.5 0h8.6" stroke="#ff4edf"/><path d="M1269.5 0h8.6" stroke="#ff44cf"/><path d="M1277.5 0h8.6" stroke="#ff3bc0"/><path d="M1285.5 0h8.6" stroke="#ff34b4"/><path d="M1293.5 0h8.6" stroke="#ff2da9"/><path d="M1301.5 0h8.6" stroke="#ff269f"/><path d="M1309.5 0h8.6" stroke="#ff2196"/><path d="M1317.5 0h8.6" stroke="#ff1c8d"/><path d="M1325.5 0h8.6" stroke="#ff1786"/><path d="M1333.5 0h8.6" stroke="#ff137f"/><path d="M1341.5 0h8.6" stroke="#ff0f79"/><path d="M1349.5 0h8.6" stroke="#ff0c73"/><path d="M1357.5 0h8.6" stroke="#ff086e"/><path d="M1365.5 0h8.6" stroke="#ff0569"/><path d="M1373.5 0h8.6" stroke="#ff0265"/><path d="M1381.5 0h8.6" stroke="#ff0060"/><path d="M1389.5 0h8.6" stroke="#ff005c"/></g><g transform="translate(0,232.2)"><path d="M1149.5 0h8.6" stroke="#008fff"/><path d="M1157.5 0h8.6" stroke="#0f8bff"/><path d="M1165.5 0h8.6" stroke="#2186ff"/><path d="M1173.5 0h8.6" stroke="#3482ff"/><path d="M1181.5 0h8.6" stroke="#467dff"/><path d="M1189.5 0h8.6" stroke="#5979ff"/><path d="M1197.5 0h8.6" stroke="#6c74ff"/><path d="M1205.5 0h8.6" stroke="#7f70ff"/><path d="M1213.5 0h8.6" stroke="#926bff"/><path d="M1221.5 0h8.6" stroke="#a666ff"/><path d="M1229.5 0h8.6" stroke="#ba62ff"/><path d="M1237.5 0h8.6" stroke="#ce5dff"/><path d="M1245.5 0h8.6" stroke="#e258ff"/><path d="M1253.5 0h8.6" stroke="#f753ff"/><path d="M1261.5 0h8.6" stroke="#ff4af3"/><path d="M1269.5 0h8.6" stroke="#ff40e1"/><path d="M1277.5 0h8.6" stroke="#ff38d1"/><path d="M1285.5 0h8.6" stroke="#ff30c4"/><path d="M1293.5 0h8.6" stroke="#ff29b7"/><path d="M1301.5 0h8.6" stroke="#ff23ad"/><path d="M1309.5 0h8.6" stroke="#ff1ea3"/><path d="M1317.5 0h8.6" stroke="#ff199a"/><path d="M1325.5 0h8.6" stroke="#ff1492"/><path d="M1333.5 0h8.6" stroke="#ff108a"/><path d="M1341.5 0h8.6" stroke="#ff0c84"/><path d="M1349.5 0h8.6" stroke="#ff097e"/><path d="M1357.5 0h8.6" stroke="#ff0678"/><path d="M1365.5 0h8.6" stroke="#ff0373"/><path d="M1373.5 0h8.6" stroke="#ff006e"/><path d="M1381.5 0h8.6" stroke="#ff0069"/></g><g transform="translate(0,240.2)"><path d="M1149.5 0h8.6" stroke="#0081ff"/><path d="M1157.5 0h8.6" stroke="#0c7dff"/><path d="M1165.5 0h8.6" stroke="#1d79ff"/><path d="M1173.5 0h8.6" stroke="#2e75ff"/><path d="M1181.5 0h8.6" stroke="#3f71ff"/><path d="M1189.5 0h8.6" stroke="#506dff"/><path d="M1197.5 0h8.6" stroke="#6268ff"/><path d="M1205.5 0h8.6" stroke="#7464ff"/><path d="M1213.5 0h8.6" stroke="#865fff"/><path d="M1221.5 0h8.6" stroke="#985bff"/><path d="M1229.5 0h8.6" stroke="#ab56ff"/><path d="M1237.5 0h8.6" stroke="#be52ff"/><path d="M1245.5 0h8.6" stroke="#d14dff"/><path d="M1253.5 0h8.6" stroke="#e448ff"/><path d="M1261.5 0h8.6" stroke="#f744ff"/><path d="M1269.5 0h8.6" stroke="#ff3cf4"/><path d="M1277.5 0h8.6" stroke="#ff34e3"/><path d="M1285.5 0h8.6" stroke="#ff2cd4"/><path d="M1293.5 0h8.6" stroke="#ff25c6"/><path d="M1301.5 0h8.6" stroke="#ff1fbb"/><path d="M1309.5 0h8.6" stroke="#ff1ab0"/><path d="M1317.5 0h8.6" stroke="#ff15a6"/><path d="M1325.5 0h8.6" stroke="#ff119e"/><path d="M1333.5 0h8.6" stroke="#ff0d96"/><path d="M1341.5 0h8.6" stroke="#ff098f"/><path d="M1349.5 0h8.6" stroke="#ff0688"/><path d="M1357.5 0h8.6" stroke="#ff0382"/><path d="M1365.5 0h8.6" stroke="#ff007c"/><path d="M1373.5 0h8.6" stroke="#f07"/></g><g transform="translate(0,248.2)"><path d="M1149.5 0h8.6" stroke="#0076ff"/><path d="M1157.5 0h8.6" stroke="#0872ff"/><path d="M1165.5 0h8.6" stroke="#186eff"/><path d="M1173.5 0h8.6" stroke="#286aff"/><path d="M1181.5 0h8.6" stroke="#3966ff"/><path d="M1189.5 0h8.6" stroke="#4962ff"/><path d="M1197.5 0h8.6" stroke="#5a5eff"/><path d="M1205.5 0h8.6" stroke="#6a59ff"/><path d="M1213.5 0h8.6" stroke="#7b55ff"/><path d="M1221.5 0h8.6" stroke="#8d51ff"/><path d="M1229.5 0h8.6" stroke="#9e4dff"/><path d="M1237.5 0h8.6" stroke="#af48ff"/><path d="M1245.5 0h8.6" stroke="#c144ff"/><path d="M1253.5 0h8.6" stroke="#d33fff"/><path d="M1261.5 0h8.6" stroke="#e53bff"/><path d="M1269.5 0h8.6" stroke="#f836ff"/><path d="M1277.5 0h8.6" stroke="#ff2ff4"/><path d="M1285.5 0h8.6" stroke="#ff28e4"/><path d="M1293.5 0h8.6" stroke="#ff22d6"/><path d="M1301.5 0h8.6" stroke="#ff1cc9"/><path d="M1309.5 0h8.6" stroke="#ff17be"/><path d="M1317.5 0h8.6" stroke="#ff12b3"/><path d="M1325.5 0h8.6" stroke="#ff0eaa"/><path d="M1333.5 0h8.6" stroke="#ff0aa1"/><path d="M1341.5 0h8.6" stroke="#ff069a"/><path d="M1349.5 0h8.6" stroke="#ff0392"/><path d="M1357.5 0h8.6" stroke="#ff008c"/><path d="M1365.5 0h8.6" stroke="#ff0086"/></g><g transform="translate(0,256.2)"><path d="M1149.5 0h8.6" stroke="#006bff"/><path d="M1157.5 0h8.6" stroke="#0667ff"/><path d="M1165.5 0h8.6" stroke="#1564ff"/><path d="M1173.5 0h8.6" stroke="#2460ff"/><path d="M1181.5 0h8.6" stroke="#335cff"/><path d="M1189.5 0h8.6" stroke="#4358ff"/><path d="M1197.5 0h8.6" stroke="#5254ff"/><path d="M1205.5 0h8.6" stroke="#6250ff"/><path d="M1213.5 0h8.6" stroke="#724cff"/><path d="M1221.5 0h8.6" stroke="#8248ff"/><path d="M1229.5 0h8.6" stroke="#9244ff"/><path d="M1237.5 0h8.6" stroke="#a340ff"/><path d="M1245.5 0h8.6" stroke="#b43bff"/><path d="M1253.5 0h8.6" stroke="#c437ff"/><path d="M1261.5 0h8.6" stroke="#d533ff"/><path d="M1269.5 0h8.6" stroke="#e72fff"/><path d="M1277.5 0h8.6" stroke="#f82aff"/><path d="M1285.5 0h8.6" stroke="#ff24f5"/><path d="M1293.5 0h8.6" stroke="#ff1ee5"/><path d="M1301.5 0h8.6" stroke="#ff18d8"/><path d="M1309.5 0h8.6" stroke="#ff13cb"/><path d="M1317.5 0h8.6" stroke="#ff0fc0"/><path d="M1325.5 0h8.6" stroke="#ff0ab6"/><path d="M1333.5 0h8.6" stroke="#ff07ad"/><path d="M1341.5 0h8.6" stroke="#ff03a5"/><path d="M1349.5 0h8.6" stroke="#ff009d"/><path d="M1357.5 0h8.6" stroke="#ff0096"/></g><g transform="translate(0,264.2)"><path d="M1149.5 0h8.6" stroke="#0062ff"/><path d="M1157.5 0h8.6" stroke="#035eff"/><path d="M1165.5 0h8.6" stroke="#115aff"/><path d="M1173.5 0h8.6" stroke="#2057ff"/><path d="M1181.5 0h8.6" stroke="#2e53ff"/><path d="M1189.5 0h8.6" stroke="#3d4fff"/><path d="M1197.5 0h8.6" stroke="#4c4cff"/><path d="M1205.5 0h8.6" stroke="#5a48ff"/><path d="M1213.5 0h8.6" stroke="#6a44ff"/><path d="M1221.5 0h8.6" stroke="#7940ff"/><path d="M1229.5 0h8.6" stroke="#883cff"/><path d="M1237.5 0h8.6" stroke="#9838ff"/><path d="M1245.5 0h8.6" stroke="#a734ff"/><path d="M1253.5 0h8.6" stroke="#b730ff"/><path d="M1261.5 0h8.6" stroke="#c72cff"/><path d="M1269.5 0h8.6" stroke="#d728ff"/><path d="M1277.5 0h8.6" stroke="#e823ff"/><path d="M1285.5 0h8.6" stroke="#f81fff"/><path d="M1293.5 0h8.6" stroke="#ff1af5"/><path d="M1301.5 0h8.6" stroke="#ff14e7"/><path d="M1309.5 0h8.6" stroke="#ff10d9"/><path d="M1317.5 0h8.6" stroke="#ff0bce"/><path d="M1325.5 0h8.6" stroke="#ff07c3"/><path d="M1333.5 0h8.6" stroke="#ff04b9"/><path d="M1341.5 0h8.6" stroke="#ff00b0"/><path d="M1349.5 0h8.6" stroke="#ff00a8"/></g><g transform="translate(0,272.2)"><path d="M1157.5 0h8.6" stroke="#0156ff"/><path d="M1165.5 0h8.6" stroke="#0e52ff"/><path d="M1173.5 0h8.6" stroke="#1c4fff"/><path d="M1181.5 0h8.6" stroke="#2a4bff"/><path d="M1189.5 0h8.6" stroke="#3847ff"/><path d="M1197.5 0h8.6" stroke="#4644ff"/><path d="M1205.5 0h8.6" stroke="#5440ff"/><path d="M1213.5 0h8.6" stroke="#623cff"/><path d="M1221.5 0h8.6" stroke="#7039ff"/><path d="M1229.5 0h8.6" stroke="#7f35ff"/><path d="M1237.5 0h8.6" stroke="#8e31ff"/><path d="M1245.5 0h8.6" stroke="#9c2dff"/><path d="M1253.5 0h8.6" stroke="#ab29ff"/><path d="M1261.5 0h8.6" stroke="#bb25ff"/><path d="M1269.5 0h8.6" stroke="#ca22ff"/><path d="M1277.5 0h8.6" stroke="#d91eff"/><path d="M1285.5 0h8.6" stroke="#e919ff"/><path d="M1293.5 0h8.6" stroke="#f915ff"/><path d="M1301.5 0h8.6" stroke="#ff11f6"/><path d="M1309.5 0h8.6" stroke="#ff0ce8"/><path d="M1317.5 0h8.6" stroke="#ff08db"/><path d="M1325.5 0h8.6" stroke="#ff04d0"/><path d="M1333.5 0h8.6" stroke="#ff00c5"/><path d="M1341.5 0h8.6" stroke="#ff00bc"/></g><g transform="translate(0,280.2)"><path d="M1157.5 0h8.6" stroke="#004eff"/><path d="M1165.5 0h8.6" stroke="#0b4bff"/><path d="M1173.5 0h8.6" stroke="#1847ff"/><path d="M1181.5 0h8.6" stroke="#2644ff"/><path d="M1189.5 0h8.6" stroke="#3340ff"/><path d="M1197.5 0h8.6" stroke="#403dff"/><path d="M1205.5 0h8.6" stroke="#4e39ff"/><path d="M1213.5 0h8.6" stroke="#5b36ff"/><path d="M1221.5 0h8.6" stroke="#6932ff"/><path d="M1229.5 0h8.6" stroke="#772fff"/><path d="M1237.5 0h8.6" stroke="#852bff"/><path d="M1245.5 0h8.6" stroke="#9327ff"/><path d="M1253.5 0h8.6" stroke="#a124ff"/><path d="M1261.5 0h8.6" stroke="#af20ff"/><path d="M1269.5 0h8.6" stroke="#be1cff"/><path d="M1277.5 0h8.6" stroke="#cc18ff"/><path d="M1285.5 0h8.6" stroke="#db14ff"/><path d="M1293.5 0h8.6" stroke="#ea10ff"/><path d="M1301.5 0h8.6" stroke="#f90cff"/><path d="M1309.5 0h8.6" stroke="#ff08f6"/><path d="M1317.5 0h8.6" stroke="#ff04e9"/><path d="M1325.5 0h8.6" stroke="#f0d"/><path d="M1333.5 0h8.6" stroke="#ff00d1"/></g><g transform="translate(0,288.2)"><path d="M1157.5 0h8.6" stroke="#0047ff"/><path d="M1165.5 0h8.6" stroke="#0944ff"/><path d="M1173.5 0h8.6" stroke="#1541ff"/><path d="M1181.5 0h8.6" stroke="#223dff"/><path d="M1189.5 0h8.6" stroke="#2e3aff"/><path d="M1197.5 0h8.6" stroke="#3b37ff"/><path d="M1205.5 0h8.6" stroke="#4833ff"/><path d="M1213.5 0h8.6" stroke="#5530ff"/><path d="M1221.5 0h8.6" stroke="#622cff"/><path d="M1229.5 0h8.6" stroke="#6f29ff"/><path d="M1237.5 0h8.6" stroke="#7c25ff"/><path d="M1245.5 0h8.6" stroke="#8a22ff"/><path d="M1253.5 0h8.6" stroke="#971eff"/><path d="M1261.5 0h8.6" stroke="#a51bff"/><path d="M1269.5 0h8.6" stroke="#b317ff"/><path d="M1277.5 0h8.6" stroke="#c013ff"/><path d="M1285.5 0h8.6" stroke="#ce10ff"/><path d="M1293.5 0h8.6" stroke="#dd0cff"/><path d="M1301.5 0h8.6" stroke="#eb08ff"/><path d="M1309.5 0h8.6" stroke="#f904ff"/><path d="M1317.5 0h8.6" stroke="#ff01f7"/><path d="M1325.5 0h8.6" stroke="#ff00ea"/></g><g transform="translate(0,296.2)"><path d="M1157.5 0h8.6" stroke="#0041ff"/><path d="M1165.5 0h8.6" stroke="#073eff"/><path d="M1173.5 0h8.6" stroke="#133bff"/><path d="M1181.5 0h8.6" stroke="#1e37ff"/><path d="M1189.5 0h8.6" stroke="#2b34ff"/><path d="M1197.5 0h8.6" stroke="#3731ff"/><path d="M1205.5 0h8.6" stroke="#432eff"/><path d="M1213.5 0h8.6" stroke="#4f2aff"/><path d="M1221.5 0h8.6" stroke="#5c27ff"/><path d="M1229.5 0h8.6" stroke="#6824ff"/><path d="M1237.5 0h8.6" stroke="#7520ff"/><path d="M1245.5 0h8.6" stroke="#821dff"/><path d="M1253.5 0h8.6" stroke="#8e19ff"/><path d="M1261.5 0h8.6" stroke="#9b16ff"/><path d="M1269.5 0h8.6" stroke="#a912ff"/><path d="M1277.5 0h8.6" stroke="#b60fff"/><path d="M1285.5 0h8.6" stroke="#c30bff"/><path d="M1293.5 0h8.6" stroke="#d008ff"/><path d="M1301.5 0h8.6" stroke="#de04ff"/><path d="M1309.5 0h8.6" stroke="#ec01ff"/><path d="M1317.5 0h8.6" stroke="#f900ff"/></g><g transform="translate(0,304.2)"><path d="M1157.5 0h8.6" stroke="#003bff"/><path d="M1165.5 0h8.6" stroke="#0538ff"/><path d="M1173.5 0h8.6" stroke="#1035ff"/><path d="M1181.5 0h8.6" stroke="#1b32ff"/><path d="M1189.5 0h8.6" stroke="#272fff"/><path d="M1197.5 0h8.6" stroke="#332cff"/><path d="M1205.5 0h8.6" stroke="#3e28ff"/><path d="M1213.5 0h8.6" stroke="#4a25ff"/><path d="M1221.5 0h8.6" stroke="#5622ff"/><path d="M1229.5 0h8.6" stroke="#621fff"/><path d="M1237.5 0h8.6" stroke="#6e1cff"/><path d="M1245.5 0h8.6" stroke="#7a18ff"/><path d="M1253.5 0h8.6" stroke="#8615ff"/><path d="M1261.5 0h8.6" stroke="#9312ff"/><path d="M1269.5 0h8.6" stroke="#9f0eff"/><path d="M1277.5 0h8.6" stroke="#ac0bff"/><path d="M1285.5 0h8.6" stroke="#b908ff"/><path d="M1293.5 0h8.6" stroke="#c504ff"/><path d="M1301.5 0h8.6" stroke="#d201ff"/><path d="M1309.5 0h8.6" stroke="#df00ff"/></g><g transform="translate(0,312.2)"><path d="M1157.5 0h8.6" stroke="#0036ff"/><path d="M1165.5 0h8.6" stroke="#0333ff"/><path d="M1173.5 0h8.6" stroke="#0e30ff"/><path d="M1181.5 0h8.6" stroke="#192dff"/><path d="M1189.5 0h8.6" stroke="#242aff"/><path d="M1197.5 0h8.6" stroke="#2f27ff"/><path d="M1205.5 0h8.6" stroke="#3a24ff"/><path d="M1213.5 0h8.6" stroke="#4521ff"/><path d="M1221.5 0h8.6" stroke="#511eff"/><path d="M1229.5 0h8.6" stroke="#5c1aff"/><path d="M1237.5 0h8.6" stroke="#6817ff"/><path d="M1245.5 0h8.6" stroke="#7314ff"/><path d="M1253.5 0h8.6" stroke="#7f11ff"/><path d="M1261.5 0h8.6" stroke="#8b0eff"/><path d="M1269.5 0h8.6" stroke="#970bff"/><path d="M1277.5 0h8.6" stroke="#a307ff"/><path d="M1285.5 0h8.6" stroke="#af04ff"/><path d="M1293.5 0h8.6" stroke="#bb01ff"/><path d="M1301.5 0h8.6" stroke="#c800ff"/></g><g transform="translate(0,320.2)"><path d="M1165.5 0h8.6" stroke="#012eff"/><path d="M1173.5 0h8.6" stroke="#0b2bff"/><path d="M1181.5 0h8.6" stroke="#1628ff"/><path d="M1189.5 0h8.6" stroke="#2125ff"/><path d="M1197.5 0h8.6" stroke="#2b22ff"/><path d="M1205.5 0h8.6" stroke="#361fff"/><path d="M1213.5 0h8.6" stroke="#411cff"/><path d="M1221.5 0h8.6" stroke="#4c19ff"/><path d="M1229.5 0h8.6" stroke="#5716ff"/><path d="M1237.5 0h8.6" stroke="#6213ff"/><path d="M1245.5 0h8.6" stroke="#6d10ff"/><path d="M1253.5 0h8.6" stroke="#780dff"/><path d="M1261.5 0h8.6" stroke="#840aff"/><path d="M1269.5 0h8.6" stroke="#8f07ff"/><path d="M1277.5 0h8.6" stroke="#9b04ff"/><path d="M1285.5 0h8.6" stroke="#a601ff"/><path d="M1293.5 0h8.6" stroke="#b200ff"/></g><g transform="translate(0,328.2)"><path d="M1165.5 0h8.6" stroke="#0029ff"/><path d="M1173.5 0h8.6" stroke="#0927ff"/><path d="M1181.5 0h8.6" stroke="#1324ff"/><path d="M1189.5 0h8.6" stroke="#1e21ff"/><path d="M1197.5 0h8.6" stroke="#281eff"/><path d="M1205.5 0h8.6" stroke="#321bff"/><path d="M1213.5 0h8.6" stroke="#3d18ff"/><path d="M1221.5 0h8.6" stroke="#4716ff"/><path d="M1229.5 0h8.6" stroke="#5213ff"/><path d="M1237.5 0h8.6" stroke="#5d10ff"/><path d="M1245.5 0h8.6" stroke="#670dff"/><path d="M1253.5 0h8.6" stroke="#720aff"/><path d="M1261.5 0h8.6" stroke="#7d07ff"/><path d="M1269.5 0h8.6" stroke="#8804ff"/><path d="M1277.5 0h8.6" stroke="#9301ff"/><path d="M1285.5 0h8.6" stroke="#9e00ff"/></g><g transform="translate(0,336.2)"><path d="M1165.5 0h8.6" stroke="#0025ff"/><path d="M1173.5 0h8.6" stroke="#0722ff"/><path d="M1181.5 0h8.6" stroke="#1120ff"/><path d="M1189.5 0h8.6" stroke="#1b1dff"/><path d="M1197.5 0h8.6" stroke="#251aff"/><path d="M1205.5 0h8.6" stroke="#2f18ff"/><path d="M1213.5 0h8.6" stroke="#3915ff"/><path d="M1221.5 0h8.6" stroke="#4312ff"/><path d="M1229.5 0h8.6" stroke="#4d0fff"/><path d="M1237.5 0h8.6" stroke="#580cff"/><path d="M1245.5 0h8.6" stroke="#6209ff"/><path d="M1253.5 0h8.6" stroke="#6c07ff"/><path d="M1261.5 0h8.6" stroke="#7704ff"/><path d="M1269.5 0h8.6" stroke="#8101ff"/><path d="M1277.5 0h8.6" stroke="#8c00ff"/></g><g transform="translate(0,344.2)"><path d="M1165.5 0h8.6" stroke="#0021ff"/><path d="M1173.5 0h8.6" stroke="#061fff"/><path d="M1181.5 0h8.6" stroke="#0f1cff"/><path d="M1189.5 0h8.6" stroke="#1919ff"/><path d="M1197.5 0h8.6" stroke="#2217ff"/><path d="M1205.5 0h8.6" stroke="#2c14ff"/><path d="M1213.5 0h8.6" stroke="#3511ff"/><path d="M1221.5 0h8.6" stroke="#3f0fff"/><path d="M1229.5 0h8.6" stroke="#490cff"/><path d="M1237.5 0h8.6" stroke="#5309ff"/><path d="M1245.5 0h8.6" stroke="#5d06ff"/><path d="M1253.5 0h8.6" stroke="#6704ff"/><path d="M1261.5 0h8.6" stroke="#7101ff"/><path d="M1269.5 0h8.6" stroke="#7b00ff"/></g><g transform="translate(0,352.2)"><path d="M1165.5 0h8.6" stroke="#001eff"/><path d="M1173.5 0h8.6" stroke="#041bff"/><path d="M1181.5 0h8.6" stroke="#0d19ff"/><path d="M1189.5 0h8.6" stroke="#1616ff"/><path d="M1197.5 0h8.6" stroke="#2013ff"/><path d="M1205.5 0h8.6" stroke="#2911ff"/><path d="M1213.5 0h8.6" stroke="#320eff"/><path d="M1221.5 0h8.6" stroke="#3c0cff"/><path d="M1229.5 0h8.6" stroke="#4509ff"/><path d="M1237.5 0h8.6" stroke="#4f06ff"/><path d="M1245.5 0h8.6" stroke="#5804ff"/><path d="M1253.5 0h8.6" stroke="#6201ff"/><path d="M1261.5 0h8.6" stroke="#6c00ff"/></g><g transform="translate(0,360.2)"><path d="M1165.5 0h8.6" stroke="#001aff"/><path d="M1173.5 0h8.6" stroke="#0218ff"/><path d="M1181.5 0h8.6" stroke="#0b15ff"/><path d="M1189.5 0h8.6" stroke="#1413ff"/><path d="M1197.5 0h8.6" stroke="#1d10ff"/><path d="M1205.5 0h8.6" stroke="#260eff"/><path d="M1213.5 0h8.6" stroke="#2f0bff"/><path d="M1221.5 0h8.6" stroke="#3809ff"/><path d="M1229.5 0h8.6" stroke="#4106ff"/><path d="M1237.5 0h8.6" stroke="#4b03ff"/><path d="M1245.5 0h8.6" stroke="#5401ff"/><path d="M1253.5 0h8.6" stroke="#5d00ff"/></g><g transform="translate(0,368.2)"><path d="M1165.5 0h8.6" stroke="#0017ff"/><path d="M1173.5 0h8.6" stroke="#0115ff"/><path d="M1181.5 0h8.6" stroke="#0a12ff"/><path d="M1189.5 0h8.6" stroke="#1210ff"/><path d="M1197.5 0h8.6" stroke="#1b0dff"/><path d="M1205.5 0h8.6" stroke="#230bff"/><path d="M1213.5 0h8.6" stroke="#2c08ff"/><path d="M1221.5 0h8.6" stroke="#3506ff"/><path d="M1229.5 0h8.6" stroke="#3e03ff"/><path d="M1237.5 0h8.6" stroke="#4701ff"/><path d="M1245.5 0h8.6" stroke="#5000ff"/></g><g transform="translate(0,376.2)"><path d="M1173.5 0h8.6" stroke="#0012ff"/><path d="M1181.5 0h8.6" stroke="#080fff"/><path d="M1189.5 0h8.6" stroke="#100dff"/><path d="M1197.5 0h8.6" stroke="#190bff"/><path d="M1205.5 0h8.6" stroke="#2108ff"/><path d="M1213.5 0h8.6" stroke="#2a06ff"/><path d="M1221.5 0h8.6" stroke="#3203ff"/><path d="M1229.5 0h8.6" stroke="#3b01ff"/><path d="M1237.5 0h8.6" stroke="#4300ff"/></g><g transform="translate(0,384.2)"><path d="M1173.5 0h8.6" stroke="#000fff"/><path d="M1181.5 0h8.6" stroke="#060dff"/><path d="M1189.5 0h8.6" stroke="#0e0aff"/><path d="M1197.5 0h8.6" stroke="#1708ff"/><path d="M1205.5 0h8.6" stroke="#1f06ff"/><path d="M1213.5 0h8.6" stroke="#2703ff"/><path d="M1221.5 0h8.6" stroke="#2f01ff"/><path d="M1229.5 0h8.6" stroke="#3800ff"/></g><g transform="translate(0,392.2)"><path d="M1173.5 0h8.6" stroke="#000cff"/><path d="M1181.5 0h8.6" stroke="#050aff"/><path d="M1189.5 0h8.6" stroke="#0d08ff"/><path d="M1197.5 0h8.6" stroke="#1506ff"/><path d="M1205.5 0h8.6" stroke="#1d03ff"/><path d="M1213.5 0h8.6" stroke="#2501ff"/><path d="M1221.5 0h8.6" stroke="#2d00ff"/></g><g transform="translate(0,400.2)"><path d="M1173.5 0h8.6" stroke="#000aff"/><path d="M1181.5 0h8.6" stroke="#0408ff"/><path d="M1189.5 0h8.6" stroke="#0b05ff"/><path d="M1197.5 0h8.6" stroke="#1303ff"/><path d="M1205.5 0h8.6" stroke="#1b01ff"/><path d="M1213.5 0h8.6" stroke="#20f"/></g><g transform="translate(0,408.2)"><path d="M1173.5 0h8.6" stroke="#0007ff"/><path d="M1181.5 0h8.6" stroke="#0205ff"/><path d="M1189.5 0h8.6" stroke="#0a03ff"/><path d="M1197.5 0h8.6" stroke="#1101ff"/><path d="M1205.5 0h8.6" stroke="#1900ff"/></g><g transform="translate(0,416.2)"><path d="M1173.5 0h8.6" stroke="#0005ff"/><path d="M1181.5 0h8.6" stroke="#0103ff"/><path d="M1189.5 0h8.6" stroke="#0801ff"/><path d="M1197.5 0h8.6" stroke="#1000ff"/></g><g transform="translate(0,424.2)"><path d="M1181.5 0h8.6" stroke="#0001ff"/><path d="M1189.5 0h8.6" stroke="#0700ff"/></g><g transform="translate(0,432.2)"><path d="M1181.5 0h8.6" stroke="#00f"/></g></g></g><text x="1299" y="72" font-size="14" text-anchor="middle" fill="#dcdcdc" font-weight="normal" >CIE 1976 u'v'</text><path d="M1005.8 76.7H1624.1V553.3" stroke="#a8a8a8" fill="none" stroke-width="1.3"/><path d="M1005.8 76.2V553.3H1624.6" stroke="#cccccc" fill="none" stroke-width="1.6"/><path d="M1005.8 553.3V557.3" stroke="#cccccc" stroke-width="1.6"/><text x="1005.8" y="574.3" font-size="14" text-anchor="middle" fill="#dcdcdc" font-weight="normal" >0</text><path d="M1001.8 553.3H1005.8" stroke="#cccccc" stroke-width="1.6"/><text x="1001.3" y="558.5" font-size="14" text-anchor="end" fill="#dcdcdc" font-weight="normal" >0</text><path d="M1057.3 553.3V557.3" stroke="#cccccc" stroke-width="1.6"/><text x="1057.3" y="574.3" font-size="14" text-anchor="middle" fill="#dcdcdc" font-weight="normal" >0,05</text><path d="M1001.8 513.7H1005.8" stroke="#cccccc" stroke-width="1.6"/><text x="1001.3" y="518.9" font-size="14" text-anchor="end" fill="#dcdcdc" font-weight="normal" >0,05</text><path d="M1108.8 553.3V557.3" stroke="#cccccc" stroke-width="1.6"/><text x="1108.8" y="574.3" font-size="14" text-anchor="middle" fill="#dcdcdc" font-weight="normal" >0,1</text><path d="M1001.8 474.1H1005.8" stroke="#cccccc" stroke-width="1.6"/><text x="1001.3" y="479.3" font-size="14" text-anchor="end" fill="#dcdcdc" font-weight="normal" >0,1</text><path d="M1160.3 553.3V557.3" stroke="#cccccc" stroke-width="1.6"/><text x="1160.3" y="574.3" font-size="14" text-anchor="middle" fill="#dcdcdc" font-weight="normal" >0,15</text><path d="M1001.8 434.5H1005.8" stroke="#cccccc" stroke-width="1.6"/><text x="1001.3" y="439.7" font-size="14" text-anchor="end" fill="#dcdcdc" font-weight="normal" >0,15</text><path d="M1211.8 553.3V557.3" stroke="#cccccc" stroke-width="1.6"/><text x="1211.8" y="574.3" font-size="14" text-anchor="middle" fill="#dcdcdc" font-weight="normal" >0,2</text><path d="M1001.8 394.9H1005.8" stroke="#cccccc" stroke-width="1.6"/><text x="1001.3" y="400.1" font-size="14" text-anchor="end" fill="#dcdcdc" font-weight="normal" >0,2</text><path d="M1263.3 553.3V557.3" stroke="#cccccc" stroke-width="1.6"/><text x="1263.3" y="574.3" font-size="14" text-anchor="middle" fill="#dcdcdc" font-weight="normal" >0,25</text><path d="M1001.8 355.3H1005.8" stroke="#cccccc" stroke-width="1.6"/><text x="1001.3" y="360.5" font-size="14" text-anchor="end" fill="#dcdcdc" font-weight="normal" >0,25</text><path d="M1314.8 553.3V557.3" stroke="#cccccc" stroke-width="1.6"/><text x="1314.8" y="574.3" font-size="14" text-anchor="middle" fill="#dcdcdc" font-weight="normal" >0,3</text><path d="M1001.8 315.7H1005.8" stroke="#cccccc" stroke-width="1.6"/><text x="1001.3" y="320.9" font-size="14" text-anchor="end" fill="#dcdcdc" font-weight="normal" >0,3</text><path d="M1366.3 553.3V557.3" stroke="#cccccc" stroke-width="1.6"/><text x="1366.3" y="574.3" font-size="14" text-anchor="middle" fill="#dcdcdc" font-weight="normal" >0,35</text><path d="M1001.8 276.1H1005.8" stroke="#cccccc" stroke-width="1.6"/><text x="1001.3" y="281.3" font-size="14" text-anchor="end" fill="#dcdcdc" font-weight="normal" >0,35</text><path d="M1417.8 553.3V557.3" stroke="#cccccc" stroke-width="1.6"/><text x="1417.8" y="574.3" font-size="14" text-anchor="middle" fill="#dcdcdc" font-weight="normal" >0,4</text><path d="M1001.8 236.5H1005.8" stroke="#cccccc" stroke-width="1.6"/><text x="1001.3" y="241.7" font-size="14" text-anchor="end" fill="#dcdcdc" font-weight="normal" >0,4</text><path d="M1469.3 553.3V557.3" stroke="#cccccc" stroke-width="1.6"/><text x="1469.3" y="574.3" font-size="14" text-anchor="middle" fill="#dcdcdc" font-weight="normal" >0,45</text><path d="M1001.8 196.9H1005.8" stroke="#cccccc" stroke-width="1.6"/><text x="1001.3" y="202.1" font-size="14" text-anchor="end" fill="#dcdcdc" font-weight="normal" >0,45</text><path d="M1520.8 553.3V557.3" stroke="#cccccc" stroke-width="1.6"/><text x="1520.8" y="574.3" font-size="14" text-anchor="middle" fill="#dcdcdc" font-weight="normal" >0,5</text><path d="M1001.8 157.3H1005.8" stroke="#cccccc" stroke-width="1.6"/><text x="1001.3" y="162.5" font-size="14" text-anchor="end" fill="#dcdcdc" font-weight="normal" >0,5</text><path d="M1572.3 553.3V557.3" stroke="#cccccc" stroke-width="1.6"/><text x="1572.3" y="574.3" font-size="14" text-anchor="middle" fill="#dcdcdc" font-weight="normal" >0,55</text><path d="M1001.8 117.7H1005.8" stroke="#cccccc" stroke-width="1.6"/><text x="1001.3" y="122.9" font-size="14" text-anchor="end" fill="#dcdcdc" font-weight="normal" >0,55</text><g fill="none" stroke="#fff" stroke-width="1.4"><rect x="1249.8" y="167.1" width="12.4" height="12.4"/><rect x="1301.1" y="157.4" width="12.4" height="12.4"/><rect x="1348.8" y="150.7" width="12.4" height="12.4"/><rect x="1401.4" y="141.8" width="12.4" height="12.4"/><rect x="1463.3" y="131.5" width="12.4" height="12.4"/><rect x="1182.7" y="154.2" width="12.4" height="12.4"/><rect x="1165.6" y="137.1" width="12.4" height="12.4"/><rect x="1151.2" y="122.8" width="12.4" height="12.4"/><rect x="1139.0" y="110.5" width="12.4" height="12.4"/><rect x="1128.3" y="99.9" width="12.4" height="12.4"/><rect x="1199.7" y="203.7" width="12.4" height="12.4"/><rect x="1197.2" y="239.2" width="12.4" height="12.4"/><rect x="1193.3" y="282.7" width="12.4" height="12.4"/><rect x="1188.3" y="337.6" width="12.4" height="12.4"/><rect x="1180.3" y="420.7" width="12.4" height="12.4"/><rect x="1190.8" y="176.9" width="12.4" height="12.4"/><rect x="1178.4" y="178.9" width="12.4" height="12.4"/><rect x="1166.2" y="181.0" width="12.4" height="12.4"/><rect x="1154.1" y="183.0" width="12.4" height="12.4"/><rect x="1142.1" y="185.0" width="12.4" height="12.4"/><rect x="1219.8" y="190.1" width="12.4" height="12.4"/><rect x="1238.3" y="208.7" width="12.4" height="12.4"/><rect x="1256.6" y="228.5" width="12.4" height="12.4"/><rect x="1281.6" y="253.7" width="12.4" height="12.4"/><rect x="1313.2" y="283.7" width="12.4" height="12.4"/><rect x="1205.0" y="158.0" width="12.4" height="12.4"/><rect x="1206.3" y="142.9" width="12.4" height="12.4"/><rect x="1207.6" y="130.0" width="12.4" height="12.4"/><rect x="1208.6" y="119.0" width="12.4" height="12.4"/><rect x="1209.6" y="107.5" width="12.4" height="12.4"/></g><rect x="1203.1" y="174.5" width="13" height="13" fill="none" stroke="#000" stroke-width="1.6"/><g stroke="#000" stroke-width="1.1"><circle cx="1254.8" cy="178.4" r="3.9" fill="rgb(183,155,155)"/><circle cx="1324.5" cy="163.6" r="3.9" fill="rgb(185,121,121)"/><circle cx="1379.8" cy="151.3" r="3.9" fill="rgb(186,84,84)"/><circle cx="1426.1" cy="141.3" r="3.9" fill="rgb(187,45,45)"/><circle cx="1460.3" cy="134.4" r="3.9" fill="rgb(188,5,5)"/><circle cx="1183.5" cy="160.8" r="3.9" fill="rgb(155,183,155)"/><circle cx="1166.4" cy="135.9" r="3.9" fill="rgb(121,185,121)"/><circle cx="1152.4" cy="118.7" r="3.9" fill="rgb(84,186,84)"/><circle cx="1144.6" cy="108.2" r="3.9" fill="rgb(45,187,45)"/><circle cx="1140.5" cy="104.3" r="3.9" fill="rgb(5,188,5)"/><circle cx="1200.9" cy="229.3" r="3.9" fill="rgb(155,155,183)"/><circle cx="1198.4" cy="279.2" r="3.9" fill="rgb(121,121,185)"/><circle cx="1194.2" cy="337.6" r="3.9" fill="rgb(84,84,186)"/><circle cx="1190.5" cy="386.7" r="3.9" fill="rgb(45,45,187)"/><circle cx="1187.5" cy="423.5" r="3.9" fill="rgb(5,5,188)"/><circle cx="1191.4" cy="191.4" r="3.9" fill="rgb(155,183,183)"/><circle cx="1179.5" cy="193.8" r="3.9" fill="rgb(121,185,185)"/><circle cx="1169.4" cy="196.5" r="3.9" fill="rgb(84,186,186)"/><circle cx="1160.6" cy="199.4" r="3.9" fill="rgb(45,187,187)"/><circle cx="1154.6" cy="200.5" r="3.9" fill="rgb(5,188,188)"/><circle cx="1219.4" cy="211.2" r="3.9" fill="rgb(183,155,183)"/><circle cx="1240.3" cy="237.4" r="3.9" fill="rgb(185,121,185)"/><circle cx="1260.3" cy="265.3" r="3.9" fill="rgb(186,84,186)"/><circle cx="1282.4" cy="295.5" r="3.9" fill="rgb(187,45,187)"/><circle cx="1292.8" cy="312.3" r="3.9" fill="rgb(188,5,188)"/><circle cx="1206.5" cy="166.5" r="3.9" fill="rgb(183,183,155)"/><circle cx="1207.5" cy="146.5" r="3.9" fill="rgb(185,185,121)"/><circle cx="1208.7" cy="129.3" r="3.9" fill="rgb(186,186,84)"/><circle cx="1210.6" cy="117.7" r="3.9" fill="rgb(187,187,45)"/><circle cx="1212.6" cy="110.9" r="3.9" fill="rgb(188,188,5)"/><circle cx="1204.4" cy="187.7" r="3.9" fill="#fff"/></g><defs><filter id="bl2" color-interpolation-filters="sRGB" x="-10%" y="-10%" width="120%" height="120%"><feGaussianBlur stdDeviation="6"/></filter><clipPath id="cpi"><rect x="1413" y="406" width="206" height="139"/></clipPath><clipPath id="cpi2" clip-path="url(#cpi)"><path d="M1413.0 420.4L1619.0 530.8L1619.0 545.0L1413.0 545.0Z"/></clipPath></defs><g clip-path="url(#cpi)"><g filter="url(#bl2)" stroke-width="10.6" fill="none"><g transform="translate(0,391)"><path d="M1392.7 0h10.6" stroke="#639900"/><path d="M1402.7 0h10.6" stroke="#659900"/><path d="M1412.7 0h10.6" stroke="#689900"/><path d="M1422.7 0h10.6" stroke="#6b9900"/><path d="M1432.7 0h10.6" stroke="#6d9900"/><path d="M1442.7 0h10.6" stroke="#709900"/><path d="M1452.7 0h10.6" stroke="#739900"/><path d="M1462.7 0h10.6" stroke="#759900"/><path d="M1472.7 0h10.6" stroke="#789900"/><path d="M1482.7 0h10.6" stroke="#7b9900"/><path d="M1492.7 0h10.6" stroke="#7e9900"/><path d="M1502.7 0h10.6" stroke="#809900"/><path d="M1512.7 0h10.6" stroke="#839900"/><path d="M1522.7 0h10.6" stroke="#869900"/><path d="M1532.7 0h10.6" stroke="#899900"/><path d="M1542.7 0h10.6" stroke="#8c9900"/><path d="M1552.7 0h10.6" stroke="#8f9900"/><path d="M1562.7 0h10.6" stroke="#929900"/><path d="M1572.7 0h10.6" stroke="#959900"/><path d="M1582.7 0h10.6" stroke="#989900"/><path d="M1592.7 0h10.6" stroke="#999700"/><path d="M1602.7 0h10.6" stroke="#999400"/><path d="M1612.7 0h10.6" stroke="#999100"/><path d="M1622.7 0h10.6" stroke="#998f00"/><path d="M1632.7 0h10.6" stroke="#998c00"/></g><g transform="translate(0,401)"><path d="M1392.7 0h10.6" stroke="#659900"/><path d="M1402.7 0h10.6" stroke="#679900"/><path d="M1412.7 0h10.6" stroke="#6a9900"/><path d="M1422.7 0h10.6" stroke="#6d9900"/><path d="M1432.7 0h10.6" stroke="#6f9900"/><path d="M1442.7 0h10.6" stroke="#729900"/><path d="M1452.7 0h10.6" stroke="#759900"/><path d="M1462.7 0h10.6" stroke="#789900"/><path d="M1472.7 0h10.6" stroke="#7a9900"/><path d="M1482.7 0h10.6" stroke="#7d9900"/><path d="M1492.7 0h10.6" stroke="#809900"/><path d="M1502.7 0h10.6" stroke="#839900"/><path d="M1512.7 0h10.6" stroke="#869900"/><path d="M1522.7 0h10.6" stroke="#899900"/><path d="M1532.7 0h10.6" stroke="#8c9900"/><path d="M1542.7 0h10.6" stroke="#8e9900"/><path d="M1552.7 0h10.6" stroke="#919900"/><path d="M1562.7 0h10.6" stroke="#949900"/><path d="M1572.7 0h10.6" stroke="#979900"/><path d="M1582.7 0h10.6" stroke="#999700"/><path d="M1592.7 0h10.6" stroke="#999500"/><path d="M1602.7 0h10.6" stroke="#999200"/><path d="M1612.7 0h10.6" stroke="#998f00"/><path d="M1622.7 0h10.6" stroke="#998c00"/><path d="M1632.7 0h10.6" stroke="#998a00"/></g><g transform="translate(0,411)"><path d="M1392.7 0h10.6" stroke="#679900"/><path d="M1402.7 0h10.6" stroke="#699900"/><path d="M1412.7 0h10.6" stroke="#6c9900"/><path d="M1422.7 0h10.6" stroke="#6f9900"/><path d="M1432.7 0h10.6" stroke="#719900"/><path d="M1442.7 0h10.6" stroke="#749900"/><path d="M1452.7 0h10.6" stroke="#790"/><path d="M1462.7 0h10.6" stroke="#7a9900"/><path d="M1472.7 0h10.6" stroke="#7d9900"/><path d="M1482.7 0h10.6" stroke="#7f9900"/><path d="M1492.7 0h10.6" stroke="#829900"/><path d="M1502.7 0h10.6" stroke="#859900"/><path d="M1512.7 0h10.6" stroke="#890"/><path d="M1522.7 0h10.6" stroke="#8b9900"/><path d="M1532.7 0h10.6" stroke="#8e9900"/><path d="M1542.7 0h10.6" stroke="#919900"/><path d="M1552.7 0h10.6" stroke="#949900"/><path d="M1562.7 0h10.6" stroke="#979900"/><path d="M1572.7 0h10.6" stroke="#999800"/><path d="M1582.7 0h10.6" stroke="#999500"/><path d="M1592.7 0h10.6" stroke="#999200"/><path d="M1602.7 0h10.6" stroke="#998f00"/><path d="M1612.7 0h10.6" stroke="#998c00"/><path d="M1622.7 0h10.6" stroke="#998a00"/><path d="M1632.7 0h10.6" stroke="#998700"/></g><g transform="translate(0,421)"><path d="M1392.7 0h10.6" stroke="#699901"/><path d="M1402.7 0h10.6" stroke="#6b9900"/><path d="M1412.7 0h10.6" stroke="#6e9900"/><path d="M1422.7 0h10.6" stroke="#719900"/><path d="M1432.7 0h10.6" stroke="#749900"/><path d="M1442.7 0h10.6" stroke="#769900"/><path d="M1452.7 0h10.6" stroke="#799900"/><path d="M1462.7 0h10.6" stroke="#7c9900"/><path d="M1472.7 0h10.6" stroke="#7f9900"/><path d="M1482.7 0h10.6" stroke="#829900"/><path d="M1492.7 0h10.6" stroke="#859900"/><path d="M1502.7 0h10.6" stroke="#890"/><path d="M1512.7 0h10.6" stroke="#8b9900"/><path d="M1522.7 0h10.6" stroke="#8e9900"/><path d="M1532.7 0h10.6" stroke="#919900"/><path d="M1542.7 0h10.6" stroke="#949900"/><path d="M1552.7 0h10.6" stroke="#979900"/><path d="M1562.7 0h10.6" stroke="#999800"/><path d="M1572.7 0h10.6" stroke="#999500"/><path d="M1582.7 0h10.6" stroke="#999200"/><path d="M1592.7 0h10.6" stroke="#998f00"/><path d="M1602.7 0h10.6" stroke="#998d00"/><path d="M1612.7 0h10.6" stroke="#998a00"/><path d="M1622.7 0h10.6" stroke="#998700"/><path d="M1632.7 0h10.6" stroke="#998500"/></g><g transform="translate(0,431)"><path d="M1392.7 0h10.6" stroke="#6b9902"/><path d="M1402.7 0h10.6" stroke="#6d9902"/><path d="M1412.7 0h10.6" stroke="#709901"/><path d="M1422.7 0h10.6" stroke="#739900"/><path d="M1432.7 0h10.6" stroke="#769900"/><path d="M1442.7 0h10.6" stroke="#799900"/><path d="M1452.7 0h10.6" stroke="#7c9900"/><path d="M1462.7 0h10.6" stroke="#7e9900"/><path d="M1472.7 0h10.6" stroke="#819900"/><path d="M1482.7 0h10.6" stroke="#849900"/><path d="M1492.7 0h10.6" stroke="#879900"/><path d="M1502.7 0h10.6" stroke="#8a9900"/><path d="M1512.7 0h10.6" stroke="#8d9900"/><path d="M1522.7 0h10.6" stroke="#909900"/><path d="M1532.7 0h10.6" stroke="#939900"/><path d="M1542.7 0h10.6" stroke="#969900"/><path d="M1552.7 0h10.6" stroke="#999800"/><path d="M1562.7 0h10.6" stroke="#999500"/><path d="M1572.7 0h10.6" stroke="#999200"/><path d="M1582.7 0h10.6" stroke="#999000"/><path d="M1592.7 0h10.6" stroke="#998d00"/><path d="M1602.7 0h10.6" stroke="#998a00"/><path d="M1612.7 0h10.6" stroke="#998700"/><path d="M1622.7 0h10.6" stroke="#998500"/><path d="M1632.7 0h10.6" stroke="#998200"/></g><g transform="translate(0,441)"><path d="M1412.7 0h10.6" stroke="#729902"/><path d="M1422.7 0h10.6" stroke="#759901"/><path d="M1432.7 0h10.6" stroke="#789901"/><path d="M1442.7 0h10.6" stroke="#7b9900"/><path d="M1452.7 0h10.6" stroke="#7e9900"/><path d="M1462.7 0h10.6" stroke="#819900"/><path d="M1472.7 0h10.6" stroke="#849900"/><path d="M1482.7 0h10.6" stroke="#879900"/><path d="M1492.7 0h10.6" stroke="#8a9900"/><path d="M1502.7 0h10.6" stroke="#8d9900"/><path d="M1512.7 0h10.6" stroke="#909900"/><path d="M1522.7 0h10.6" stroke="#939900"/><path d="M1532.7 0h10.6" stroke="#969900"/><path d="M1542.7 0h10.6" stroke="#990"/><path d="M1552.7 0h10.6" stroke="#999600"/><path d="M1562.7 0h10.6" stroke="#999300"/><path d="M1572.7 0h10.6" stroke="#999000"/><path d="M1582.7 0h10.6" stroke="#998d00"/><path d="M1592.7 0h10.6" stroke="#998a00"/><path d="M1602.7 0h10.6" stroke="#980"/><path d="M1612.7 0h10.6" stroke="#998500"/><path d="M1622.7 0h10.6" stroke="#998200"/><path d="M1632.7 0h10.6" stroke="#998000"/></g><g transform="translate(0,451)"><path d="M1432.7 0h10.6" stroke="#7b9902"/><path d="M1442.7 0h10.6" stroke="#7d9901"/><path d="M1452.7 0h10.6" stroke="#809901"/><path d="M1462.7 0h10.6" stroke="#839900"/><path d="M1472.7 0h10.6" stroke="#869900"/><path d="M1482.7 0h10.6" stroke="#899900"/><path d="M1492.7 0h10.6" stroke="#8c9900"/><path d="M1502.7 0h10.6" stroke="#909900"/><path d="M1512.7 0h10.6" stroke="#939900"/><path d="M1522.7 0h10.6" stroke="#969900"/><path d="M1532.7 0h10.6" stroke="#990"/><path d="M1542.7 0h10.6" stroke="#999600"/><path d="M1552.7 0h10.6" stroke="#999300"/><path d="M1562.7 0h10.6" stroke="#999000"/><path d="M1572.7 0h10.6" stroke="#998d00"/><path d="M1582.7 0h10.6" stroke="#998a00"/><path d="M1592.7 0h10.6" stroke="#980"/><path d="M1602.7 0h10.6" stroke="#998500"/><path d="M1612.7 0h10.6" stroke="#998300"/><path d="M1622.7 0h10.6" stroke="#998000"/><path d="M1632.7 0h10.6" stroke="#997e00"/></g><g transform="translate(0,461)"><path d="M1452.7 0h10.6" stroke="#839902"/><path d="M1462.7 0h10.6" stroke="#869901"/><path d="M1472.7 0h10.6" stroke="#899901"/><path d="M1482.7 0h10.6" stroke="#8c9900"/><path d="M1492.7 0h10.6" stroke="#8f9900"/><path d="M1502.7 0h10.6" stroke="#929900"/><path d="M1512.7 0h10.6" stroke="#959900"/><path d="M1522.7 0h10.6" stroke="#990"/><path d="M1532.7 0h10.6" stroke="#999600"/><path d="M1542.7 0h10.6" stroke="#999300"/><path d="M1552.7 0h10.6" stroke="#999000"/><path d="M1562.7 0h10.6" stroke="#998d00"/><path d="M1572.7 0h10.6" stroke="#998b00"/><path d="M1582.7 0h10.6" stroke="#980"/><path d="M1592.7 0h10.6" stroke="#998500"/><path d="M1602.7 0h10.6" stroke="#998300"/><path d="M1612.7 0h10.6" stroke="#998000"/><path d="M1622.7 0h10.6" stroke="#997e00"/><path d="M1632.7 0h10.6" stroke="#997b00"/></g><g transform="translate(0,471)"><path d="M1472.7 0h10.6" stroke="#8c9902"/><path d="M1482.7 0h10.6" stroke="#8f9901"/><path d="M1492.7 0h10.6" stroke="#929901"/><path d="M1502.7 0h10.6" stroke="#959900"/><path d="M1512.7 0h10.6" stroke="#989900"/><path d="M1522.7 0h10.6" stroke="#999700"/><path d="M1532.7 0h10.6" stroke="#999300"/><path d="M1542.7 0h10.6" stroke="#999000"/><path d="M1552.7 0h10.6" stroke="#998e00"/><path d="M1562.7 0h10.6" stroke="#998b00"/><path d="M1572.7 0h10.6" stroke="#980"/><path d="M1582.7 0h10.6" stroke="#998500"/><path d="M1592.7 0h10.6" stroke="#998300"/><path d="M1602.7 0h10.6" stroke="#998000"/><path d="M1612.7 0h10.6" stroke="#997e00"/><path d="M1622.7 0h10.6" stroke="#997c00"/><path d="M1632.7 0h10.6" stroke="#997900"/></g><g transform="translate(0,481)"><path d="M1492.7 0h10.6" stroke="#959902"/><path d="M1502.7 0h10.6" stroke="#989901"/><path d="M1512.7 0h10.6" stroke="#999701"/><path d="M1522.7 0h10.6" stroke="#999400"/><path d="M1532.7 0h10.6" stroke="#999100"/><path d="M1542.7 0h10.6" stroke="#998e00"/><path d="M1552.7 0h10.6" stroke="#998b00"/><path d="M1562.7 0h10.6" stroke="#980"/><path d="M1572.7 0h10.6" stroke="#998500"/><path d="M1582.7 0h10.6" stroke="#998300"/><path d="M1592.7 0h10.6" stroke="#998000"/><path d="M1602.7 0h10.6" stroke="#997e00"/><path d="M1612.7 0h10.6" stroke="#997c00"/><path d="M1622.7 0h10.6" stroke="#997900"/><path d="M1632.7 0h10.6" stroke="#970"/></g><g transform="translate(0,491)"><path d="M1502.7 0h10.6" stroke="#999703"/><path d="M1512.7 0h10.6" stroke="#999402"/><path d="M1522.7 0h10.6" stroke="#999101"/><path d="M1532.7 0h10.6" stroke="#998e00"/><path d="M1542.7 0h10.6" stroke="#998b00"/><path d="M1552.7 0h10.6" stroke="#980"/><path d="M1562.7 0h10.6" stroke="#998600"/><path d="M1572.7 0h10.6" stroke="#998300"/><path d="M1582.7 0h10.6" stroke="#998000"/><path d="M1592.7 0h10.6" stroke="#997e00"/><path d="M1602.7 0h10.6" stroke="#997c00"/><path d="M1612.7 0h10.6" stroke="#997900"/><path d="M1622.7 0h10.6" stroke="#970"/><path d="M1632.7 0h10.6" stroke="#997500"/></g><g transform="translate(0,501)"><path d="M1522.7 0h10.6" stroke="#998e02"/><path d="M1532.7 0h10.6" stroke="#998b02"/><path d="M1542.7 0h10.6" stroke="#998801"/><path d="M1552.7 0h10.6" stroke="#998600"/><path d="M1562.7 0h10.6" stroke="#998300"/><path d="M1572.7 0h10.6" stroke="#998100"/><path d="M1582.7 0h10.6" stroke="#997e00"/><path d="M1592.7 0h10.6" stroke="#997c00"/><path d="M1602.7 0h10.6" stroke="#997900"/><path d="M1612.7 0h10.6" stroke="#970"/><path d="M1622.7 0h10.6" stroke="#997500"/><path d="M1632.7 0h10.6" stroke="#997300"/></g><g transform="translate(0,511)"><path d="M1542.7 0h10.6" stroke="#998602"/><path d="M1552.7 0h10.6" stroke="#998302"/><path d="M1562.7 0h10.6" stroke="#998101"/><path d="M1572.7 0h10.6" stroke="#997e00"/><path d="M1582.7 0h10.6" stroke="#997c00"/><path d="M1592.7 0h10.6" stroke="#997900"/><path d="M1602.7 0h10.6" stroke="#970"/><path d="M1612.7 0h10.6" stroke="#997500"/><path d="M1622.7 0h10.6" stroke="#997300"/><path d="M1632.7 0h10.6" stroke="#997000"/></g><g transform="translate(0,521)"><path d="M1562.7 0h10.6" stroke="#997e02"/><path d="M1572.7 0h10.6" stroke="#997c01"/><path d="M1582.7 0h10.6" stroke="#997901"/><path d="M1592.7 0h10.6" stroke="#970"/><path d="M1602.7 0h10.6" stroke="#997500"/><path d="M1612.7 0h10.6" stroke="#997300"/><path d="M1622.7 0h10.6" stroke="#997000"/><path d="M1632.7 0h10.6" stroke="#996e00"/></g><g transform="translate(0,531)"><path d="M1582.7 0h10.6" stroke="#997702"/><path d="M1592.7 0h10.6" stroke="#997501"/><path d="M1602.7 0h10.6" stroke="#997301"/><path d="M1612.7 0h10.6" stroke="#997000"/><path d="M1622.7 0h10.6" stroke="#996e00"/><path d="M1632.7 0h10.6" stroke="#996c00"/></g><g transform="translate(0,541)"><path d="M1602.7 0h10.6" stroke="#997002"/><path d="M1612.7 0h10.6" stroke="#996e01"/><path d="M1622.7 0h10.6" stroke="#996c01"/><path d="M1632.7 0h10.6" stroke="#996a00"/></g><g transform="translate(0,551)"><path d="M1622.7 0h10.6" stroke="#996a02"/><path d="M1632.7 0h10.6" stroke="#996801"/></g></g></g><g clip-path="url(#cpi2)"><g filter="url(#bl2)" stroke-width="10.6" fill="none"><g transform="translate(0,401)"><path d="M1392.7 0h10.6" stroke="#a8ff00"/><path d="M1402.7 0h10.6" stroke="#acff00"/></g><g transform="translate(0,411)"><path d="M1392.7 0h10.6" stroke="#abff00"/><path d="M1402.7 0h10.6" stroke="#afff00"/><path d="M1412.7 0h10.6" stroke="#b4ff00"/><path d="M1422.7 0h10.6" stroke="#b8ff00"/></g><g transform="translate(0,421)"><path d="M1392.7 0h10.6" stroke="#aeff02"/><path d="M1402.7 0h10.6" stroke="#b3ff01"/><path d="M1412.7 0h10.6" stroke="#b7ff00"/><path d="M1422.7 0h10.6" stroke="#bcff00"/><path d="M1432.7 0h10.6" stroke="#c1ff00"/><path d="M1442.7 0h10.6" stroke="#c5ff00"/></g><g transform="translate(0,431)"><path d="M1392.7 0h10.6" stroke="#b2ff04"/><path d="M1402.7 0h10.6" stroke="#b6ff03"/><path d="M1412.7 0h10.6" stroke="#bbff02"/><path d="M1422.7 0h10.6" stroke="#c0ff00"/><path d="M1432.7 0h10.6" stroke="#c4ff00"/><path d="M1442.7 0h10.6" stroke="#c9ff00"/><path d="M1452.7 0h10.6" stroke="#ceff00"/><path d="M1462.7 0h10.6" stroke="#d3ff00"/></g><g transform="translate(0,441)"><path d="M1392.7 0h10.6" stroke="#b5ff06"/><path d="M1402.7 0h10.6" stroke="#baff05"/><path d="M1412.7 0h10.6" stroke="#bfff04"/><path d="M1422.7 0h10.6" stroke="#c4ff02"/><path d="M1432.7 0h10.6" stroke="#c8ff01"/><path d="M1442.7 0h10.6" stroke="#cdff00"/><path d="M1452.7 0h10.6" stroke="#d2ff00"/><path d="M1462.7 0h10.6" stroke="#d7ff00"/><path d="M1472.7 0h10.6" stroke="#dcff00"/><path d="M1482.7 0h10.6" stroke="#e1ff00"/></g><g transform="translate(0,451)"><path d="M1392.7 0h10.6" stroke="#b9ff08"/><path d="M1402.7 0h10.6" stroke="#beff07"/><path d="M1412.7 0h10.6" stroke="#c3ff06"/><path d="M1422.7 0h10.6" stroke="#c7ff04"/><path d="M1432.7 0h10.6" stroke="#ccff03"/><path d="M1442.7 0h10.6" stroke="#d1ff02"/><path d="M1452.7 0h10.6" stroke="#d6ff01"/><path d="M1462.7 0h10.6" stroke="#dbff00"/><path d="M1472.7 0h10.6" stroke="#e0ff00"/><path d="M1482.7 0h10.6" stroke="#e5ff00"/><path d="M1492.7 0h10.6" stroke="#eaff00"/></g><g transform="translate(0,461)"><path d="M1392.7 0h10.6" stroke="#bdff0a"/><path d="M1402.7 0h10.6" stroke="#c2ff09"/><path d="M1412.7 0h10.6" stroke="#c6ff08"/><path d="M1422.7 0h10.6" stroke="#cbff07"/><path d="M1432.7 0h10.6" stroke="#d0ff05"/><path d="M1442.7 0h10.6" stroke="#d5ff04"/><path d="M1452.7 0h10.6" stroke="#daff03"/><path d="M1462.7 0h10.6" stroke="#dfff02"/><path d="M1472.7 0h10.6" stroke="#e4ff01"/><path d="M1482.7 0h10.6" stroke="#e9ff00"/><path d="M1492.7 0h10.6" stroke="#efff00"/><path d="M1502.7 0h10.6" stroke="#f4ff00"/><path d="M1512.7 0h10.6" stroke="#f9ff00"/></g><g transform="translate(0,471)"><path d="M1392.7 0h10.6" stroke="#c1ff0c"/><path d="M1402.7 0h10.6" stroke="#c6ff0b"/><path d="M1412.7 0h10.6" stroke="#caff0a"/><path d="M1422.7 0h10.6" stroke="#cfff09"/><path d="M1432.7 0h10.6" stroke="#d4ff08"/><path d="M1442.7 0h10.6" stroke="#d9ff07"/><path d="M1452.7 0h10.6" stroke="#deff05"/><path d="M1462.7 0h10.6" stroke="#e4ff04"/><path d="M1472.7 0h10.6" stroke="#e9ff03"/><path d="M1482.7 0h10.6" stroke="#eeff02"/><path d="M1492.7 0h10.6" stroke="#f3ff01"/><path d="M1502.7 0h10.6" stroke="#f8ff00"/><path d="M1512.7 0h10.6" stroke="#feff00"/><path d="M1522.7 0h10.6" stroke="#fffb00"/><path d="M1532.7 0h10.6" stroke="#fff600"/></g><g transform="translate(0,481)"><path d="M1392.7 0h10.6" stroke="#c5ff0e"/><path d="M1402.7 0h10.6" stroke="#c9ff0d"/><path d="M1412.7 0h10.6" stroke="#ceff0c"/><path d="M1422.7 0h10.6" stroke="#d3ff0b"/><path d="M1432.7 0h10.6" stroke="#d9ff0a"/><path d="M1442.7 0h10.6" stroke="#deff09"/><path d="M1452.7 0h10.6" stroke="#e3ff08"/><path d="M1462.7 0h10.6" stroke="#e8ff07"/><path d="M1472.7 0h10.6" stroke="#edff05"/><path d="M1482.7 0h10.6" stroke="#f3ff04"/><path d="M1492.7 0h10.6" stroke="#f8ff03"/><path d="M1502.7 0h10.6" stroke="#fdff02"/><path d="M1512.7 0h10.6" stroke="#fffb01"/><path d="M1522.7 0h10.6" stroke="#fff600"/><path d="M1532.7 0h10.6" stroke="#fff100"/><path d="M1542.7 0h10.6" stroke="#ffec00"/><path d="M1552.7 0h10.6" stroke="#ffe800"/></g><g transform="translate(0,491)"><path d="M1392.7 0h10.6" stroke="#c9ff10"/><path d="M1402.7 0h10.6" stroke="#ceff0f"/><path d="M1412.7 0h10.6" stroke="#d3ff0e"/><path d="M1422.7 0h10.6" stroke="#d8ff0d"/><path d="M1432.7 0h10.6" stroke="#ddff0c"/><path d="M1442.7 0h10.6" stroke="#e2ff0b"/><path d="M1452.7 0h10.6" stroke="#e7ff0a"/><path d="M1462.7 0h10.6" stroke="#edff09"/><path d="M1472.7 0h10.6" stroke="#f2ff08"/><path d="M1482.7 0h10.6" stroke="#f7ff06"/><path d="M1492.7 0h10.6" stroke="#fdff05"/><path d="M1502.7 0h10.6" stroke="#fffc04"/><path d="M1512.7 0h10.6" stroke="#fff703"/><path d="M1522.7 0h10.6" stroke="#fff202"/><path d="M1532.7 0h10.6" stroke="#ffed01"/><path d="M1542.7 0h10.6" stroke="#ffe800"/><path d="M1552.7 0h10.6" stroke="#ffe300"/><path d="M1562.7 0h10.6" stroke="#ffdf00"/><path d="M1572.7 0h10.6" stroke="#ffda00"/></g><g transform="translate(0,501)"><path d="M1392.7 0h10.6" stroke="#cdff12"/><path d="M1402.7 0h10.6" stroke="#d2ff11"/><path d="M1412.7 0h10.6" stroke="#d7ff10"/><path d="M1422.7 0h10.6" stroke="#dcff0f"/><path d="M1432.7 0h10.6" stroke="#e1ff0e"/><path d="M1442.7 0h10.6" stroke="#e7ff0d"/><path d="M1452.7 0h10.6" stroke="#ecff0c"/><path d="M1462.7 0h10.6" stroke="#f1ff0b"/><path d="M1472.7 0h10.6" stroke="#f7ff0a"/><path d="M1482.7 0h10.6" stroke="#fcff09"/><path d="M1492.7 0h10.6" stroke="#fffc08"/><path d="M1502.7 0h10.6" stroke="#fff706"/><path d="M1512.7 0h10.6" stroke="#fff205"/><path d="M1522.7 0h10.6" stroke="#ffed04"/><path d="M1532.7 0h10.6" stroke="#ffe803"/><path d="M1542.7 0h10.6" stroke="#ffe302"/><path d="M1552.7 0h10.6" stroke="#ffdf01"/><path d="M1562.7 0h10.6" stroke="#ffda00"/><path d="M1572.7 0h10.6" stroke="#ffd600"/><path d="M1582.7 0h10.6" stroke="#ffd200"/><path d="M1592.7 0h10.6" stroke="#ffce00"/></g><g transform="translate(0,511)"><path d="M1392.7 0h10.6" stroke="#d1ff15"/><path d="M1402.7 0h10.6" stroke="#d6ff14"/><path d="M1412.7 0h10.6" stroke="#dbff13"/><path d="M1422.7 0h10.6" stroke="#e0ff12"/><path d="M1432.7 0h10.6" stroke="#e6ff11"/><path d="M1442.7 0h10.6" stroke="#ebff0f"/><path d="M1452.7 0h10.6" stroke="#f1ff0e"/><path d="M1462.7 0h10.6" stroke="#f6ff0d"/><path d="M1472.7 0h10.6" stroke="#fbff0c"/><path d="M1482.7 0h10.6" stroke="#fffd0b"/><path d="M1492.7 0h10.6" stroke="#fff80a"/><path d="M1502.7 0h10.6" stroke="#fff208"/><path d="M1512.7 0h10.6" stroke="#ffed07"/><path d="M1522.7 0h10.6" stroke="#ffe806"/><path d="M1532.7 0h10.6" stroke="#ffe405"/><path d="M1542.7 0h10.6" stroke="#ffdf04"/><path d="M1552.7 0h10.6" stroke="#ffdb03"/><path d="M1562.7 0h10.6" stroke="#ffd601"/><path d="M1572.7 0h10.6" stroke="#ffd200"/><path d="M1582.7 0h10.6" stroke="#ffce00"/><path d="M1592.7 0h10.6" stroke="#ffca00"/><path d="M1602.7 0h10.6" stroke="#ffc600"/><path d="M1612.7 0h10.6" stroke="#ffc300"/></g><g transform="translate(0,521)"><path d="M1392.7 0h10.6" stroke="#d5ff17"/><path d="M1402.7 0h10.6" stroke="#daff16"/><path d="M1412.7 0h10.6" stroke="#e0ff15"/><path d="M1422.7 0h10.6" stroke="#e5ff14"/><path d="M1432.7 0h10.6" stroke="#eaff13"/><path d="M1442.7 0h10.6" stroke="#f0ff12"/><path d="M1452.7 0h10.6" stroke="#f5ff11"/><path d="M1462.7 0h10.6" stroke="#fbff10"/><path d="M1472.7 0h10.6" stroke="#fffe0e"/><path d="M1482.7 0h10.6" stroke="#fff80d"/><path d="M1492.7 0h10.6" stroke="#fff30c"/><path d="M1502.7 0h10.6" stroke="#ffee0a"/><path d="M1512.7 0h10.6" stroke="#ffe909"/><path d="M1522.7 0h10.6" stroke="#ffe408"/><path d="M1532.7 0h10.6" stroke="#ffdf07"/><path d="M1542.7 0h10.6" stroke="#ffdb06"/><path d="M1552.7 0h10.6" stroke="#ffd704"/><path d="M1562.7 0h10.6" stroke="#ffd203"/><path d="M1572.7 0h10.6" stroke="#ffce02"/><path d="M1582.7 0h10.6" stroke="#ffca01"/><path d="M1592.7 0h10.6" stroke="#ffc600"/><path d="M1602.7 0h10.6" stroke="#ffc300"/><path d="M1612.7 0h10.6" stroke="#ffbf00"/><path d="M1622.7 0h10.6" stroke="#fb0"/><path d="M1632.7 0h10.6" stroke="#ffb800"/></g><g transform="translate(0,531)"><path d="M1392.7 0h10.6" stroke="#daff1a"/><path d="M1402.7 0h10.6" stroke="#dfff19"/><path d="M1412.7 0h10.6" stroke="#e4ff17"/><path d="M1422.7 0h10.6" stroke="#eaff16"/><path d="M1432.7 0h10.6" stroke="#efff15"/><path d="M1442.7 0h10.6" stroke="#f5ff14"/><path d="M1452.7 0h10.6" stroke="#faff13"/><path d="M1462.7 0h10.6" stroke="#fffe12"/><path d="M1472.7 0h10.6" stroke="#fff911"/><path d="M1482.7 0h10.6" stroke="#fff30f"/><path d="M1492.7 0h10.6" stroke="#ffee0e"/><path d="M1502.7 0h10.6" stroke="#ffe90c"/><path d="M1512.7 0h10.6" stroke="#ffe40b"/><path d="M1522.7 0h10.6" stroke="#ffe00a"/><path d="M1532.7 0h10.6" stroke="#ffdb09"/><path d="M1542.7 0h10.6" stroke="#ffd707"/><path d="M1552.7 0h10.6" stroke="#ffd206"/><path d="M1562.7 0h10.6" stroke="#ffce05"/><path d="M1572.7 0h10.6" stroke="#ffca04"/><path d="M1582.7 0h10.6" stroke="#ffc603"/><path d="M1592.7 0h10.6" stroke="#ffc302"/><path d="M1602.7 0h10.6" stroke="#ffbf01"/><path d="M1612.7 0h10.6" stroke="#fb0"/><path d="M1622.7 0h10.6" stroke="#ffb800"/><path d="M1632.7 0h10.6" stroke="#ffb400"/></g><g transform="translate(0,541)"><path d="M1392.7 0h10.6" stroke="#deff1c"/><path d="M1402.7 0h10.6" stroke="#e3ff1b"/><path d="M1412.7 0h10.6" stroke="#e9ff1a"/><path d="M1422.7 0h10.6" stroke="#eeff19"/><path d="M1432.7 0h10.6" stroke="#f4ff18"/><path d="M1442.7 0h10.6" stroke="#faff17"/><path d="M1452.7 0h10.6" stroke="#ffff16"/><path d="M1462.7 0h10.6" stroke="#fff914"/><path d="M1472.7 0h10.6" stroke="#fff413"/><path d="M1482.7 0h10.6" stroke="#ffef11"/><path d="M1492.7 0h10.6" stroke="#ffe910"/><path d="M1502.7 0h10.6" stroke="#ffe50e"/><path d="M1512.7 0h10.6" stroke="#ffe00d"/><path d="M1522.7 0h10.6" stroke="#ffdb0c"/><path d="M1532.7 0h10.6" stroke="#ffd70b"/><path d="M1542.7 0h10.6" stroke="#ffd309"/><path d="M1552.7 0h10.6" stroke="#ffce08"/><path d="M1562.7 0h10.6" stroke="#ffca07"/><path d="M1572.7 0h10.6" stroke="#ffc606"/><path d="M1582.7 0h10.6" stroke="#ffc305"/><path d="M1592.7 0h10.6" stroke="#ffbf04"/><path d="M1602.7 0h10.6" stroke="#ffbb03"/><path d="M1612.7 0h10.6" stroke="#ffb802"/><path d="M1622.7 0h10.6" stroke="#ffb401"/><path d="M1632.7 0h10.6" stroke="#ffb100"/></g><g transform="translate(0,551)"><path d="M1392.7 0h10.6" stroke="#e3ff1f"/><path d="M1402.7 0h10.6" stroke="#e8ff1e"/><path d="M1412.7 0h10.6" stroke="#eeff1d"/><path d="M1422.7 0h10.6" stroke="#f3ff1b"/><path d="M1432.7 0h10.6" stroke="#f9ff1a"/><path d="M1442.7 0h10.6" stroke="#ffff19"/><path d="M1452.7 0h10.6" stroke="#fffa18"/><path d="M1462.7 0h10.6" stroke="#fff416"/><path d="M1472.7 0h10.6" stroke="#ffef15"/><path d="M1482.7 0h10.6" stroke="#ffea13"/><path d="M1492.7 0h10.6" stroke="#ffe512"/><path d="M1502.7 0h10.6" stroke="#ffe010"/><path d="M1512.7 0h10.6" stroke="#ffdb0f"/><path d="M1522.7 0h10.6" stroke="#ffd70e"/><path d="M1532.7 0h10.6" stroke="#ffd30c"/><path d="M1542.7 0h10.6" stroke="#ffce0b"/><path d="M1552.7 0h10.6" stroke="#ffca0a"/><path d="M1562.7 0h10.6" stroke="#ffc609"/><path d="M1572.7 0h10.6" stroke="#ffc208"/><path d="M1582.7 0h10.6" stroke="#ffbf07"/><path d="M1592.7 0h10.6" stroke="#ffbb06"/><path d="M1602.7 0h10.6" stroke="#ffb805"/><path d="M1612.7 0h10.6" stroke="#ffb404"/><path d="M1622.7 0h10.6" stroke="#ffb103"/><path d="M1632.7 0h10.6" stroke="#ffad02"/></g><g transform="translate(0,561)"><path d="M1392.7 0h10.6" stroke="#e7ff21"/><path d="M1402.7 0h10.6" stroke="#edff20"/><path d="M1412.7 0h10.6" stroke="#f3ff1f"/><path d="M1422.7 0h10.6" stroke="#f8ff1e"/><path d="M1432.7 0h10.6" stroke="#feff1d"/><path d="M1442.7 0h10.6" stroke="#fffa1b"/><path d="M1452.7 0h10.6" stroke="#fff51a"/><path d="M1462.7 0h10.6" stroke="#ffef18"/><path d="M1472.7 0h10.6" stroke="#ffea17"/><path d="M1482.7 0h10.6" stroke="#ffe515"/><path d="M1492.7 0h10.6" stroke="#ffe014"/><path d="M1502.7 0h10.6" stroke="#ffdc12"/><path d="M1512.7 0h10.6" stroke="#ffd711"/><path d="M1522.7 0h10.6" stroke="#ffd310"/><path d="M1532.7 0h10.6" stroke="#ffce0e"/><path d="M1542.7 0h10.6" stroke="#ffca0d"/><path d="M1552.7 0h10.6" stroke="#ffc60c"/><path d="M1562.7 0h10.6" stroke="#ffc20b"/><path d="M1572.7 0h10.6" stroke="#ffbf0a"/><path d="M1582.7 0h10.6" stroke="#ffbb08"/><path d="M1592.7 0h10.6" stroke="#ffb707"/><path d="M1602.7 0h10.6" stroke="#ffb406"/><path d="M1612.7 0h10.6" stroke="#ffb105"/><path d="M1622.7 0h10.6" stroke="#ffad04"/><path d="M1632.7 0h10.6" stroke="#ffaa03"/></g></g></g><rect x="1413" y="406" width="206" height="139" fill="none" stroke="#9a9a9a" stroke-width="1.6"/><rect x="1509.5" y="469.0" width="13" height="13" fill="none" stroke="#fff" stroke-width="1.4"/><circle cx="1525.4" cy="439.5" r="3.9" fill="rgb(188,188,5)" stroke="#000" stroke-width="1.1"/><circle cx="1457.6" cy="501.3" r="3.9" fill="rgb(187,187,45)" stroke="#000" stroke-width="1.1"/></svg><div class="a" id="topbar"></div><div class="a tab" style="left:0;width:66px"></div><div class="t" style="left:0.15px;top:9.78px;font-size:14.2px;color:#e8e8e8;font-weight:normal;transform:scaleX(1.0475);">History 1</div><div class="a tab" style="left:67px;width:40px"><div class="a" style="left:8px;top:4.5px;width:25px;height:25px;border-radius:50%;background:linear-gradient(#2a2a2a,#444)"></div></div><div class="t" style="left:81px;top:9px;font-size:15px;color:#888">+</div><div class="a dev" style="left:1048px;width:133px"><div class="a" style="left:0;top:0;width:7px;height:33px;background:#18d818"></div><div class="a dd" style="left:98px"></div></div><div class="t" style="left:1059.10px;top:0.97px;font-size:10.9px;color:#f0f0f0;font-weight:normal;transform:scaleX(1.2018);-webkit-text-stroke:.3px #f0f0f0">X-Rite i1Pro 3</div><div class="t" style="left:1059.40px;top:19.77px;font-size:10.9px;color:#f0f0f0;font-weight:normal;transform:scaleX(1.2507);-webkit-text-stroke:.3px #f0f0f0">Direct View</div><div class="a dev" style="left:1182px;width:44px"><div class="a" style="left:8.9px;top:-1.8px;width:32.6px;height:32.6px;border-radius:50%;background:#0000f0;border:1.2px solid #fff;box-sizing:border-box"></div></div><div class="t" style="left:1198.40px;top:10.87px;font-size:10.2px;color:#fff;font-weight:bold;transform:scaleX(1.0328);">631</div><div class="a dev" style="left:1234px;width:162px"><div class="a" style="left:0;top:0;width:7px;height:33px;background:#18d818"></div><div class="a dd" style="left:130.5px"></div></div><div class="t" style="left:1245.20px;top:0.97px;font-size:10.9px;color:#f0f0f0;font-weight:normal;transform:scaleX(1.2488);-webkit-text-stroke:.3px #f0f0f0">Mobile Forge</div><div class="a dev" style="left:1404.5px;width:178.5px"><div class="a" style="left:0;top:0;width:7px;height:33px;background:#f0f000"></div><div class="a dd" style="left:147px"></div></div><div class="t" style="left:1415.50px;top:0.97px;font-size:10.9px;color:#f0f0f0;font-weight:normal;transform:scaleX(1.2452);-webkit-text-stroke:.3px #f0f0f0">Direct Display Control</div><div class="a" style="left:1587px;top:-3px;width:42.2px;height:34.2px;border-radius:0 0 7px 7px;border:1.3px solid #cfcfcf;box-sizing:border-box;background:linear-gradient(#5c5c5c,#777)"><div class="a" style="left:7.2px;top:2.7px;width:24.8px;height:24.8px;border-radius:50%;background:linear-gradient(#535353,#9a9a9a)"></div></div><svg class="a" style="left:1595.9px;top:1.4px" width="24" height="24" viewBox="-12 -12 24 24"><g fill="#e2e2e2"><rect x="-1.4" y="-8.4" width="2.8" height="3" transform="rotate(0)"/><rect x="-1.4" y="-8.4" width="2.8" height="3" transform="rotate(45)"/><rect x="-1.4" y="-8.4" width="2.8" height="3" transform="rotate(90)"/><rect x="-1.4" y="-8.4" width="2.8" height="3" transform="rotate(135)"/><rect x="-1.4" y="-8.4" width="2.8" height="3" transform="rotate(180)"/><rect x="-1.4" y="-8.4" width="2.8" height="3" transform="rotate(225)"/><rect x="-1.4" y="-8.4" width="2.8" height="3" transform="rotate(270)"/><rect x="-1.4" y="-8.4" width="2.8" height="3" transform="rotate(315)"/></g><circle r="5.05" fill="none" stroke="#e2e2e2" stroke-width="2.3"/></svg><div class="a" style="left:1629.8px;top:-3px;width:42px;height:34.2px;border-radius:0 0 7px 7px;border:1.3px solid #cfcfcf;box-sizing:border-box;background:linear-gradient(#5c5c5c,#777)"><div class="a" style="left:4.1px;top:2.7px;width:24.8px;height:24.8px;border-radius:50%;background:linear-gradient(#535353,#9a9a9a)"></div><div class="a" style="left:12.1px;top:9.2px;border-top:5.6px solid transparent;border-bottom:5.6px solid transparent;border-right:9px solid #fff"></div></div><div class="t" style="left:43.36px;top:58.79px;font-size:36.4px;color:#f4f4f4;font-weight:normal;transform:scaleX(1.0360);">Saturation Sweeps</div><div class="t" style="left:77.80px;top:596.20px;font-size:25.4px;color:#f4f4f4;font-weight:normal;transform:scaleX(1.1166);">Avg dE2000: 4,5</div><div class="t" style="left:64.62px;top:636.20px;font-size:25.4px;color:#f4f4f4;font-weight:normal;transform:scaleX(1.1419);">Max dE2000: 6,84</div><div class="t" style="left:34.86px;top:682.00px;font-size:25.4px;color:#f4f4f4;font-weight:normal;transform:scaleX(1.1445);">Current Reading</div><div class="t" style="left:34.90px;top:719.23px;font-size:21.7px;color:#f4f4f4;font-weight:normal;transform:scaleX(1.1169);">x: 0,422</div><div class="t" style="left:186.80px;top:719.23px;font-size:21.7px;color:#f4f4f4;font-weight:normal;transform:scaleX(1.1128);">y: 0,518</div><div class="t" style="left:35.40px;top:759.23px;font-size:21.7px;color:#f4f4f4;font-weight:normal;transform:scaleX(1.1122);">fL: 49,21</div><div class="t" style="left:35.40px;top:791.93px;font-size:21.7px;color:#f4f4f4;font-weight:normal;transform:scaleX(1.1620);">cd/m²: 168,6</div><div class="a" style="left:384px;top:416.5px;width:572px;height:157px;background:#000"></div><div class="sw" style="left:403.6px;background:#bfbfa1"><i style="background:#b9c1a6"></i></div><div class="swl" style="left:403.6px">20%</div><div class="sw" style="left:515.3px;background:#c0c088"><i style="background:#b8c083"></i></div><div class="swl" style="left:515.3px">40%</div><div class="sw" style="left:627px;background:#bfbf6b"><i style="background:#b7bd5e"></i></div><div class="swl" style="left:627px">60%</div><div class="sw" style="left:738.7px;background:#c0c04b"><i style="background:#b5bc2e"></i></div><div class="swl" style="left:738.7px">80%</div><div class="sw" style="left:850.4px;background:#c0c030"><i style="background:#bebe00"></i></div><div class="swl" style="left:850.4px">100%</div><div class="t" style="left:387px;top:469px;font-size:11.5px;font-weight:bold;color:#fff;transform:rotate(-90deg);transform-origin:0 0">Actual</div><div class="t" style="left:387px;top:541.5px;font-size:11.5px;font-weight:bold;color:#fff;transform:rotate(-90deg);transform-origin:0 0">Target</div><div class="a" style="left:629px;top:596px;width:697.5px;height:221px;background:#2a2a2a"></div><div class="a" style="left:629px;top:595.9px;width:697.5px;height:28.8px;background:linear-gradient(#2e2e2e,#2a2a2a 49%,#1d1d1d 51%,#0c0c0c)"></div><div class="a" style="left:629px;top:595.9px;width:19.1px;height:28.8px;background:#000"></div><div class="t" style="left:809.40px;top:603.93px;font-size:14.5px;color:#f4f4f4;font-weight:normal;transform:scaleX(1.3114);-webkit-text-stroke:.3px #f4f4f4">20%</div><div class="t" style="left:914.10px;top:603.93px;font-size:14.5px;color:#f4f4f4;font-weight:normal;transform:scaleX(1.3114);-webkit-text-stroke:.3px #f4f4f4">40%</div><div class="t" style="left:1018.80px;top:603.93px;font-size:14.5px;color:#f4f4f4;font-weight:normal;transform:scaleX(1.3114);-webkit-text-stroke:.3px #f4f4f4">60%</div><div class="t" style="left:1123.50px;top:603.93px;font-size:14.5px;color:#f4f4f4;font-weight:normal;transform:scaleX(1.3114);-webkit-text-stroke:.3px #f4f4f4">80%</div><div class="t" style="left:1227.69px;top:603.93px;font-size:14.5px;color:#f4f4f4;font-weight:normal;transform:scaleX(1.3124);-webkit-text-stroke:.3px #f4f4f4">100%</div><div class="row" style="top:624.7px;height:28.4px;background:#454545"></div><div class="a" style="left:629px;top:624.7px;width:19.1px;height:28.4px;background:linear-gradient(#2e2e2e,#242424)"></div><div class="t" style="left:654.10px;top:633.83px;font-size:14.5px;color:#f4f4f4;font-weight:normal;transform:scaleX(1.3665);-webkit-text-stroke:.3px #f4f4f4">x: CIE31</div><div class="cell" style="left:808px;top:633.83px">0,3242</div><div class="cell" style="left:912.7px;top:633.83px">0,3534</div><div class="cell" style="left:1017.4px;top:633.83px">0,3819</div><div class="cell" style="left:1122.1px;top:633.83px">0,4051</div><div class="cell" style="left:1227.6px;top:633.83px">0,4220</div><div class="row" style="top:653px;height:27.4px;background:#7c7c7c"></div><div class="a" style="left:629px;top:653px;width:19.1px;height:27.4px;background:linear-gradient(#3a3a3a,#303030)"></div><div class="t" style="left:654.10px;top:661.13px;font-size:14.5px;color:#f4f4f4;font-weight:normal;transform:scaleX(1.3665);-webkit-text-stroke:.3px #f4f4f4">y: CIE31</div><div class="cell" style="left:808px;top:661.13px">0,3606</div><div class="cell" style="left:912.7px;top:661.13px">0,4100</div><div class="cell" style="left:1017.4px;top:661.13px">0,4580</div><div class="cell" style="left:1122.1px;top:661.13px">0,4955</div><div class="cell" style="left:1227.6px;top:661.13px">0,5180</div><div class="row" style="top:680.3px;height:27.4px;background:#454545"></div><div class="a" style="left:629px;top:680.3px;width:19.1px;height:27.4px;background:linear-gradient(#2e2e2e,#242424)"></div><div class="t" style="left:654.10px;top:688.43px;font-size:14.5px;color:#f4f4f4;font-weight:normal;transform:scaleX(1.2500);-webkit-text-stroke:.3px #f4f4f4">Y</div><div class="cell" style="left:808px;top:688.43px">185,4740</div><div class="cell" style="left:912.7px;top:688.43px">179,9224</div><div class="cell" style="left:1017.4px;top:688.43px">175,5967</div><div class="cell" style="left:1122.1px;top:688.43px">172,6023</div><div class="cell" style="left:1227.6px;top:688.43px">168,5970</div><div class="row" style="top:707.6px;height:27.4px;background:#7c7c7c"></div><div class="a" style="left:629px;top:707.6px;width:19.1px;height:27.4px;background:linear-gradient(#3a3a3a,#303030)"></div><div class="t" style="left:654.10px;top:715.73px;font-size:14.5px;color:#f4f4f4;font-weight:normal;transform:scaleX(1.4566);-webkit-text-stroke:.3px #f4f4f4">Target x:CIE31</div><div class="cell" style="left:808px;top:715.73px">0,3344</div><div class="cell" style="left:912.7px;top:715.73px">0,3564</div><div class="cell" style="left:1017.4px;top:715.73px">0,3773</div><div class="cell" style="left:1122.1px;top:715.73px">0,3969</div><div class="cell" style="left:1227.6px;top:715.73px">0,4193</div><div class="row" style="top:734.9px;height:27.4px;background:#454545"></div><div class="a" style="left:629px;top:734.9px;width:19.1px;height:27.4px;background:linear-gradient(#2e2e2e,#242424)"></div><div class="t" style="left:654.10px;top:743.03px;font-size:14.5px;color:#f4f4f4;font-weight:normal;transform:scaleX(1.4566);-webkit-text-stroke:.3px #f4f4f4">Target y:CIE31</div><div class="cell" style="left:808px;top:743.03px">0,3648</div><div class="cell" style="left:912.7px;top:743.03px">0,4013</div><div class="cell" style="left:1017.4px;top:743.03px">0,4358</div><div class="cell" style="left:1122.1px;top:743.03px">0,4682</div><div class="cell" style="left:1227.6px;top:743.03px">0,5053</div><div class="row" style="top:762.2px;height:27.4px;background:#7c7c7c"></div><div class="a" style="left:629px;top:762.2px;width:19.1px;height:27.4px;background:linear-gradient(#3a3a3a,#303030)"></div><div class="t" style="left:654.10px;top:770.33px;font-size:14.5px;color:#f4f4f4;font-weight:normal;transform:scaleX(1.4780);-webkit-text-stroke:.3px #f4f4f4">Target Y</div><div class="cell" style="left:808px;top:770.33px">187,1434</div><div class="cell" style="left:912.7px;top:770.33px">183,8584</div><div class="cell" style="left:1017.4px;top:770.33px">181,3344</div><div class="cell" style="left:1122.1px;top:770.33px">179,3536</div><div class="cell" style="left:1227.6px;top:770.33px">177,4386</div><div class="row" style="top:789.5px;height:27.4px;background:#454545"></div><div class="a" style="left:629px;top:789.5px;width:19.1px;height:27.4px;background:linear-gradient(#2e2e2e,#242424)"></div><div class="t" style="left:654.10px;top:797.63px;font-size:14.5px;color:#f4f4f4;font-weight:normal;transform:scaleX(1.4682);-webkit-text-stroke:.3px #f4f4f4">ΔE 2000</div><div class="cell" style="left:808px;top:797.63px">3,6003</div><div class="cell" style="left:912.7px;top:797.63px">2,5385</div><div class="cell" style="left:1017.4px;top:797.63px">3,0284</div><div class="cell" style="left:1122.1px;top:797.63px">3,1606</div><div class="cell" style="left:1227.6px;top:797.63px">1,6816</div><div class="a" style="left:0;top:824px;width:1651px;height:71px;background:linear-gradient(#484848,#2c2c2c)"></div><div class="a" style="left:0;top:817px;width:1651px;height:7px;background:linear-gradient(#333,#2a2a2a)"></div><div class="a" style="left:0;top:824.5px;width:50px;height:71px;border-radius:0 5px 0 0;background:linear-gradient(#999,#777 45%,#5c5c5c)"></div><div class="a" style="left:13px;top:827px;width:19px;height:19px;border-radius:50%;background:linear-gradient(#4a4a4a,#9a9a9a)"></div><div class="a" style="left:17.5px;top:832px;border-left:5px solid transparent;border-right:5px solid transparent;border-bottom:6px solid #222"></div><div class="a" style="left:2px;top:857px;width:42px;height:37px;border-radius:4px;background:#ffff00;box-shadow:inset 0 0 0 1px #c8c800"></div><div class="card" style="left:58.3px"><b style="background:#bfbfa1"></b></div><div class="t" style="left:139.40px;top:883.67px;font-size:14.8px;color:#262626;font-weight:bold;transform:scaleX(0.8419);">20%</div><div class="card" style="left:248.3px"><b style="background:#c0c088"></b></div><div class="t" style="left:329.40px;top:883.67px;font-size:14.8px;color:#262626;font-weight:bold;transform:scaleX(0.8419);">40%</div><div class="card" style="left:438.3px"><b style="background:#bfbf6b"></b></div><div class="t" style="left:519.40px;top:883.67px;font-size:14.8px;color:#262626;font-weight:bold;transform:scaleX(0.8419);">60%</div><div class="card" style="left:628.3px"><b style="background:#c0c04b"></b></div><div class="t" style="left:709.40px;top:883.67px;font-size:14.8px;color:#262626;font-weight:bold;transform:scaleX(0.8419);">80%</div><div class="card" style="left:818px;background:linear-gradient(#1a1a1a,#2a2a2a 50%,#444)"><b style="background:#c4c000;box-shadow:none"></b></div><div class="t" style="left:895.40px;top:883.67px;font-size:14.8px;color:#fff;font-weight:bold;transform:scaleX(0.8783);">100%</div><div class="a" style="left:1259.2px;top:824.7px;width:60.1px;height:71px;border-radius:5px 5px 0 0;background:linear-gradient(#adadad,#8e8e8e 22.4px,#333 22.4px,#333 23.4px,#858585 23.4px,#7c7c7c 30px,#5e5e5e)"></div><div class="a" style="left:1280.3px;top:826.8px;width:18.8px;height:18.8px;border-radius:50%;background:linear-gradient(#747474,#b0b0b0)"></div><div class="a" style="left:1284.2px;top:833.4px;border-left:5.5px solid transparent;border-right:5.5px solid transparent;border-bottom:4.6px solid #333"></div><div class="a" style="left:1269.4px;top:855.3px;width:39.4px;height:42px;border-radius:7px;border:2.6px solid #1a1a1a;box-sizing:border-box;background:linear-gradient(#adadad,#9a9a9a 19px,#6e6e6e 19px,#848484)"></div><div class="a" style="left:1280.9px;top:866.2px;width:17px;height:16.6px;background:linear-gradient(#262626,#1c1c1c 8.1px,#000 8.1px)"></div><div class="btn" style="left:1320.3px;width:58px"><u style="left:16.9px"></u></div><div class="btn" style="left:1379.3px;width:54.9px"><u style="left:15.35px"></u></div><div class="btn" style="left:1435px;width:55px"><u style="left:15.4px"></u></div><div class="btn" style="left:1492.1px;width:54.9px"><u style="left:15.35px"></u></div><div class="btn" style="left:1548px;width:55px"><u style="left:15.4px"></u></div><div class="a" style="left:1603px;top:824.5px;width:48px;height:37.4px;background:linear-gradient(#3c3c3c,#2a2a2a)"></div><div class="a" style="left:1620.1px;top:830.6px;width:25.2px;height:25.2px;border-radius:50%;background:linear-gradient(#222,#383838)"></div><svg class="a" style="left:0;top:0" width="1651" height="895"><g fill="#303030" stroke="none"><rect x="1344.4" y="838.4" width="9.5" height="9.5"/><path d="M1403.2 837.8L1413.6 843.7L1403.2 849.6Z"/></g><g fill="none" stroke="#303030" stroke-width="1.9"><path d="M1459.5 838.2H1456.700V849.600H1459.500M1466.500 838.200H1469.300V849.600H1466.500"/><path d="M1460.800 843.900H1465.400" stroke-dasharray="1.6 1.4"/><path d="M1519.300 843.400c-2.300-3.800-8-3.800-8 0s5.700 3.800 8 0s8-3.800 8 0s-5.700 3.800-8 0z" stroke-width="2"/><path d="M1569.300 841.300a6.200 6.200 0 0 1 10.600-2.200M1581.300 845.700a6.200 6.200 0 0 1-10.600 2.200" stroke-width="2.4"/></g><g fill="#303030"><path d="M1582.300 835.300v6.200h-6.200zM1568.300 851.700v-6.200h6.200z"/></g></svg><div class="nav" style="left:1320.3px;width:169.7px;border-radius:3px 0 0 0"></div><div class="nav" style="left:1492.1px;width:160px"></div><div class="a" style="left:1346.9px;top:869.8px;width:24.2px;height:24.2px;border-radius:50%;background:linear-gradient(#707070,#b0b0b0)"></div><div class="a" style="left:1613.6px;top:870.3px;width:24.2px;height:24.2px;border-radius:50%;background:linear-gradient(#707070,#b0b0b0)"></div><div class="t" style="left:1352.48px;top:863.51px;font-size:32px;color:#3a3a3a;font-weight:normal;transform:scaleX(0.7188);">«</div><div class="t" style="left:1618.98px;top:863.51px;font-size:32px;color:#3a3a3a;font-weight:normal;transform:scaleX(0.7188);">»</div><div class="t" style="left:1391.09px;top:869.82px;font-size:24.9px;color:#333;font-weight:normal;transform:scaleX(1.1542);text-shadow:0 1px 0 rgba(255,255,255,.2);-webkit-text-stroke:.7px #333">Back</div><div class="t" style="left:1524.41px;top:869.82px;font-size:24.9px;color:#333;font-weight:normal;transform:scaleX(1.2930);text-shadow:0 1px 0 rgba(255,255,255,.2);-webkit-text-stroke:.7px #333">Next</div></body></html>
